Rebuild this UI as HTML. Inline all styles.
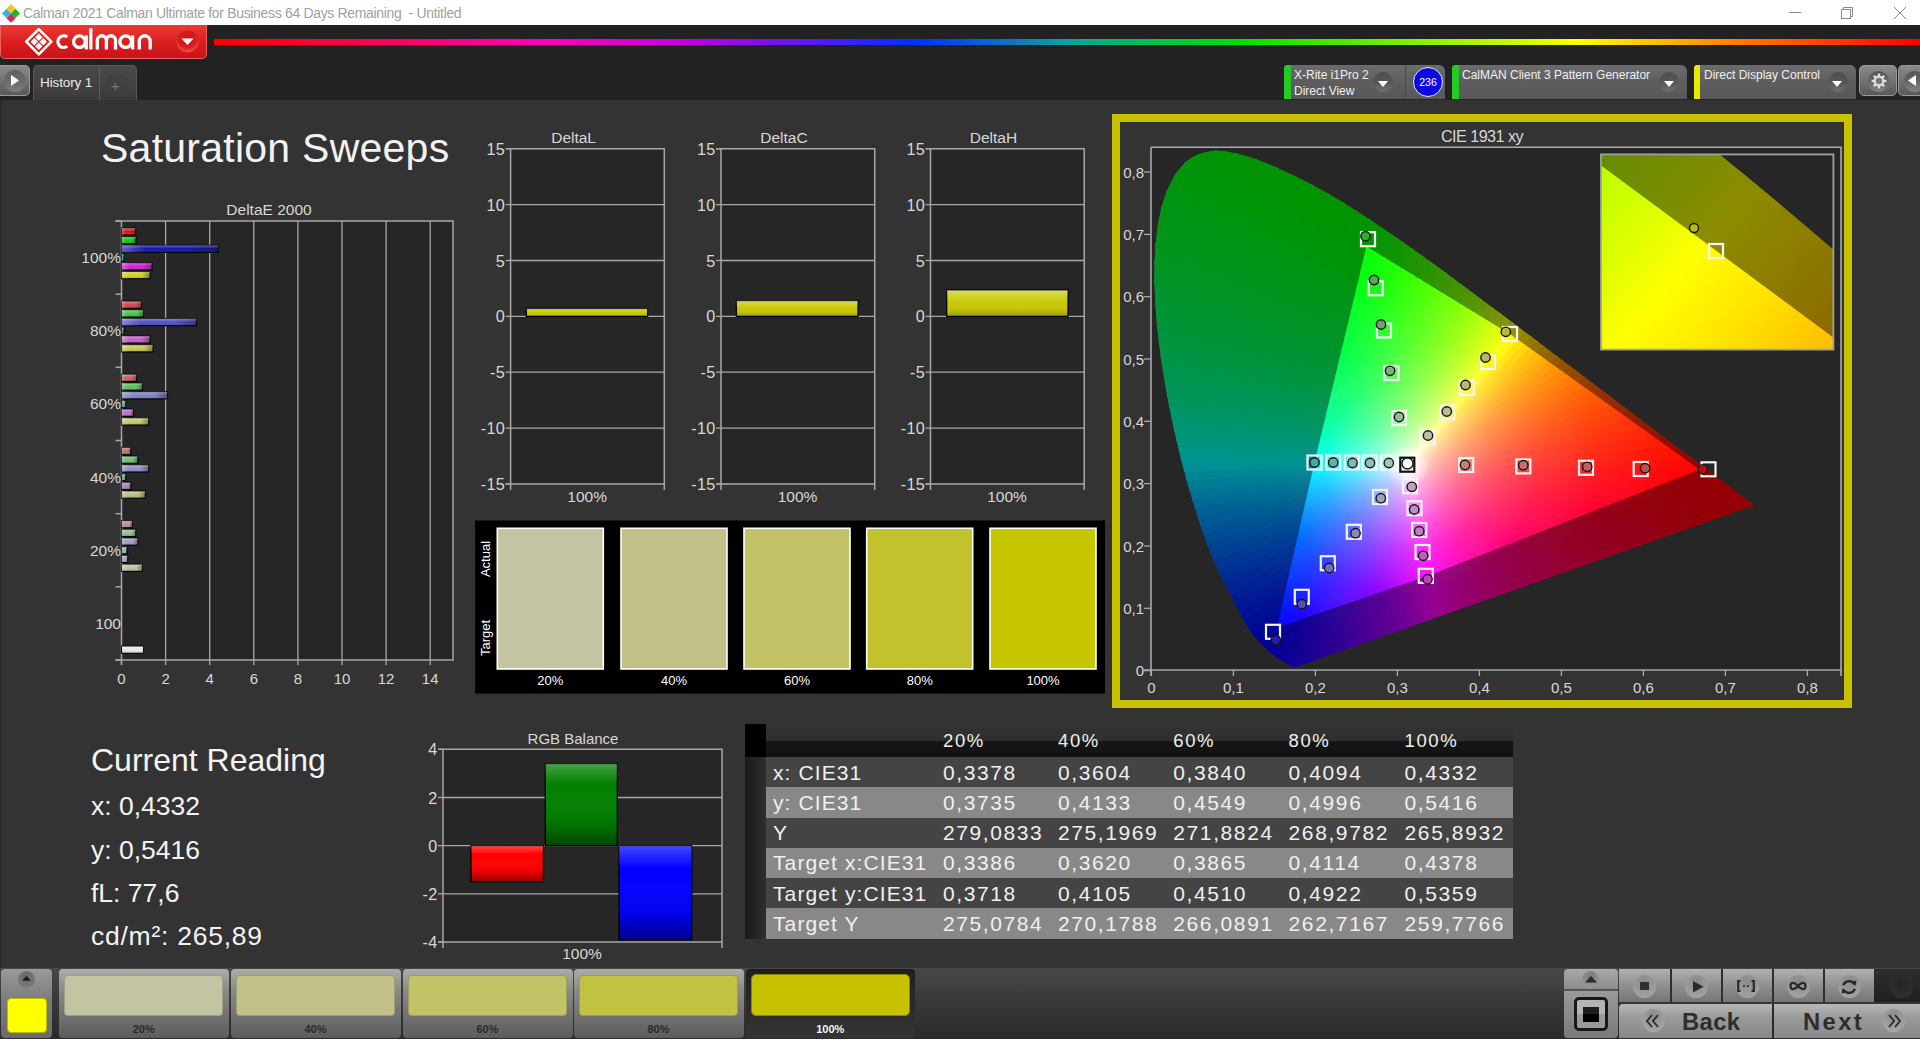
<!DOCTYPE html>
<html><head><meta charset="utf-8">
<style>
*{box-sizing:border-box}
html,body{margin:0;padding:0}
body{width:1920px;height:1039px;overflow:hidden;position:relative;background:#333333;font-family:"Liberation Sans",sans-serif;}
.a{position:absolute}
svg text{font-family:"Liberation Sans",sans-serif}
#titlebar{left:0;top:0;width:1920px;height:25px;background:#fff}
#titletxt{left:23px;top:5px;font-size:14px;line-height:17px;color:#a0a0a0;white-space:pre;letter-spacing:-0.33px}
#toolbar{left:0;top:25px;width:1920px;height:75px;background:#222222}
#bottombar{left:0;top:968px;width:1920px;height:71px;background:linear-gradient(#484848,#3a3a3a 40%,#2a2a2a)}
#main{left:0;top:100px;width:1920px;height:869px;background:#333333;border-left:1px solid #262626}
#logo{left:0;top:25px;width:207px;height:34px;border-radius:0 0 5px 5px;background:linear-gradient(#ec3a36,#d81a1c 60%,#c8141a);border:1px solid #f06060;border-top:none}
#rainbow{left:214px;top:39px;width:1706px;height:6px;background:linear-gradient(90deg,#ff0000 0%,#ff00c0 20%,#c000e0 28%,#0030ff 41%,#10a0a0 50%,#00e000 60%,#ffff00 80%,#ff8000 89%,#ff0000 100%)}
.tab{border-radius:5px 5px 0 0}
.dev{background:linear-gradient(#6c6c6c,#5e5e5e 50%,#585858);border-radius:6px 6px 0 0}
.dd{width:20px;height:20px;border-radius:50%;background:linear-gradient(#4e4e4e,#585858 55%,#707070)}
.dd:after{content:"";position:absolute;left:4.5px;top:8.5px;border-left:5.5px solid transparent;border-right:5.5px solid transparent;border-top:6.5px solid #fff}
.devt{font-size:12px;color:#f0f0f0;white-space:pre;line-height:14px}
.tt{font-size:21px;color:#f0f0f0;white-space:pre;line-height:24px;letter-spacing:1.6px}
.cr{font-size:26.5px;color:#f4f4f4;white-space:pre;line-height:30px}
</style></head>
<body>
<div id="titlebar" class="a"></div>
<svg class="a" style="left:0.5px;top:2.7px" width="20" height="20" viewBox="0 0 20 20">
<path d="M10 1 L14.6 5.6 L10 10.2 L5.4 5.6Z" fill="#f0c820"/>
<path d="M14.4 5.8 L19 10.4 L14.4 15 L9.8 10.4Z" fill="#22b422"/>
<path d="M10 10.6 L14.6 15.2 L10 19.8 L5.4 15.2Z" fill="#d82860"/>
<path d="M5.6 5.8 L10.2 10.4 L5.6 15 L1 10.4Z" fill="#30b4e8"/>
</svg>
<div id="titletxt" class="a">Calman 2021 Calman Ultimate for Business 64 Days Remaining  - Untitled</div>
<svg class="a" style="left:1780px;top:0" width="140" height="25">
<line x1="1789" y1="12.5" x2="1801" y2="12.5" stroke="#8a8a8a" stroke-width="1" transform="translate(-1780,0)"/>
<g transform="translate(-1780,0)" fill="none" stroke="#8a8a8a" stroke-width="1">
<rect x="1841.5" y="9.5" width="9" height="9"/><path d="M1843.5 9.5V7.5H1852.5V16.5H1850.5"/>
<path d="M1894 7L1906 19M1906 7L1894 19"/>
</g>
</svg>
<div id="toolbar" class="a"></div>
<div id="logo" class="a"></div>
<svg class="a" style="left:0;top:25px" width="207" height="34" viewBox="0 25 207 34">
<g transform="translate(38.8,41.7)">
<path d="M0 -12.6L12.6 0L0 12.6L-12.6 0Z" fill="none" stroke="#fff" stroke-width="2.6" stroke-linejoin="round"/>
<path d="M0 -8.2L3.7 -4.5L0 -0.8L-3.7 -4.5Z M0 0.8L3.7 4.5L0 8.2L-3.7 4.5Z M-4.5 -3.7L-0.8 0L-4.5 3.7L-8.2 0Z M4.5 -3.7L8.2 0L4.5 3.7L0.8 0Z" fill="#fff"/>
</g>
<g fill="none" stroke="#fff" stroke-width="3.3">
<path d="M67.2 37.0A5.8 5.8 0 1 0 67.2 46.3"/>
<circle cx="79.4" cy="41.65" r="5.8"/><path d="M86.3 35.4V49.4"/>
<path d="M90.8 28.2V49.4"/>
<path d="M97.3 49.4V40.3A4.55 4.55 0 0 1 106.4 40.3V49.4M106.4 40.3A4.55 4.55 0 0 1 115.5 40.3V49.4"/>
<circle cx="125.7" cy="41.65" r="5.8"/><path d="M132.6 35.4V49.4"/>
<path d="M139.3 49.4V41.2A5.45 5.45 0 0 1 150.2 41.2V49.4"/>
</g>
<circle cx="187.5" cy="41.5" r="11" fill="url(#ddg)"/>
<defs><radialGradient id="ddg" cx="0.5" cy="0.35" r="0.6"><stop offset="0" stop-color="#d01418"/><stop offset="0.7" stop-color="#d81c20"/><stop offset="1" stop-color="#e84a48"/></radialGradient></defs>
<path d="M181.5 38.5H193.5L187.5 45Z" fill="#fff"/>
</svg>
<div id="rainbow" class="a"></div>
<!-- tabs -->
<div class="a" style="left:0;top:65px;width:30px;height:31px;border-radius:0 5px 5px 0;background:linear-gradient(#8a8a8a,#5a5a5a);border:1px solid #9a9a9a;border-left:none"></div>
<div class="a" style="left:3.5px;top:69.5px;width:22px;height:22px;border-radius:50%;background:linear-gradient(#606060,#6c6c6c 55%,#7e7e7e)"></div>
<svg class="a" style="left:11px;top:75px" width="10" height="12"><path d="M0 0L8 5.5L0 11Z" fill="#fff"/></svg>
<div class="a tab" style="left:33px;top:65px;width:104px;height:35px;background:linear-gradient(#4a4a4a,#3a3a3a);border:1px solid #585858;border-bottom:none"></div>
<div class="a" style="left:99px;top:66px;width:1px;height:34px;background:#5c5c5c"></div>
<div class="a" style="left:40px;top:75px;font-size:13.6px;color:#e8e8e8;white-space:pre;letter-spacing:-0.15px">History 1</div>
<div class="a" style="left:105px;top:73px;width:23px;height:23px;border-radius:50%;background:radial-gradient(circle at 50% 35%,#444,#3c3c3c)"></div>
<div class="a" style="left:111px;top:77px;font-size:15px;color:#777">+</div>
<!-- devices -->
<div class="a dev" style="left:1284px;top:65px;width:161px;height:34px"></div>
<div class="a" style="left:1284px;top:65px;width:7px;height:34px;background:#22cc22;border-radius:3px 0 0 0"></div>
<div class="a devt" style="left:1294px;top:68px">X-Rite i1Pro 2</div>
<div class="a devt" style="left:1294px;top:84px">Direct View</div>
<div class="a dd" style="left:1373px;top:72px"></div>
<div class="a" style="left:1405px;top:66px;width:1px;height:33px;background:#4a4a4a"></div>
<div class="a" style="left:1413px;top:67px;width:30px;height:30px;border-radius:50%;background:#0a0ae0;border:1.5px solid #e8e8ff"></div>
<div class="a" style="left:1413px;top:76px;width:30px;text-align:center;font-size:10.6px;color:#fff">236</div>
<div class="a dev" style="left:1452px;top:65px;width:235px;height:34px"></div>
<div class="a" style="left:1452px;top:65px;width:7px;height:34px;background:#22cc22;border-radius:3px 0 0 0"></div>
<div class="a devt" style="left:1462px;top:68px">CalMAN Client 3 Pattern Generator</div>
<div class="a dd" style="left:1659px;top:72px"></div>
<div class="a dev" style="left:1694px;top:65px;width:162px;height:34px"></div>
<div class="a" style="left:1694px;top:65px;width:6px;height:34px;background:#e8e800;border-radius:3px 0 0 0"></div>
<div class="a devt" style="left:1704px;top:68px">Direct Display Control</div>
<div class="a dd" style="left:1827.7px;top:72px"></div>
<div class="a" style="left:1859px;top:65px;width:38px;height:31px;border-radius:5px;background:linear-gradient(#8a8a8a,#5a5a5a);border:1px solid #9a9a9a"></div>
<div class="a" style="left:1868px;top:70.5px;width:21px;height:21px;border-radius:50%;background:linear-gradient(#555,#6a6a6a 60%,#858585)"></div>
<svg class="a" style="left:1868.6px;top:70.8px" width="20" height="20" viewBox="-10 -10 20 20">
<g fill="#e0e0e0"><circle r="5.4"/>
<rect x="-1.2" y="-7.4" width="2.4" height="14.8"/><rect x="-1.2" y="-7.4" width="2.4" height="14.8" transform="rotate(45)"/><rect x="-1.2" y="-7.4" width="2.4" height="14.8" transform="rotate(90)"/><rect x="-1.2" y="-7.4" width="2.4" height="14.8" transform="rotate(135)"/></g>
<circle r="3.2" fill="#777"/>
</svg>
<div class="a" style="left:1898px;top:65px;width:30px;height:31px;border-radius:5px 0 0 5px;background:linear-gradient(#8a8a8a,#5a5a5a);border:1px solid #9a9a9a;border-right:none"></div>
<div class="a" style="left:1904px;top:70.5px;width:21px;height:21px;border-radius:50%;background:linear-gradient(#555,#6a6a6a 60%,#858585)"></div>
<svg class="a" style="left:1908px;top:75px" width="10" height="12"><path d="M8 0L0 5.5L8 11Z" fill="#fff"/></svg>

<div id="main" class="a"></div>
<!-- title -->
<div class="a" style="left:101px;top:124px;font-size:41px;color:#f2f2f2;white-space:pre;line-height:48px;letter-spacing:0.25px">Saturation Sweeps</div>

<svg class="a" style="left:0;top:0" width="1920" height="1039">
<rect x="121.5" y="221.0" width="331.5" height="439.0" fill="#262626"/>
<line x1="165.6" y1="221.0" x2="165.6" y2="660.0" stroke="#a8a8a8" stroke-width="1.3"/>
<line x1="209.7" y1="221.0" x2="209.7" y2="660.0" stroke="#a8a8a8" stroke-width="1.3"/>
<line x1="253.8" y1="221.0" x2="253.8" y2="660.0" stroke="#a8a8a8" stroke-width="1.3"/>
<line x1="297.9" y1="221.0" x2="297.9" y2="660.0" stroke="#a8a8a8" stroke-width="1.3"/>
<line x1="342.0" y1="221.0" x2="342.0" y2="660.0" stroke="#a8a8a8" stroke-width="1.3"/>
<line x1="386.1" y1="221.0" x2="386.1" y2="660.0" stroke="#a8a8a8" stroke-width="1.3"/>
<line x1="430.2" y1="221.0" x2="430.2" y2="660.0" stroke="#a8a8a8" stroke-width="1.3"/>
<path d="M115.5 221.0H453.0V660.0H115.5M121.5 221.0V665.0" fill="none" stroke="#a8a8a8" stroke-width="1.5"/>
<line x1="121.5" y1="660.0" x2="121.5" y2="665.0" stroke="#a8a8a8" stroke-width="1.3"/>
<text x="121.5" y="684.0" text-anchor="middle" font-size="15" fill="#d8d8d8">0</text>
<line x1="165.6" y1="660.0" x2="165.6" y2="665.0" stroke="#a8a8a8" stroke-width="1.3"/>
<text x="165.6" y="684.0" text-anchor="middle" font-size="15" fill="#d8d8d8">2</text>
<line x1="209.7" y1="660.0" x2="209.7" y2="665.0" stroke="#a8a8a8" stroke-width="1.3"/>
<text x="209.7" y="684.0" text-anchor="middle" font-size="15" fill="#d8d8d8">4</text>
<line x1="253.8" y1="660.0" x2="253.8" y2="665.0" stroke="#a8a8a8" stroke-width="1.3"/>
<text x="253.8" y="684.0" text-anchor="middle" font-size="15" fill="#d8d8d8">6</text>
<line x1="297.9" y1="660.0" x2="297.9" y2="665.0" stroke="#a8a8a8" stroke-width="1.3"/>
<text x="297.9" y="684.0" text-anchor="middle" font-size="15" fill="#d8d8d8">8</text>
<line x1="342.0" y1="660.0" x2="342.0" y2="665.0" stroke="#a8a8a8" stroke-width="1.3"/>
<text x="342.0" y="684.0" text-anchor="middle" font-size="15" fill="#d8d8d8">10</text>
<line x1="386.1" y1="660.0" x2="386.1" y2="665.0" stroke="#a8a8a8" stroke-width="1.3"/>
<text x="386.1" y="684.0" text-anchor="middle" font-size="15" fill="#d8d8d8">12</text>
<line x1="430.2" y1="660.0" x2="430.2" y2="665.0" stroke="#a8a8a8" stroke-width="1.3"/>
<text x="430.2" y="684.0" text-anchor="middle" font-size="15" fill="#d8d8d8">14</text>
<line x1="115.5" y1="221.0" x2="121.5" y2="221.0" stroke="#a8a8a8" stroke-width="1.5"/>
<line x1="115.5" y1="294.2" x2="121.5" y2="294.2" stroke="#a8a8a8" stroke-width="1.5"/>
<line x1="115.5" y1="367.3" x2="121.5" y2="367.3" stroke="#a8a8a8" stroke-width="1.5"/>
<line x1="115.5" y1="440.5" x2="121.5" y2="440.5" stroke="#a8a8a8" stroke-width="1.5"/>
<line x1="115.5" y1="513.7" x2="121.5" y2="513.7" stroke="#a8a8a8" stroke-width="1.5"/>
<line x1="115.5" y1="586.8" x2="121.5" y2="586.8" stroke="#a8a8a8" stroke-width="1.5"/>
<line x1="115.5" y1="660.0" x2="121.5" y2="660.0" stroke="#a8a8a8" stroke-width="1.5"/>
<text x="121.0" y="263.1" text-anchor="end" font-size="15.5" fill="#d8d8d8">100%</text>
<text x="121.0" y="336.2" text-anchor="end" font-size="15.5" fill="#d8d8d8">80%</text>
<text x="121.0" y="409.4" text-anchor="end" font-size="15.5" fill="#d8d8d8">60%</text>
<text x="121.0" y="482.6" text-anchor="end" font-size="15.5" fill="#d8d8d8">40%</text>
<text x="121.0" y="555.8" text-anchor="end" font-size="15.5" fill="#d8d8d8">20%</text>
<text x="121.0" y="628.9" text-anchor="end" font-size="15.5" fill="#d8d8d8">100</text>
<defs><linearGradient id="bsh" x1="0" y1="0" x2="0" y2="1"><stop offset="0" stop-color="#fff" stop-opacity="0.35"/><stop offset="0.5" stop-color="#fff" stop-opacity="0"/><stop offset="1" stop-color="#000" stop-opacity="0.25"/></linearGradient><linearGradient id="bsx" x1="0" y1="0" x2="1" y2="0"><stop offset="0" stop-color="#fff" stop-opacity="0.32"/><stop offset="0.25" stop-color="#fff" stop-opacity="0"/><stop offset="0.7" stop-color="#000" stop-opacity="0"/><stop offset="1" stop-color="#000" stop-opacity="0.38"/></linearGradient></defs>
<rect x="121.5" y="227.9" width="14.1" height="7.2" fill="#d81818" stroke="#000" stroke-width="1.1"/>
<rect x="121.5" y="227.9" width="14.1" height="7.2" fill="url(#bsx)"/>
<rect x="121.5" y="227.9" width="14.1" height="7.2" fill="url(#bsh)"/>
<rect x="121.5" y="236.6" width="14.5" height="7.2" fill="#18c818" stroke="#000" stroke-width="1.1"/>
<rect x="121.5" y="236.6" width="14.5" height="7.2" fill="url(#bsx)"/>
<rect x="121.5" y="236.6" width="14.5" height="7.2" fill="url(#bsh)"/>
<rect x="121.5" y="245.3" width="96.5" height="7.2" fill="#1010b0" stroke="#000" stroke-width="1.1"/>
<rect x="121.5" y="245.3" width="96.5" height="7.2" fill="url(#bsx)"/>
<rect x="121.5" y="245.3" width="96.5" height="7.2" fill="url(#bsh)"/>
<rect x="121.5" y="254.1" width="2.5" height="7.2" fill="#20b0b0" stroke="#000" stroke-width="1.1"/>
<rect x="121.5" y="254.1" width="2.5" height="7.2" fill="url(#bsx)"/>
<rect x="121.5" y="254.1" width="2.5" height="7.2" fill="url(#bsh)"/>
<rect x="121.5" y="262.8" width="30.5" height="7.2" fill="#d020d8" stroke="#000" stroke-width="1.1"/>
<rect x="121.5" y="262.8" width="30.5" height="7.2" fill="url(#bsx)"/>
<rect x="121.5" y="262.8" width="30.5" height="7.2" fill="url(#bsh)"/>
<rect x="121.5" y="271.5" width="28.5" height="7.2" fill="#d0d020" stroke="#000" stroke-width="1.1"/>
<rect x="121.5" y="271.5" width="28.5" height="7.2" fill="url(#bsx)"/>
<rect x="121.5" y="271.5" width="28.5" height="7.2" fill="url(#bsh)"/>
<rect x="121.5" y="301.1" width="20.0" height="7.2" fill="#d04848" stroke="#000" stroke-width="1.1"/>
<rect x="121.5" y="301.1" width="20.0" height="7.2" fill="url(#bsx)"/>
<rect x="121.5" y="301.1" width="20.0" height="7.2" fill="url(#bsh)"/>
<rect x="121.5" y="309.8" width="22.0" height="7.2" fill="#48c848" stroke="#000" stroke-width="1.1"/>
<rect x="121.5" y="309.8" width="22.0" height="7.2" fill="url(#bsx)"/>
<rect x="121.5" y="309.8" width="22.0" height="7.2" fill="url(#bsh)"/>
<rect x="121.5" y="318.5" width="74.9" height="7.2" fill="#5050c8" stroke="#000" stroke-width="1.1"/>
<rect x="121.5" y="318.5" width="74.9" height="7.2" fill="url(#bsx)"/>
<rect x="121.5" y="318.5" width="74.9" height="7.2" fill="url(#bsh)"/>
<rect x="121.5" y="327.2" width="2.5" height="7.2" fill="#40b0b0" stroke="#000" stroke-width="1.1"/>
<rect x="121.5" y="327.2" width="2.5" height="7.2" fill="url(#bsx)"/>
<rect x="121.5" y="327.2" width="2.5" height="7.2" fill="url(#bsh)"/>
<rect x="121.5" y="335.9" width="28.5" height="7.2" fill="#d058d8" stroke="#000" stroke-width="1.1"/>
<rect x="121.5" y="335.9" width="28.5" height="7.2" fill="url(#bsx)"/>
<rect x="121.5" y="335.9" width="28.5" height="7.2" fill="url(#bsh)"/>
<rect x="121.5" y="344.7" width="31.5" height="7.2" fill="#c8c850" stroke="#000" stroke-width="1.1"/>
<rect x="121.5" y="344.7" width="31.5" height="7.2" fill="url(#bsx)"/>
<rect x="121.5" y="344.7" width="31.5" height="7.2" fill="url(#bsh)"/>
<rect x="121.5" y="374.2" width="15.1" height="7.2" fill="#c86060" stroke="#000" stroke-width="1.1"/>
<rect x="121.5" y="374.2" width="15.1" height="7.2" fill="url(#bsx)"/>
<rect x="121.5" y="374.2" width="15.1" height="7.2" fill="url(#bsh)"/>
<rect x="121.5" y="383.0" width="20.9" height="7.2" fill="#60c060" stroke="#000" stroke-width="1.1"/>
<rect x="121.5" y="383.0" width="20.9" height="7.2" fill="url(#bsx)"/>
<rect x="121.5" y="383.0" width="20.9" height="7.2" fill="url(#bsh)"/>
<rect x="121.5" y="391.7" width="46.0" height="7.2" fill="#8080c8" stroke="#000" stroke-width="1.1"/>
<rect x="121.5" y="391.7" width="46.0" height="7.2" fill="url(#bsx)"/>
<rect x="121.5" y="391.7" width="46.0" height="7.2" fill="url(#bsh)"/>
<rect x="121.5" y="400.4" width="4.1" height="7.2" fill="#60b0b0" stroke="#000" stroke-width="1.1"/>
<rect x="121.5" y="400.4" width="4.1" height="7.2" fill="url(#bsx)"/>
<rect x="121.5" y="400.4" width="4.1" height="7.2" fill="url(#bsh)"/>
<rect x="121.5" y="409.1" width="11.9" height="7.2" fill="#c070d0" stroke="#000" stroke-width="1.1"/>
<rect x="121.5" y="409.1" width="11.9" height="7.2" fill="url(#bsx)"/>
<rect x="121.5" y="409.1" width="11.9" height="7.2" fill="url(#bsh)"/>
<rect x="121.5" y="417.8" width="27.2" height="7.2" fill="#c8c870" stroke="#000" stroke-width="1.1"/>
<rect x="121.5" y="417.8" width="27.2" height="7.2" fill="url(#bsx)"/>
<rect x="121.5" y="417.8" width="27.2" height="7.2" fill="url(#bsh)"/>
<rect x="121.5" y="447.4" width="9.3" height="7.2" fill="#c07070" stroke="#000" stroke-width="1.1"/>
<rect x="121.5" y="447.4" width="9.3" height="7.2" fill="url(#bsx)"/>
<rect x="121.5" y="447.4" width="9.3" height="7.2" fill="url(#bsh)"/>
<rect x="121.5" y="456.1" width="16.3" height="7.2" fill="#70c070" stroke="#000" stroke-width="1.1"/>
<rect x="121.5" y="456.1" width="16.3" height="7.2" fill="url(#bsx)"/>
<rect x="121.5" y="456.1" width="16.3" height="7.2" fill="url(#bsh)"/>
<rect x="121.5" y="464.8" width="27.2" height="7.2" fill="#9090c8" stroke="#000" stroke-width="1.1"/>
<rect x="121.5" y="464.8" width="27.2" height="7.2" fill="url(#bsx)"/>
<rect x="121.5" y="464.8" width="27.2" height="7.2" fill="url(#bsh)"/>
<rect x="121.5" y="473.6" width="4.1" height="7.2" fill="#70b0b0" stroke="#000" stroke-width="1.1"/>
<rect x="121.5" y="473.6" width="4.1" height="7.2" fill="url(#bsx)"/>
<rect x="121.5" y="473.6" width="4.1" height="7.2" fill="url(#bsh)"/>
<rect x="121.5" y="482.3" width="9.3" height="7.2" fill="#b080c8" stroke="#000" stroke-width="1.1"/>
<rect x="121.5" y="482.3" width="9.3" height="7.2" fill="url(#bsx)"/>
<rect x="121.5" y="482.3" width="9.3" height="7.2" fill="url(#bsh)"/>
<rect x="121.5" y="491.0" width="23.8" height="7.2" fill="#c0c080" stroke="#000" stroke-width="1.1"/>
<rect x="121.5" y="491.0" width="23.8" height="7.2" fill="url(#bsx)"/>
<rect x="121.5" y="491.0" width="23.8" height="7.2" fill="url(#bsh)"/>
<rect x="121.5" y="520.6" width="10.8" height="7.2" fill="#c09090" stroke="#000" stroke-width="1.1"/>
<rect x="121.5" y="520.6" width="10.8" height="7.2" fill="url(#bsx)"/>
<rect x="121.5" y="520.6" width="10.8" height="7.2" fill="url(#bsh)"/>
<rect x="121.5" y="529.3" width="14.2" height="7.2" fill="#90c098" stroke="#000" stroke-width="1.1"/>
<rect x="121.5" y="529.3" width="14.2" height="7.2" fill="url(#bsx)"/>
<rect x="121.5" y="529.3" width="14.2" height="7.2" fill="url(#bsh)"/>
<rect x="121.5" y="538.0" width="16.3" height="7.2" fill="#a0a0c8" stroke="#000" stroke-width="1.1"/>
<rect x="121.5" y="538.0" width="16.3" height="7.2" fill="url(#bsx)"/>
<rect x="121.5" y="538.0" width="16.3" height="7.2" fill="url(#bsh)"/>
<rect x="121.5" y="546.7" width="5.5" height="7.2" fill="#90b8b8" stroke="#000" stroke-width="1.1"/>
<rect x="121.5" y="546.7" width="5.5" height="7.2" fill="url(#bsx)"/>
<rect x="121.5" y="546.7" width="5.5" height="7.2" fill="url(#bsh)"/>
<rect x="121.5" y="555.4" width="6.2" height="7.2" fill="#b0a0c0" stroke="#000" stroke-width="1.1"/>
<rect x="121.5" y="555.4" width="6.2" height="7.2" fill="url(#bsx)"/>
<rect x="121.5" y="555.4" width="6.2" height="7.2" fill="url(#bsh)"/>
<rect x="121.5" y="564.2" width="20.9" height="7.2" fill="#c0c0a0" stroke="#000" stroke-width="1.1"/>
<rect x="121.5" y="564.2" width="20.9" height="7.2" fill="url(#bsx)"/>
<rect x="121.5" y="564.2" width="20.9" height="7.2" fill="url(#bsh)"/>
<rect x="121.5" y="646.1" width="22.0" height="7.2" fill="#e8e8e8" stroke="#000" stroke-width="1.1"/>
<rect x="121.5" y="646.1" width="22.0" height="7.2" fill="url(#bsh)"/>
<text x="269" y="215" text-anchor="middle" font-size="15.5" fill="#d8d8d8">DeltaE 2000</text>
<rect x="510.6" y="148.7" width="153.7" height="335.3" fill="#262626"/>
<line x1="510.6" y1="204.6" x2="664.3" y2="204.6" stroke="#a8a8a8" stroke-width="1.3"/>
<line x1="510.6" y1="260.5" x2="664.3" y2="260.5" stroke="#a8a8a8" stroke-width="1.3"/>
<line x1="510.6" y1="316.4" x2="664.3" y2="316.4" stroke="#a8a8a8" stroke-width="1.3"/>
<line x1="510.6" y1="372.2" x2="664.3" y2="372.2" stroke="#a8a8a8" stroke-width="1.3"/>
<line x1="510.6" y1="428.1" x2="664.3" y2="428.1" stroke="#a8a8a8" stroke-width="1.3"/>
<path d="M505.6 148.7H664.3V490.0M505.6 484.0H664.3M510.6 148.7V490.0" fill="none" stroke="#a8a8a8" stroke-width="1.5"/>
<line x1="505.6" y1="148.7" x2="510.6" y2="148.7" stroke="#a8a8a8" stroke-width="1.3"/>
<text x="505.1" y="154.7" text-anchor="end" font-size="16.2" letter-spacing="0.3" fill="#d8d8d8">15</text>
<line x1="505.6" y1="204.6" x2="510.6" y2="204.6" stroke="#a8a8a8" stroke-width="1.3"/>
<text x="505.1" y="210.6" text-anchor="end" font-size="16.2" letter-spacing="0.3" fill="#d8d8d8">10</text>
<line x1="505.6" y1="260.5" x2="510.6" y2="260.5" stroke="#a8a8a8" stroke-width="1.3"/>
<text x="505.1" y="266.5" text-anchor="end" font-size="16.2" letter-spacing="0.3" fill="#d8d8d8">5</text>
<line x1="505.6" y1="316.4" x2="510.6" y2="316.4" stroke="#a8a8a8" stroke-width="1.3"/>
<text x="505.1" y="322.4" text-anchor="end" font-size="16.2" letter-spacing="0.3" fill="#d8d8d8">0</text>
<line x1="505.6" y1="372.2" x2="510.6" y2="372.2" stroke="#a8a8a8" stroke-width="1.3"/>
<text x="505.1" y="378.2" text-anchor="end" font-size="16.2" letter-spacing="0.3" fill="#d8d8d8">-5</text>
<line x1="505.6" y1="428.1" x2="510.6" y2="428.1" stroke="#a8a8a8" stroke-width="1.3"/>
<text x="505.1" y="434.1" text-anchor="end" font-size="16.2" letter-spacing="0.3" fill="#d8d8d8">-10</text>
<line x1="505.6" y1="484.0" x2="510.6" y2="484.0" stroke="#a8a8a8" stroke-width="1.3"/>
<text x="505.1" y="490.0" text-anchor="end" font-size="16.2" letter-spacing="0.3" fill="#d8d8d8">-15</text>
<text x="573.6" y="143" text-anchor="middle" font-size="15.5" fill="#d8d8d8">DeltaL</text>
<text x="587.1" y="502" text-anchor="middle" font-size="15.5" fill="#d8d8d8">100%</text>
<rect x="526.4" y="308.5" width="121.2" height="7.9" fill="#c8c800" stroke="#000" stroke-width="1.3"/>
<rect x="526.4" y="308.5" width="121.2" height="7.9" fill="url(#bsh)"/>
<rect x="721.0" y="148.7" width="153.7" height="335.3" fill="#262626"/>
<line x1="721.0" y1="204.6" x2="874.7" y2="204.6" stroke="#a8a8a8" stroke-width="1.3"/>
<line x1="721.0" y1="260.5" x2="874.7" y2="260.5" stroke="#a8a8a8" stroke-width="1.3"/>
<line x1="721.0" y1="316.4" x2="874.7" y2="316.4" stroke="#a8a8a8" stroke-width="1.3"/>
<line x1="721.0" y1="372.2" x2="874.7" y2="372.2" stroke="#a8a8a8" stroke-width="1.3"/>
<line x1="721.0" y1="428.1" x2="874.7" y2="428.1" stroke="#a8a8a8" stroke-width="1.3"/>
<path d="M716.0 148.7H874.7V490.0M716.0 484.0H874.7M721.0 148.7V490.0" fill="none" stroke="#a8a8a8" stroke-width="1.5"/>
<line x1="716.0" y1="148.7" x2="721.0" y2="148.7" stroke="#a8a8a8" stroke-width="1.3"/>
<text x="715.5" y="154.7" text-anchor="end" font-size="16.2" letter-spacing="0.3" fill="#d8d8d8">15</text>
<line x1="716.0" y1="204.6" x2="721.0" y2="204.6" stroke="#a8a8a8" stroke-width="1.3"/>
<text x="715.5" y="210.6" text-anchor="end" font-size="16.2" letter-spacing="0.3" fill="#d8d8d8">10</text>
<line x1="716.0" y1="260.5" x2="721.0" y2="260.5" stroke="#a8a8a8" stroke-width="1.3"/>
<text x="715.5" y="266.5" text-anchor="end" font-size="16.2" letter-spacing="0.3" fill="#d8d8d8">5</text>
<line x1="716.0" y1="316.4" x2="721.0" y2="316.4" stroke="#a8a8a8" stroke-width="1.3"/>
<text x="715.5" y="322.4" text-anchor="end" font-size="16.2" letter-spacing="0.3" fill="#d8d8d8">0</text>
<line x1="716.0" y1="372.2" x2="721.0" y2="372.2" stroke="#a8a8a8" stroke-width="1.3"/>
<text x="715.5" y="378.2" text-anchor="end" font-size="16.2" letter-spacing="0.3" fill="#d8d8d8">-5</text>
<line x1="716.0" y1="428.1" x2="721.0" y2="428.1" stroke="#a8a8a8" stroke-width="1.3"/>
<text x="715.5" y="434.1" text-anchor="end" font-size="16.2" letter-spacing="0.3" fill="#d8d8d8">-10</text>
<line x1="716.0" y1="484.0" x2="721.0" y2="484.0" stroke="#a8a8a8" stroke-width="1.3"/>
<text x="715.5" y="490.0" text-anchor="end" font-size="16.2" letter-spacing="0.3" fill="#d8d8d8">-15</text>
<text x="784.0" y="143" text-anchor="middle" font-size="15.5" fill="#d8d8d8">DeltaC</text>
<text x="797.5" y="502" text-anchor="middle" font-size="15.5" fill="#d8d8d8">100%</text>
<rect x="736.4" y="300.6" width="121.6" height="15.8" fill="#c8c800" stroke="#000" stroke-width="1.3"/>
<rect x="736.4" y="300.6" width="121.6" height="15.8" fill="url(#bsh)"/>
<rect x="930.5" y="148.7" width="153.7" height="335.3" fill="#262626"/>
<line x1="930.5" y1="204.6" x2="1084.2" y2="204.6" stroke="#a8a8a8" stroke-width="1.3"/>
<line x1="930.5" y1="260.5" x2="1084.2" y2="260.5" stroke="#a8a8a8" stroke-width="1.3"/>
<line x1="930.5" y1="316.4" x2="1084.2" y2="316.4" stroke="#a8a8a8" stroke-width="1.3"/>
<line x1="930.5" y1="372.2" x2="1084.2" y2="372.2" stroke="#a8a8a8" stroke-width="1.3"/>
<line x1="930.5" y1="428.1" x2="1084.2" y2="428.1" stroke="#a8a8a8" stroke-width="1.3"/>
<path d="M925.5 148.7H1084.2V490.0M925.5 484.0H1084.2M930.5 148.7V490.0" fill="none" stroke="#a8a8a8" stroke-width="1.5"/>
<line x1="925.5" y1="148.7" x2="930.5" y2="148.7" stroke="#a8a8a8" stroke-width="1.3"/>
<text x="925.0" y="154.7" text-anchor="end" font-size="16.2" letter-spacing="0.3" fill="#d8d8d8">15</text>
<line x1="925.5" y1="204.6" x2="930.5" y2="204.6" stroke="#a8a8a8" stroke-width="1.3"/>
<text x="925.0" y="210.6" text-anchor="end" font-size="16.2" letter-spacing="0.3" fill="#d8d8d8">10</text>
<line x1="925.5" y1="260.5" x2="930.5" y2="260.5" stroke="#a8a8a8" stroke-width="1.3"/>
<text x="925.0" y="266.5" text-anchor="end" font-size="16.2" letter-spacing="0.3" fill="#d8d8d8">5</text>
<line x1="925.5" y1="316.4" x2="930.5" y2="316.4" stroke="#a8a8a8" stroke-width="1.3"/>
<text x="925.0" y="322.4" text-anchor="end" font-size="16.2" letter-spacing="0.3" fill="#d8d8d8">0</text>
<line x1="925.5" y1="372.2" x2="930.5" y2="372.2" stroke="#a8a8a8" stroke-width="1.3"/>
<text x="925.0" y="378.2" text-anchor="end" font-size="16.2" letter-spacing="0.3" fill="#d8d8d8">-5</text>
<line x1="925.5" y1="428.1" x2="930.5" y2="428.1" stroke="#a8a8a8" stroke-width="1.3"/>
<text x="925.0" y="434.1" text-anchor="end" font-size="16.2" letter-spacing="0.3" fill="#d8d8d8">-10</text>
<line x1="925.5" y1="484.0" x2="930.5" y2="484.0" stroke="#a8a8a8" stroke-width="1.3"/>
<text x="925.0" y="490.0" text-anchor="end" font-size="16.2" letter-spacing="0.3" fill="#d8d8d8">-15</text>
<text x="993.5" y="143" text-anchor="middle" font-size="15.5" fill="#d8d8d8">DeltaH</text>
<text x="1007.0" y="502" text-anchor="middle" font-size="15.5" fill="#d8d8d8">100%</text>
<rect x="946.7" y="290.0" width="121.3" height="26.4" fill="#c8c800" stroke="#000" stroke-width="1.3"/>
<rect x="946.7" y="290.0" width="121.3" height="26.4" fill="url(#bsh)"/>
<rect x="475" y="520.5" width="630" height="173" fill="#000"/>
<rect x="497.3" y="528.3" width="106" height="140.7" fill="#c4c4a2" stroke="#fff" stroke-width="1.6"/>
<text x="550.3" y="685" text-anchor="middle" font-size="13" fill="#fff">20%</text>
<rect x="621" y="528.3" width="106" height="140.7" fill="#c2c288" stroke="#fff" stroke-width="1.6"/>
<text x="674.0" y="685" text-anchor="middle" font-size="13" fill="#fff">40%</text>
<rect x="744" y="528.3" width="106" height="140.7" fill="#c2c266" stroke="#fff" stroke-width="1.6"/>
<text x="797.0" y="685" text-anchor="middle" font-size="13" fill="#fff">60%</text>
<rect x="866.7" y="528.3" width="106" height="140.7" fill="#c2c22e" stroke="#fff" stroke-width="1.6"/>
<text x="919.7" y="685" text-anchor="middle" font-size="13" fill="#fff">80%</text>
<rect x="990" y="528.3" width="106" height="140.7" fill="#c6c600" stroke="#fff" stroke-width="1.6"/>
<text x="1043.0" y="685" text-anchor="middle" font-size="13" fill="#fff">100%</text>
<text transform="translate(490,559) rotate(-90)" text-anchor="middle" font-size="13" fill="#fff">Actual</text>
<text transform="translate(490,638) rotate(-90)" text-anchor="middle" font-size="13" fill="#fff">Target</text>
<rect x="1151" y="147.2" width="690" height="522.8" fill="#262626"/>
<defs><radialGradient id="wglow"><stop offset="0" stop-color="#fff" stop-opacity="1"/><stop offset="0.45" stop-color="#fff" stop-opacity="0.55"/><stop offset="1" stop-color="#fff" stop-opacity="0"/></radialGradient><linearGradient id="w0" gradientUnits="userSpaceOnUse" x1="1407.8" y1="465.6" x2="2157.8" y2="465.6"><stop offset="0.0000" stop-color="#ffffff"/><stop offset="0.0040" stop-color="#fff5f5"/><stop offset="0.0093" stop-color="#ffe8e8"/><stop offset="0.0173" stop-color="#ffd7d6"/><stop offset="0.0293" stop-color="#ffc0bf"/><stop offset="0.0467" stop-color="#ffa5a3"/><stop offset="0.0733" stop-color="#ff8482"/><stop offset="0.1133" stop-color="#ff615f"/><stop offset="0.1733" stop-color="#ff3f3b"/><stop offset="0.2533" stop-color="#ff211d"/><stop offset="0.3600" stop-color="#ff0a05"/><stop offset="0.5067" stop-color="#ff0000"/><stop offset="0.6933" stop-color="#ff0000"/><stop offset="1.0000" stop-color="#ff0000"/></linearGradient><linearGradient id="w1" gradientUnits="userSpaceOnUse" x1="1407.8" y1="465.6" x2="2157.1" y2="498.3"><stop offset="0.0000" stop-color="#ffffff"/><stop offset="0.0040" stop-color="#fff4f5"/><stop offset="0.0093" stop-color="#ffe7e8"/><stop offset="0.0173" stop-color="#ffd5d6"/><stop offset="0.0293" stop-color="#ffbebf"/><stop offset="0.0467" stop-color="#ffa2a4"/><stop offset="0.0733" stop-color="#ff8184"/><stop offset="0.1133" stop-color="#ff5d61"/><stop offset="0.1733" stop-color="#ff393e"/><stop offset="0.2533" stop-color="#ff1b21"/><stop offset="0.3600" stop-color="#ff0309"/><stop offset="0.5067" stop-color="#ff0000"/><stop offset="0.6933" stop-color="#ff0000"/><stop offset="1.0000" stop-color="#ff0000"/></linearGradient><linearGradient id="w2" gradientUnits="userSpaceOnUse" x1="1407.8" y1="465.6" x2="2155.0" y2="530.9"><stop offset="0.0000" stop-color="#ffffff"/><stop offset="0.0040" stop-color="#fff4f5"/><stop offset="0.0093" stop-color="#ffe6e8"/><stop offset="0.0173" stop-color="#ffd4d7"/><stop offset="0.0293" stop-color="#ffbcc0"/><stop offset="0.0467" stop-color="#ff9fa5"/><stop offset="0.0733" stop-color="#ff7d85"/><stop offset="0.1133" stop-color="#ff5963"/><stop offset="0.1733" stop-color="#ff3441"/><stop offset="0.2533" stop-color="#ff1624"/><stop offset="0.3600" stop-color="#ff000d"/><stop offset="0.5067" stop-color="#ff0000"/><stop offset="0.6933" stop-color="#ff0000"/><stop offset="1.0000" stop-color="#ff0000"/></linearGradient><linearGradient id="w3" gradientUnits="userSpaceOnUse" x1="1407.8" y1="465.6" x2="2151.4" y2="563.5"><stop offset="0.0000" stop-color="#ffffff"/><stop offset="0.0040" stop-color="#fff4f5"/><stop offset="0.0093" stop-color="#ffe6e8"/><stop offset="0.0173" stop-color="#ffd3d7"/><stop offset="0.0293" stop-color="#ffbac1"/><stop offset="0.0467" stop-color="#ff9da7"/><stop offset="0.0733" stop-color="#ff7a87"/><stop offset="0.1133" stop-color="#ff5465"/><stop offset="0.1733" stop-color="#ff2f44"/><stop offset="0.2533" stop-color="#ff1028"/><stop offset="0.3600" stop-color="#ff0011"/><stop offset="0.5067" stop-color="#ff0000"/><stop offset="0.6933" stop-color="#ff0000"/><stop offset="1.0000" stop-color="#ff0000"/></linearGradient><linearGradient id="w4" gradientUnits="userSpaceOnUse" x1="1407.8" y1="465.6" x2="2146.4" y2="595.8"><stop offset="0.0000" stop-color="#ffffff"/><stop offset="0.0040" stop-color="#fff3f5"/><stop offset="0.0093" stop-color="#ffe5e9"/><stop offset="0.0173" stop-color="#ffd2d8"/><stop offset="0.0293" stop-color="#ffb9c2"/><stop offset="0.0467" stop-color="#ff9aa8"/><stop offset="0.0733" stop-color="#ff7789"/><stop offset="0.1133" stop-color="#ff5068"/><stop offset="0.1733" stop-color="#ff2a47"/><stop offset="0.2533" stop-color="#ff0b2b"/><stop offset="0.3600" stop-color="#ff0015"/><stop offset="0.5067" stop-color="#ff0003"/><stop offset="0.6933" stop-color="#ff0000"/><stop offset="1.0000" stop-color="#ff0000"/></linearGradient><linearGradient id="w5" gradientUnits="userSpaceOnUse" x1="1407.8" y1="465.6" x2="2140.0" y2="627.9"><stop offset="0.0000" stop-color="#ffffff"/><stop offset="0.0040" stop-color="#fff3f5"/><stop offset="0.0093" stop-color="#ffe5e9"/><stop offset="0.0173" stop-color="#ffd1d8"/><stop offset="0.0293" stop-color="#ffb7c3"/><stop offset="0.0467" stop-color="#ff98a9"/><stop offset="0.0733" stop-color="#ff748b"/><stop offset="0.1133" stop-color="#ff4d6a"/><stop offset="0.1733" stop-color="#ff264a"/><stop offset="0.2533" stop-color="#ff052f"/><stop offset="0.3600" stop-color="#ff0019"/><stop offset="0.5067" stop-color="#ff0007"/><stop offset="0.6933" stop-color="#ff0000"/><stop offset="1.0000" stop-color="#ff0000"/></linearGradient><linearGradient id="w6" gradientUnits="userSpaceOnUse" x1="1407.8" y1="465.6" x2="2132.3" y2="659.7"><stop offset="0.0000" stop-color="#ffffff"/><stop offset="0.0040" stop-color="#fff3f5"/><stop offset="0.0093" stop-color="#ffe4e9"/><stop offset="0.0173" stop-color="#ffd0d9"/><stop offset="0.0293" stop-color="#ffb5c4"/><stop offset="0.0467" stop-color="#ff96ab"/><stop offset="0.0733" stop-color="#ff718d"/><stop offset="0.1133" stop-color="#ff496d"/><stop offset="0.1733" stop-color="#ff214e"/><stop offset="0.2533" stop-color="#ff0033"/><stop offset="0.3600" stop-color="#ff001e"/><stop offset="0.5067" stop-color="#ff000c"/><stop offset="0.6933" stop-color="#ff0000"/><stop offset="1.0000" stop-color="#ff0000"/></linearGradient><linearGradient id="w7" gradientUnits="userSpaceOnUse" x1="1407.8" y1="465.6" x2="2123.1" y2="691.1"><stop offset="0.0000" stop-color="#ffffff"/><stop offset="0.0040" stop-color="#fff3f6"/><stop offset="0.0093" stop-color="#ffe4ea"/><stop offset="0.0173" stop-color="#ffcfda"/><stop offset="0.0293" stop-color="#ffb4c5"/><stop offset="0.0467" stop-color="#ff94ad"/><stop offset="0.0733" stop-color="#ff6e90"/><stop offset="0.1133" stop-color="#ff4570"/><stop offset="0.1733" stop-color="#ff1d51"/><stop offset="0.2533" stop-color="#ff0037"/><stop offset="0.3600" stop-color="#ff0022"/><stop offset="0.5067" stop-color="#ff0011"/><stop offset="0.6933" stop-color="#ff0004"/><stop offset="1.0000" stop-color="#ff0000"/></linearGradient><linearGradient id="w8" gradientUnits="userSpaceOnUse" x1="1407.8" y1="465.6" x2="2112.6" y2="722.1"><stop offset="0.0000" stop-color="#ffffff"/><stop offset="0.0040" stop-color="#fff3f6"/><stop offset="0.0093" stop-color="#ffe3ea"/><stop offset="0.0173" stop-color="#ffcedb"/><stop offset="0.0293" stop-color="#ffb3c7"/><stop offset="0.0467" stop-color="#ff92af"/><stop offset="0.0733" stop-color="#ff6c92"/><stop offset="0.1133" stop-color="#ff4273"/><stop offset="0.1733" stop-color="#ff1955"/><stop offset="0.2533" stop-color="#ff003b"/><stop offset="0.3600" stop-color="#ff0027"/><stop offset="0.5067" stop-color="#ff0015"/><stop offset="0.6933" stop-color="#ff0009"/><stop offset="1.0000" stop-color="#ff0000"/></linearGradient><linearGradient id="w9" gradientUnits="userSpaceOnUse" x1="1407.8" y1="465.6" x2="2100.7" y2="752.6"><stop offset="0.0000" stop-color="#ffffff"/><stop offset="0.0040" stop-color="#fff2f6"/><stop offset="0.0093" stop-color="#ffe3eb"/><stop offset="0.0173" stop-color="#ffcddc"/><stop offset="0.0293" stop-color="#ffb2c8"/><stop offset="0.0467" stop-color="#ff91b1"/><stop offset="0.0733" stop-color="#ff6995"/><stop offset="0.1133" stop-color="#ff3f77"/><stop offset="0.1733" stop-color="#ff1559"/><stop offset="0.2533" stop-color="#ff0040"/><stop offset="0.3600" stop-color="#ff002b"/><stop offset="0.5067" stop-color="#ff001a"/><stop offset="0.6933" stop-color="#ff000e"/><stop offset="1.0000" stop-color="#ff0000"/></linearGradient><linearGradient id="w10" gradientUnits="userSpaceOnUse" x1="1407.8" y1="465.6" x2="2087.5" y2="782.5"><stop offset="0.0000" stop-color="#ffffff"/><stop offset="0.0040" stop-color="#fff2f6"/><stop offset="0.0093" stop-color="#ffe2eb"/><stop offset="0.0173" stop-color="#ffcddd"/><stop offset="0.0293" stop-color="#ffb1ca"/><stop offset="0.0467" stop-color="#ff8fb3"/><stop offset="0.0733" stop-color="#ff6797"/><stop offset="0.1133" stop-color="#ff3c7a"/><stop offset="0.1733" stop-color="#ff115d"/><stop offset="0.2533" stop-color="#ff0044"/><stop offset="0.3600" stop-color="#ff0030"/><stop offset="0.5067" stop-color="#ff0020"/><stop offset="0.6933" stop-color="#ff0010"/><stop offset="1.0000" stop-color="#ff0000"/></linearGradient><linearGradient id="w11" gradientUnits="userSpaceOnUse" x1="1407.8" y1="465.6" x2="2073.1" y2="811.9"><stop offset="0.0000" stop-color="#ffffff"/><stop offset="0.0040" stop-color="#fff2f7"/><stop offset="0.0093" stop-color="#ffe2ec"/><stop offset="0.0173" stop-color="#ffccde"/><stop offset="0.0293" stop-color="#ffb0cb"/><stop offset="0.0467" stop-color="#ff8eb5"/><stop offset="0.0733" stop-color="#ff659a"/><stop offset="0.1133" stop-color="#ff397e"/><stop offset="0.1733" stop-color="#ff0d61"/><stop offset="0.2533" stop-color="#ff0049"/><stop offset="0.3600" stop-color="#ff0035"/><stop offset="0.5067" stop-color="#ff0025"/><stop offset="0.6933" stop-color="#ff0012"/><stop offset="1.0000" stop-color="#ff0000"/></linearGradient><linearGradient id="w12" gradientUnits="userSpaceOnUse" x1="1407.8" y1="465.6" x2="2057.3" y2="840.6"><stop offset="0.0000" stop-color="#ffffff"/><stop offset="0.0040" stop-color="#fff2f7"/><stop offset="0.0093" stop-color="#ffe2ed"/><stop offset="0.0173" stop-color="#ffccdf"/><stop offset="0.0293" stop-color="#ffafcd"/><stop offset="0.0467" stop-color="#ff8db7"/><stop offset="0.0733" stop-color="#ff639d"/><stop offset="0.1133" stop-color="#ff3781"/><stop offset="0.1733" stop-color="#ff0a65"/><stop offset="0.2533" stop-color="#ff004e"/><stop offset="0.3600" stop-color="#ff003a"/><stop offset="0.5067" stop-color="#ff002a"/><stop offset="0.6933" stop-color="#ff0014"/><stop offset="1.0000" stop-color="#ff0000"/></linearGradient><linearGradient id="w13" gradientUnits="userSpaceOnUse" x1="1407.8" y1="465.6" x2="2040.4" y2="868.5"><stop offset="0.0000" stop-color="#ffffff"/><stop offset="0.0040" stop-color="#fff2f7"/><stop offset="0.0093" stop-color="#ffe2ed"/><stop offset="0.0173" stop-color="#ffcbe0"/><stop offset="0.0293" stop-color="#ffaecf"/><stop offset="0.0467" stop-color="#ff8cba"/><stop offset="0.0733" stop-color="#ff62a0"/><stop offset="0.1133" stop-color="#ff3485"/><stop offset="0.1733" stop-color="#ff076a"/><stop offset="0.2533" stop-color="#ff0053"/><stop offset="0.3600" stop-color="#ff0040"/><stop offset="0.5067" stop-color="#ff0030"/><stop offset="0.6933" stop-color="#ff0016"/><stop offset="1.0000" stop-color="#ff0000"/></linearGradient><linearGradient id="w14" gradientUnits="userSpaceOnUse" x1="1407.8" y1="465.6" x2="2022.2" y2="895.7"><stop offset="0.0000" stop-color="#ffffff"/><stop offset="0.0040" stop-color="#fff2f7"/><stop offset="0.0093" stop-color="#ffe1ee"/><stop offset="0.0173" stop-color="#ffcbe1"/><stop offset="0.0293" stop-color="#ffaed0"/><stop offset="0.0467" stop-color="#ff8bbc"/><stop offset="0.0733" stop-color="#ff60a4"/><stop offset="0.1133" stop-color="#ff3289"/><stop offset="0.1733" stop-color="#ff036f"/><stop offset="0.2533" stop-color="#ff0058"/><stop offset="0.3600" stop-color="#ff0045"/><stop offset="0.5067" stop-color="#ff0033"/><stop offset="0.6933" stop-color="#ff0018"/><stop offset="1.0000" stop-color="#ff0000"/></linearGradient><linearGradient id="w15" gradientUnits="userSpaceOnUse" x1="1407.8" y1="465.6" x2="2002.8" y2="922.1"><stop offset="0.0000" stop-color="#ffffff"/><stop offset="0.0040" stop-color="#fff2f8"/><stop offset="0.0093" stop-color="#ffe1ef"/><stop offset="0.0173" stop-color="#ffcbe2"/><stop offset="0.0293" stop-color="#ffadd2"/><stop offset="0.0467" stop-color="#ff8abf"/><stop offset="0.0733" stop-color="#ff5fa7"/><stop offset="0.1133" stop-color="#ff308d"/><stop offset="0.1733" stop-color="#ff0073"/><stop offset="0.2533" stop-color="#ff005d"/><stop offset="0.3600" stop-color="#ff004b"/><stop offset="0.5067" stop-color="#ff0035"/><stop offset="0.6933" stop-color="#ff001a"/><stop offset="1.0000" stop-color="#ff0000"/></linearGradient><linearGradient id="w16" gradientUnits="userSpaceOnUse" x1="1407.8" y1="465.6" x2="1982.3" y2="947.7"><stop offset="0.0000" stop-color="#ffffff"/><stop offset="0.0040" stop-color="#fff2f8"/><stop offset="0.0093" stop-color="#ffe1f0"/><stop offset="0.0173" stop-color="#ffcbe4"/><stop offset="0.0293" stop-color="#ffadd4"/><stop offset="0.0467" stop-color="#ff89c2"/><stop offset="0.0733" stop-color="#ff5eab"/><stop offset="0.1133" stop-color="#ff2e92"/><stop offset="0.1733" stop-color="#ff0079"/><stop offset="0.2533" stop-color="#ff0063"/><stop offset="0.3600" stop-color="#ff0051"/><stop offset="0.5067" stop-color="#ff0039"/><stop offset="0.6933" stop-color="#ff001d"/><stop offset="1.0000" stop-color="#ff0002"/></linearGradient><linearGradient id="w17" gradientUnits="userSpaceOnUse" x1="1407.8" y1="465.6" x2="1960.8" y2="972.3"><stop offset="0.0000" stop-color="#ffffff"/><stop offset="0.0040" stop-color="#fff2f8"/><stop offset="0.0093" stop-color="#ffe1f0"/><stop offset="0.0173" stop-color="#ffcbe5"/><stop offset="0.0293" stop-color="#ffadd6"/><stop offset="0.0467" stop-color="#ff89c4"/><stop offset="0.0733" stop-color="#ff5daf"/><stop offset="0.1133" stop-color="#ff2c97"/><stop offset="0.1733" stop-color="#ff007e"/><stop offset="0.2533" stop-color="#ff0069"/><stop offset="0.3600" stop-color="#ff0058"/><stop offset="0.5067" stop-color="#ff003c"/><stop offset="0.6933" stop-color="#ff0020"/><stop offset="1.0000" stop-color="#ff0005"/></linearGradient><linearGradient id="w18" gradientUnits="userSpaceOnUse" x1="1407.8" y1="465.6" x2="1938.1" y2="995.9"><stop offset="0.0000" stop-color="#ffffff"/><stop offset="0.0040" stop-color="#fff2f9"/><stop offset="0.0093" stop-color="#ffe1f1"/><stop offset="0.0173" stop-color="#ffcbe7"/><stop offset="0.0293" stop-color="#ffadd9"/><stop offset="0.0467" stop-color="#ff89c8"/><stop offset="0.0733" stop-color="#ff5cb3"/><stop offset="0.1133" stop-color="#ff2b9b"/><stop offset="0.1733" stop-color="#ff0084"/><stop offset="0.2533" stop-color="#ff006f"/><stop offset="0.3600" stop-color="#ff005e"/><stop offset="0.5067" stop-color="#ff0040"/><stop offset="0.6933" stop-color="#ff0024"/><stop offset="1.0000" stop-color="#ff0008"/></linearGradient><linearGradient id="w19" gradientUnits="userSpaceOnUse" x1="1407.8" y1="465.6" x2="1914.5" y2="1018.5"><stop offset="0.0000" stop-color="#ffffff"/><stop offset="0.0040" stop-color="#fff2f9"/><stop offset="0.0093" stop-color="#ffe2f2"/><stop offset="0.0173" stop-color="#ffcbe8"/><stop offset="0.0293" stop-color="#ffaddb"/><stop offset="0.0467" stop-color="#ff88cb"/><stop offset="0.0733" stop-color="#ff5bb7"/><stop offset="0.1133" stop-color="#ff29a1"/><stop offset="0.1733" stop-color="#ff008a"/><stop offset="0.2533" stop-color="#ff0076"/><stop offset="0.3600" stop-color="#ff0065"/><stop offset="0.5067" stop-color="#ff0045"/><stop offset="0.6933" stop-color="#ff0028"/><stop offset="1.0000" stop-color="#ff000b"/></linearGradient><linearGradient id="w20" gradientUnits="userSpaceOnUse" x1="1407.8" y1="465.6" x2="1889.9" y2="1040.1"><stop offset="0.0000" stop-color="#ffffff"/><stop offset="0.0040" stop-color="#fff2fa"/><stop offset="0.0093" stop-color="#ffe2f3"/><stop offset="0.0173" stop-color="#ffcbea"/><stop offset="0.0293" stop-color="#ffaddd"/><stop offset="0.0467" stop-color="#ff88ce"/><stop offset="0.0733" stop-color="#ff5bbb"/><stop offset="0.1133" stop-color="#ff28a6"/><stop offset="0.1733" stop-color="#ff0090"/><stop offset="0.2533" stop-color="#ff007d"/><stop offset="0.3600" stop-color="#ff006c"/><stop offset="0.5067" stop-color="#ff0049"/><stop offset="0.6933" stop-color="#ff002c"/><stop offset="1.0000" stop-color="#ff000e"/></linearGradient><linearGradient id="w21" gradientUnits="userSpaceOnUse" x1="1407.8" y1="465.6" x2="1864.4" y2="1060.6"><stop offset="0.0000" stop-color="#ffffff"/><stop offset="0.0040" stop-color="#fff2fa"/><stop offset="0.0093" stop-color="#ffe2f4"/><stop offset="0.0173" stop-color="#ffcceb"/><stop offset="0.0293" stop-color="#ffaee0"/><stop offset="0.0467" stop-color="#ff89d1"/><stop offset="0.0733" stop-color="#ff5bc0"/><stop offset="0.1133" stop-color="#ff27ac"/><stop offset="0.1733" stop-color="#ff0097"/><stop offset="0.2533" stop-color="#ff0084"/><stop offset="0.3600" stop-color="#ff0072"/><stop offset="0.5067" stop-color="#ff004f"/><stop offset="0.6933" stop-color="#ff0031"/><stop offset="1.0000" stop-color="#ff0013"/></linearGradient><linearGradient id="w22" gradientUnits="userSpaceOnUse" x1="1407.8" y1="465.6" x2="1838.0" y2="1079.9"><stop offset="0.0000" stop-color="#ffffff"/><stop offset="0.0040" stop-color="#fff2fa"/><stop offset="0.0093" stop-color="#ffe2f5"/><stop offset="0.0173" stop-color="#ffcced"/><stop offset="0.0293" stop-color="#ffaee2"/><stop offset="0.0467" stop-color="#ff89d5"/><stop offset="0.0733" stop-color="#ff5bc4"/><stop offset="0.1133" stop-color="#ff26b1"/><stop offset="0.1733" stop-color="#ff009e"/><stop offset="0.2533" stop-color="#ff008c"/><stop offset="0.3600" stop-color="#ff0078"/><stop offset="0.5067" stop-color="#ff0055"/><stop offset="0.6933" stop-color="#ff0036"/><stop offset="1.0000" stop-color="#ff0017"/></linearGradient><linearGradient id="w23" gradientUnits="userSpaceOnUse" x1="1407.8" y1="465.6" x2="1810.8" y2="1098.1"><stop offset="0.0000" stop-color="#ffffff"/><stop offset="0.0040" stop-color="#fff2fb"/><stop offset="0.0093" stop-color="#ffe3f6"/><stop offset="0.0173" stop-color="#ffcdee"/><stop offset="0.0293" stop-color="#ffafe5"/><stop offset="0.0467" stop-color="#ff8ad8"/><stop offset="0.0733" stop-color="#ff5bc9"/><stop offset="0.1133" stop-color="#ff26b7"/><stop offset="0.1733" stop-color="#ff00a5"/><stop offset="0.2533" stop-color="#ff0094"/><stop offset="0.3600" stop-color="#ff007f"/><stop offset="0.5067" stop-color="#ff005b"/><stop offset="0.6933" stop-color="#ff003c"/><stop offset="1.0000" stop-color="#ff001c"/></linearGradient><linearGradient id="w24" gradientUnits="userSpaceOnUse" x1="1407.8" y1="465.6" x2="1782.8" y2="1115.1"><stop offset="0.0000" stop-color="#ffffff"/><stop offset="0.0040" stop-color="#fff3fb"/><stop offset="0.0093" stop-color="#ffe3f7"/><stop offset="0.0173" stop-color="#ffcdf0"/><stop offset="0.0293" stop-color="#ffb0e7"/><stop offset="0.0467" stop-color="#ff8adc"/><stop offset="0.0733" stop-color="#ff5cce"/><stop offset="0.1133" stop-color="#ff25be"/><stop offset="0.1733" stop-color="#ff00ad"/><stop offset="0.2533" stop-color="#ff009d"/><stop offset="0.3600" stop-color="#ff0086"/><stop offset="0.5067" stop-color="#ff0063"/><stop offset="0.6933" stop-color="#ff0043"/><stop offset="1.0000" stop-color="#ff0022"/></linearGradient><linearGradient id="w25" gradientUnits="userSpaceOnUse" x1="1407.8" y1="465.6" x2="1754.1" y2="1130.8"><stop offset="0.0000" stop-color="#ffffff"/><stop offset="0.0040" stop-color="#fff3fc"/><stop offset="0.0093" stop-color="#ffe3f8"/><stop offset="0.0173" stop-color="#ffcef2"/><stop offset="0.0293" stop-color="#ffb0ea"/><stop offset="0.0467" stop-color="#ff8be0"/><stop offset="0.0733" stop-color="#ff5cd3"/><stop offset="0.1133" stop-color="#ff25c5"/><stop offset="0.1733" stop-color="#ff00b5"/><stop offset="0.2533" stop-color="#ff00a6"/><stop offset="0.3600" stop-color="#ff008f"/><stop offset="0.5067" stop-color="#ff006b"/><stop offset="0.6933" stop-color="#ff004b"/><stop offset="1.0000" stop-color="#ff0029"/></linearGradient><linearGradient id="w26" gradientUnits="userSpaceOnUse" x1="1407.8" y1="465.6" x2="1724.8" y2="1145.3"><stop offset="0.0000" stop-color="#ffffff"/><stop offset="0.0040" stop-color="#fff3fc"/><stop offset="0.0093" stop-color="#ffe4f9"/><stop offset="0.0173" stop-color="#ffcff4"/><stop offset="0.0293" stop-color="#ffb2ed"/><stop offset="0.0467" stop-color="#ff8de4"/><stop offset="0.0733" stop-color="#ff5dd9"/><stop offset="0.1133" stop-color="#ff26cc"/><stop offset="0.1733" stop-color="#ff00bd"/><stop offset="0.2533" stop-color="#ff00b0"/><stop offset="0.3600" stop-color="#ff0098"/><stop offset="0.5067" stop-color="#ff0074"/><stop offset="0.6933" stop-color="#ff0054"/><stop offset="1.0000" stop-color="#ff0031"/></linearGradient><linearGradient id="w27" gradientUnits="userSpaceOnUse" x1="1407.8" y1="465.6" x2="1694.8" y2="1158.5"><stop offset="0.0000" stop-color="#ffffff"/><stop offset="0.0040" stop-color="#fff3fd"/><stop offset="0.0093" stop-color="#ffe4fa"/><stop offset="0.0173" stop-color="#ffd0f5"/><stop offset="0.0293" stop-color="#ffb3f0"/><stop offset="0.0467" stop-color="#ff8ee8"/><stop offset="0.0733" stop-color="#ff5edf"/><stop offset="0.1133" stop-color="#ff26d3"/><stop offset="0.1733" stop-color="#ff00c7"/><stop offset="0.2533" stop-color="#ff00bb"/><stop offset="0.3600" stop-color="#ff00a2"/><stop offset="0.5067" stop-color="#ff007e"/><stop offset="0.6933" stop-color="#ff005e"/><stop offset="1.0000" stop-color="#ff003a"/></linearGradient><linearGradient id="w28" gradientUnits="userSpaceOnUse" x1="1407.8" y1="465.6" x2="1664.3" y2="1170.3"><stop offset="0.0000" stop-color="#ffffff"/><stop offset="0.0040" stop-color="#fff4fd"/><stop offset="0.0093" stop-color="#ffe5fb"/><stop offset="0.0173" stop-color="#ffd0f7"/><stop offset="0.0293" stop-color="#ffb4f2"/><stop offset="0.0467" stop-color="#ff90ec"/><stop offset="0.0733" stop-color="#ff60e4"/><stop offset="0.1133" stop-color="#ff27db"/><stop offset="0.1733" stop-color="#ff00d0"/><stop offset="0.2533" stop-color="#ff00c6"/><stop offset="0.3600" stop-color="#ff00ad"/><stop offset="0.5067" stop-color="#ff008a"/><stop offset="0.6933" stop-color="#ff0069"/><stop offset="1.0000" stop-color="#ff0045"/></linearGradient><linearGradient id="w29" gradientUnits="userSpaceOnUse" x1="1407.8" y1="465.6" x2="1633.3" y2="1180.9"><stop offset="0.0000" stop-color="#ffffff"/><stop offset="0.0040" stop-color="#fff4fe"/><stop offset="0.0093" stop-color="#ffe6fc"/><stop offset="0.0173" stop-color="#ffd2f9"/><stop offset="0.0293" stop-color="#ffb6f5"/><stop offset="0.0467" stop-color="#ff91f1"/><stop offset="0.0733" stop-color="#ff62eb"/><stop offset="0.1133" stop-color="#ff28e3"/><stop offset="0.1733" stop-color="#ff00db"/><stop offset="0.2533" stop-color="#ff00d3"/><stop offset="0.3600" stop-color="#ff00ba"/><stop offset="0.5067" stop-color="#ff0098"/><stop offset="0.6933" stop-color="#ff0077"/><stop offset="1.0000" stop-color="#ff0051"/></linearGradient><linearGradient id="w30" gradientUnits="userSpaceOnUse" x1="1407.8" y1="465.6" x2="1601.9" y2="1190.0"><stop offset="0.0000" stop-color="#ffffff"/><stop offset="0.0040" stop-color="#fff4fe"/><stop offset="0.0093" stop-color="#ffe6fd"/><stop offset="0.0173" stop-color="#ffd3fb"/><stop offset="0.0293" stop-color="#ffb7f9"/><stop offset="0.0467" stop-color="#ff93f5"/><stop offset="0.0733" stop-color="#ff64f1"/><stop offset="0.1133" stop-color="#ff29ec"/><stop offset="0.1733" stop-color="#ff00e6"/><stop offset="0.2533" stop-color="#ff00e0"/><stop offset="0.3600" stop-color="#ff00c8"/><stop offset="0.5067" stop-color="#ff00a7"/><stop offset="0.6933" stop-color="#ff0087"/><stop offset="1.0000" stop-color="#ff0060"/></linearGradient><linearGradient id="w31" gradientUnits="userSpaceOnUse" x1="1407.8" y1="465.6" x2="1570.1" y2="1197.8"><stop offset="0.0000" stop-color="#ffffff"/><stop offset="0.0040" stop-color="#fff5ff"/><stop offset="0.0093" stop-color="#ffe7fe"/><stop offset="0.0173" stop-color="#ffd4fd"/><stop offset="0.0293" stop-color="#ffb9fc"/><stop offset="0.0467" stop-color="#ff96fa"/><stop offset="0.0733" stop-color="#ff66f8"/><stop offset="0.1133" stop-color="#ff2bf5"/><stop offset="0.1733" stop-color="#ff00f2"/><stop offset="0.2533" stop-color="#ff00ee"/><stop offset="0.3600" stop-color="#ff00d8"/><stop offset="0.5067" stop-color="#ff00b9"/><stop offset="0.6933" stop-color="#ff0099"/><stop offset="1.0000" stop-color="#ff0073"/></linearGradient><linearGradient id="w32" gradientUnits="userSpaceOnUse" x1="1407.8" y1="465.6" x2="1538.1" y2="1204.2"><stop offset="0.0000" stop-color="#ffffff"/><stop offset="0.0040" stop-color="#fff5ff"/><stop offset="0.0093" stop-color="#ffe8ff"/><stop offset="0.0173" stop-color="#ffd5ff"/><stop offset="0.0293" stop-color="#ffbbff"/><stop offset="0.0467" stop-color="#ff98ff"/><stop offset="0.0733" stop-color="#ff69ff"/><stop offset="0.1133" stop-color="#ff2dfe"/><stop offset="0.1733" stop-color="#ff00fe"/><stop offset="0.2533" stop-color="#ff00fe"/><stop offset="0.3600" stop-color="#ff00eb"/><stop offset="0.5067" stop-color="#ff00ce"/><stop offset="0.6933" stop-color="#ff00b0"/><stop offset="1.0000" stop-color="#ff008a"/></linearGradient><linearGradient id="w33" gradientUnits="userSpaceOnUse" x1="1407.8" y1="465.6" x2="1505.7" y2="1209.2"><stop offset="0.0000" stop-color="#ffffff"/><stop offset="0.0040" stop-color="#fff5ff"/><stop offset="0.0093" stop-color="#fee8ff"/><stop offset="0.0173" stop-color="#fdd5ff"/><stop offset="0.0293" stop-color="#fcbbff"/><stop offset="0.0467" stop-color="#fa98ff"/><stop offset="0.0733" stop-color="#f869ff"/><stop offset="0.1133" stop-color="#f62eff"/><stop offset="0.1733" stop-color="#f300ff"/><stop offset="0.2533" stop-color="#f000ff"/><stop offset="0.3600" stop-color="#ff00ff"/><stop offset="0.5067" stop-color="#ff00e6"/><stop offset="0.6933" stop-color="#ff00cb"/><stop offset="1.0000" stop-color="#ff00a8"/></linearGradient><linearGradient id="w34" gradientUnits="userSpaceOnUse" x1="1407.8" y1="465.6" x2="1473.2" y2="1212.7"><stop offset="0.0000" stop-color="#ffffff"/><stop offset="0.0040" stop-color="#fef5ff"/><stop offset="0.0093" stop-color="#fde8ff"/><stop offset="0.0173" stop-color="#fbd5ff"/><stop offset="0.0293" stop-color="#f9bbff"/><stop offset="0.0467" stop-color="#f698ff"/><stop offset="0.0733" stop-color="#f169ff"/><stop offset="0.1133" stop-color="#ec2fff"/><stop offset="0.1733" stop-color="#e600ff"/><stop offset="0.2533" stop-color="#e000ff"/><stop offset="0.3600" stop-color="#e900ff"/><stop offset="0.5067" stop-color="#fb00ff"/><stop offset="0.6933" stop-color="#ff00ed"/><stop offset="1.0000" stop-color="#ff00cf"/></linearGradient><linearGradient id="w35" gradientUnits="userSpaceOnUse" x1="1407.8" y1="465.6" x2="1440.5" y2="1214.9"><stop offset="0.0000" stop-color="#ffffff"/><stop offset="0.0040" stop-color="#fef5ff"/><stop offset="0.0093" stop-color="#fce8ff"/><stop offset="0.0173" stop-color="#f9d5ff"/><stop offset="0.0293" stop-color="#f6bbff"/><stop offset="0.0467" stop-color="#f198ff"/><stop offset="0.0733" stop-color="#eb6aff"/><stop offset="0.1133" stop-color="#e330ff"/><stop offset="0.1733" stop-color="#da00ff"/><stop offset="0.2533" stop-color="#d100ff"/><stop offset="0.3600" stop-color="#d400ff"/><stop offset="0.5067" stop-color="#dc00ff"/><stop offset="0.6933" stop-color="#e700ff"/><stop offset="1.0000" stop-color="#fa00ff"/></linearGradient><linearGradient id="w36" gradientUnits="userSpaceOnUse" x1="1407.8" y1="465.6" x2="1407.8" y2="1215.6"><stop offset="0.0000" stop-color="#ffffff"/><stop offset="0.0040" stop-color="#fdf5ff"/><stop offset="0.0093" stop-color="#fbe8ff"/><stop offset="0.0173" stop-color="#f7d5ff"/><stop offset="0.0293" stop-color="#f3bbff"/><stop offset="0.0467" stop-color="#ec98ff"/><stop offset="0.0733" stop-color="#e46bff"/><stop offset="0.1133" stop-color="#da32ff"/><stop offset="0.1733" stop-color="#ce00ff"/><stop offset="0.2533" stop-color="#c200ff"/><stop offset="0.3600" stop-color="#c000ff"/><stop offset="0.5067" stop-color="#c000ff"/><stop offset="0.6933" stop-color="#c000ff"/><stop offset="1.0000" stop-color="#c000ff"/></linearGradient><linearGradient id="w37" gradientUnits="userSpaceOnUse" x1="1407.8" y1="465.6" x2="1375.1" y2="1214.9"><stop offset="0.0000" stop-color="#ffffff"/><stop offset="0.0040" stop-color="#fdf5ff"/><stop offset="0.0093" stop-color="#fae8ff"/><stop offset="0.0173" stop-color="#f5d5ff"/><stop offset="0.0293" stop-color="#f0bbff"/><stop offset="0.0467" stop-color="#e899ff"/><stop offset="0.0733" stop-color="#dd6bff"/><stop offset="0.1133" stop-color="#d134ff"/><stop offset="0.1733" stop-color="#c200ff"/><stop offset="0.2533" stop-color="#b400ff"/><stop offset="0.3600" stop-color="#ad00ff"/><stop offset="0.5067" stop-color="#a500ff"/><stop offset="0.6933" stop-color="#9b00ff"/><stop offset="1.0000" stop-color="#8c00ff"/></linearGradient><linearGradient id="w38" gradientUnits="userSpaceOnUse" x1="1407.8" y1="465.6" x2="1342.4" y2="1212.7"><stop offset="0.0000" stop-color="#ffffff"/><stop offset="0.0040" stop-color="#fcf5ff"/><stop offset="0.0093" stop-color="#f9e8ff"/><stop offset="0.0173" stop-color="#f4d5ff"/><stop offset="0.0293" stop-color="#ecbbff"/><stop offset="0.0467" stop-color="#e399ff"/><stop offset="0.0733" stop-color="#d76dff"/><stop offset="0.1133" stop-color="#c836ff"/><stop offset="0.1733" stop-color="#b700ff"/><stop offset="0.2533" stop-color="#a600ff"/><stop offset="0.3600" stop-color="#9a00ff"/><stop offset="0.5067" stop-color="#8b00ff"/><stop offset="0.6933" stop-color="#7900ff"/><stop offset="1.0000" stop-color="#5d00ff"/></linearGradient><linearGradient id="w39" gradientUnits="userSpaceOnUse" x1="1407.8" y1="465.6" x2="1309.9" y2="1209.2"><stop offset="0.0000" stop-color="#ffffff"/><stop offset="0.0040" stop-color="#fcf5ff"/><stop offset="0.0093" stop-color="#f8e8ff"/><stop offset="0.0173" stop-color="#f2d5ff"/><stop offset="0.0293" stop-color="#eabcff"/><stop offset="0.0467" stop-color="#df9aff"/><stop offset="0.0733" stop-color="#d16eff"/><stop offset="0.1133" stop-color="#bf38ff"/><stop offset="0.1733" stop-color="#ac00ff"/><stop offset="0.2533" stop-color="#9900ff"/><stop offset="0.3600" stop-color="#8800ff"/><stop offset="0.5067" stop-color="#7300ff"/><stop offset="0.6933" stop-color="#5a00ff"/><stop offset="1.0000" stop-color="#3300ff"/></linearGradient><linearGradient id="w40" gradientUnits="userSpaceOnUse" x1="1407.8" y1="465.6" x2="1277.6" y2="1204.2"><stop offset="0.0000" stop-color="#ffffff"/><stop offset="0.0040" stop-color="#fbf5ff"/><stop offset="0.0093" stop-color="#f7e8ff"/><stop offset="0.0173" stop-color="#f0d6ff"/><stop offset="0.0293" stop-color="#e7bcff"/><stop offset="0.0467" stop-color="#db9bff"/><stop offset="0.0733" stop-color="#cb6fff"/><stop offset="0.1133" stop-color="#b73aff"/><stop offset="0.1733" stop-color="#a100ff"/><stop offset="0.2533" stop-color="#8c00ff"/><stop offset="0.3600" stop-color="#7700ff"/><stop offset="0.5067" stop-color="#5d00ff"/><stop offset="0.6933" stop-color="#3d00ff"/><stop offset="1.0000" stop-color="#0d00ff"/></linearGradient><linearGradient id="w41" gradientUnits="userSpaceOnUse" x1="1407.8" y1="465.6" x2="1245.5" y2="1197.8"><stop offset="0.0000" stop-color="#ffffff"/><stop offset="0.0040" stop-color="#fbf5ff"/><stop offset="0.0093" stop-color="#f6e8ff"/><stop offset="0.0173" stop-color="#eed6ff"/><stop offset="0.0293" stop-color="#e4bdff"/><stop offset="0.0467" stop-color="#d69cff"/><stop offset="0.0733" stop-color="#c571ff"/><stop offset="0.1133" stop-color="#af3dff"/><stop offset="0.1733" stop-color="#9702ff"/><stop offset="0.2533" stop-color="#7f00ff"/><stop offset="0.3600" stop-color="#6700ff"/><stop offset="0.5067" stop-color="#4700ff"/><stop offset="0.6933" stop-color="#2200ff"/><stop offset="1.0000" stop-color="#0000ff"/></linearGradient><linearGradient id="w42" gradientUnits="userSpaceOnUse" x1="1407.8" y1="465.6" x2="1213.7" y2="1190.0"><stop offset="0.0000" stop-color="#ffffff"/><stop offset="0.0040" stop-color="#faf5ff"/><stop offset="0.0093" stop-color="#f5e8ff"/><stop offset="0.0173" stop-color="#ecd7ff"/><stop offset="0.0293" stop-color="#e1beff"/><stop offset="0.0467" stop-color="#d29dff"/><stop offset="0.0733" stop-color="#bf73ff"/><stop offset="0.1133" stop-color="#a740ff"/><stop offset="0.1733" stop-color="#8c06ff"/><stop offset="0.2533" stop-color="#7300ff"/><stop offset="0.3600" stop-color="#5700ff"/><stop offset="0.5067" stop-color="#3300ff"/><stop offset="0.6933" stop-color="#0800ff"/><stop offset="1.0000" stop-color="#0000ff"/></linearGradient><linearGradient id="w43" gradientUnits="userSpaceOnUse" x1="1407.8" y1="465.6" x2="1182.3" y2="1180.9"><stop offset="0.0000" stop-color="#ffffff"/><stop offset="0.0040" stop-color="#faf5ff"/><stop offset="0.0093" stop-color="#f4e9ff"/><stop offset="0.0173" stop-color="#ebd7ff"/><stop offset="0.0293" stop-color="#debfff"/><stop offset="0.0467" stop-color="#ce9fff"/><stop offset="0.0733" stop-color="#b975ff"/><stop offset="0.1133" stop-color="#9f43ff"/><stop offset="0.1733" stop-color="#830aff"/><stop offset="0.2533" stop-color="#6700ff"/><stop offset="0.3600" stop-color="#4800ff"/><stop offset="0.5067" stop-color="#2000ff"/><stop offset="0.6933" stop-color="#0000ff"/><stop offset="1.0000" stop-color="#0000ff"/></linearGradient><linearGradient id="w44" gradientUnits="userSpaceOnUse" x1="1407.8" y1="465.6" x2="1151.3" y2="1170.3"><stop offset="0.0000" stop-color="#ffffff"/><stop offset="0.0040" stop-color="#faf5ff"/><stop offset="0.0093" stop-color="#f3e9ff"/><stop offset="0.0173" stop-color="#e9d8ff"/><stop offset="0.0293" stop-color="#dbbfff"/><stop offset="0.0467" stop-color="#caa0ff"/><stop offset="0.0733" stop-color="#b378ff"/><stop offset="0.1133" stop-color="#9846ff"/><stop offset="0.1733" stop-color="#790fff"/><stop offset="0.2533" stop-color="#5c00ff"/><stop offset="0.3600" stop-color="#3a00ff"/><stop offset="0.5067" stop-color="#0d00ff"/><stop offset="0.6933" stop-color="#0000ff"/><stop offset="1.0000" stop-color="#0007ff"/></linearGradient><linearGradient id="w45" gradientUnits="userSpaceOnUse" x1="1407.8" y1="465.6" x2="1120.8" y2="1158.5"><stop offset="0.0000" stop-color="#ffffff"/><stop offset="0.0040" stop-color="#f9f6ff"/><stop offset="0.0093" stop-color="#f2e9ff"/><stop offset="0.0173" stop-color="#e7d8ff"/><stop offset="0.0293" stop-color="#d9c1ff"/><stop offset="0.0467" stop-color="#c6a2ff"/><stop offset="0.0733" stop-color="#ae7aff"/><stop offset="0.1133" stop-color="#904aff"/><stop offset="0.1733" stop-color="#6f14ff"/><stop offset="0.2533" stop-color="#5000ff"/><stop offset="0.3600" stop-color="#2d00ff"/><stop offset="0.5067" stop-color="#0000ff"/><stop offset="0.6933" stop-color="#0000ff"/><stop offset="1.0000" stop-color="#000fff"/></linearGradient><linearGradient id="w46" gradientUnits="userSpaceOnUse" x1="1407.8" y1="465.6" x2="1090.9" y2="1145.3"><stop offset="0.0000" stop-color="#ffffff"/><stop offset="0.0040" stop-color="#f9f6ff"/><stop offset="0.0093" stop-color="#f1eaff"/><stop offset="0.0173" stop-color="#e6d9ff"/><stop offset="0.0293" stop-color="#d6c2ff"/><stop offset="0.0467" stop-color="#c2a4ff"/><stop offset="0.0733" stop-color="#a87dff"/><stop offset="0.1133" stop-color="#894eff"/><stop offset="0.1733" stop-color="#6619ff"/><stop offset="0.2533" stop-color="#4500ff"/><stop offset="0.3600" stop-color="#2000ff"/><stop offset="0.5067" stop-color="#0000ff"/><stop offset="0.6933" stop-color="#0000ff"/><stop offset="1.0000" stop-color="#0016ff"/></linearGradient><linearGradient id="w47" gradientUnits="userSpaceOnUse" x1="1407.8" y1="465.6" x2="1061.5" y2="1130.8"><stop offset="0.0000" stop-color="#ffffff"/><stop offset="0.0040" stop-color="#f8f6ff"/><stop offset="0.0093" stop-color="#f0eaff"/><stop offset="0.0173" stop-color="#e4daff"/><stop offset="0.0293" stop-color="#d4c3ff"/><stop offset="0.0467" stop-color="#bfa6ff"/><stop offset="0.0733" stop-color="#a380ff"/><stop offset="0.1133" stop-color="#8252ff"/><stop offset="0.1733" stop-color="#5d1eff"/><stop offset="0.2533" stop-color="#3a00ff"/><stop offset="0.3600" stop-color="#1300ff"/><stop offset="0.5067" stop-color="#0000ff"/><stop offset="0.6933" stop-color="#0003ff"/><stop offset="1.0000" stop-color="#001dff"/></linearGradient><linearGradient id="w48" gradientUnits="userSpaceOnUse" x1="1407.8" y1="465.6" x2="1032.8" y2="1115.1"><stop offset="0.0000" stop-color="#ffffff"/><stop offset="0.0040" stop-color="#f8f6ff"/><stop offset="0.0093" stop-color="#efebff"/><stop offset="0.0173" stop-color="#e3dbff"/><stop offset="0.0293" stop-color="#d1c4ff"/><stop offset="0.0467" stop-color="#bba8ff"/><stop offset="0.0733" stop-color="#9e83ff"/><stop offset="0.1133" stop-color="#7b56ff"/><stop offset="0.1733" stop-color="#5424ff"/><stop offset="0.2533" stop-color="#3000ff"/><stop offset="0.3600" stop-color="#0800ff"/><stop offset="0.5067" stop-color="#0000ff"/><stop offset="0.6933" stop-color="#0008ff"/><stop offset="1.0000" stop-color="#0023ff"/></linearGradient><linearGradient id="w49" gradientUnits="userSpaceOnUse" x1="1407.8" y1="465.6" x2="1004.8" y2="1098.1"><stop offset="0.0000" stop-color="#ffffff"/><stop offset="0.0040" stop-color="#f8f6ff"/><stop offset="0.0093" stop-color="#eeebff"/><stop offset="0.0173" stop-color="#e1dcff"/><stop offset="0.0293" stop-color="#cfc6ff"/><stop offset="0.0467" stop-color="#b8aaff"/><stop offset="0.0733" stop-color="#9986ff"/><stop offset="0.1133" stop-color="#755aff"/><stop offset="0.1733" stop-color="#4c29ff"/><stop offset="0.2533" stop-color="#2600ff"/><stop offset="0.3600" stop-color="#0000ff"/><stop offset="0.5067" stop-color="#0000ff"/><stop offset="0.6933" stop-color="#000dff"/><stop offset="1.0000" stop-color="#0029ff"/></linearGradient><linearGradient id="w50" gradientUnits="userSpaceOnUse" x1="1407.8" y1="465.6" x2="977.6" y2="1079.9"><stop offset="0.0000" stop-color="#ffffff"/><stop offset="0.0040" stop-color="#f7f7ff"/><stop offset="0.0093" stop-color="#eeecff"/><stop offset="0.0173" stop-color="#e0ddff"/><stop offset="0.0293" stop-color="#cdc7ff"/><stop offset="0.0467" stop-color="#b4acff"/><stop offset="0.0733" stop-color="#9589ff"/><stop offset="0.1133" stop-color="#6e5fff"/><stop offset="0.1733" stop-color="#432fff"/><stop offset="0.2533" stop-color="#1b03ff"/><stop offset="0.3600" stop-color="#0000ff"/><stop offset="0.5067" stop-color="#0000ff"/><stop offset="0.6933" stop-color="#0012ff"/><stop offset="1.0000" stop-color="#002eff"/></linearGradient><linearGradient id="w51" gradientUnits="userSpaceOnUse" x1="1407.8" y1="465.6" x2="951.2" y2="1060.6"><stop offset="0.0000" stop-color="#ffffff"/><stop offset="0.0040" stop-color="#f7f7ff"/><stop offset="0.0093" stop-color="#edecff"/><stop offset="0.0173" stop-color="#dfdeff"/><stop offset="0.0293" stop-color="#cbc9ff"/><stop offset="0.0467" stop-color="#b1afff"/><stop offset="0.0733" stop-color="#908dff"/><stop offset="0.1133" stop-color="#6863ff"/><stop offset="0.1733" stop-color="#3b35ff"/><stop offset="0.2533" stop-color="#110aff"/><stop offset="0.3600" stop-color="#0000ff"/><stop offset="0.5067" stop-color="#0000ff"/><stop offset="0.6933" stop-color="#0016ff"/><stop offset="1.0000" stop-color="#0033ff"/></linearGradient><linearGradient id="w52" gradientUnits="userSpaceOnUse" x1="1407.8" y1="465.6" x2="925.7" y2="1040.1"><stop offset="0.0000" stop-color="#ffffff"/><stop offset="0.0040" stop-color="#f7f7ff"/><stop offset="0.0093" stop-color="#ecedff"/><stop offset="0.0173" stop-color="#dddfff"/><stop offset="0.0293" stop-color="#c9cbff"/><stop offset="0.0467" stop-color="#aeb2ff"/><stop offset="0.0733" stop-color="#8b90ff"/><stop offset="0.1133" stop-color="#6268ff"/><stop offset="0.1733" stop-color="#333cff"/><stop offset="0.2533" stop-color="#0812ff"/><stop offset="0.3600" stop-color="#0000ff"/><stop offset="0.5067" stop-color="#0004ff"/><stop offset="0.6933" stop-color="#001aff"/><stop offset="1.0000" stop-color="#0037ff"/></linearGradient><linearGradient id="w53" gradientUnits="userSpaceOnUse" x1="1407.8" y1="465.6" x2="901.1" y2="1018.5"><stop offset="0.0000" stop-color="#ffffff"/><stop offset="0.0040" stop-color="#f6f7ff"/><stop offset="0.0093" stop-color="#eceeff"/><stop offset="0.0173" stop-color="#dce0ff"/><stop offset="0.0293" stop-color="#c7cdff"/><stop offset="0.0467" stop-color="#abb4ff"/><stop offset="0.0733" stop-color="#8794ff"/><stop offset="0.1133" stop-color="#5c6eff"/><stop offset="0.1733" stop-color="#2c42ff"/><stop offset="0.2533" stop-color="#001aff"/><stop offset="0.3600" stop-color="#0000ff"/><stop offset="0.5067" stop-color="#0007ff"/><stop offset="0.6933" stop-color="#001eff"/><stop offset="1.0000" stop-color="#003bff"/></linearGradient><linearGradient id="w54" gradientUnits="userSpaceOnUse" x1="1407.8" y1="465.6" x2="877.5" y2="995.9"><stop offset="0.0000" stop-color="#ffffff"/><stop offset="0.0040" stop-color="#f6f8ff"/><stop offset="0.0093" stop-color="#ebeeff"/><stop offset="0.0173" stop-color="#dbe1ff"/><stop offset="0.0293" stop-color="#c5cfff"/><stop offset="0.0467" stop-color="#a8b7ff"/><stop offset="0.0733" stop-color="#8398ff"/><stop offset="0.1133" stop-color="#5673ff"/><stop offset="0.1733" stop-color="#2449ff"/><stop offset="0.2533" stop-color="#0022ff"/><stop offset="0.3600" stop-color="#0000ff"/><stop offset="0.5067" stop-color="#000bff"/><stop offset="0.6933" stop-color="#0022ff"/><stop offset="1.0000" stop-color="#003fff"/></linearGradient><linearGradient id="w55" gradientUnits="userSpaceOnUse" x1="1407.8" y1="465.6" x2="854.9" y2="972.3"><stop offset="0.0000" stop-color="#ffffff"/><stop offset="0.0040" stop-color="#f6f8ff"/><stop offset="0.0093" stop-color="#eaefff"/><stop offset="0.0173" stop-color="#dae2ff"/><stop offset="0.0293" stop-color="#c3d1ff"/><stop offset="0.0467" stop-color="#a6baff"/><stop offset="0.0733" stop-color="#7f9cff"/><stop offset="0.1133" stop-color="#5179ff"/><stop offset="0.1733" stop-color="#1c50ff"/><stop offset="0.2533" stop-color="#002bff"/><stop offset="0.3600" stop-color="#0008ff"/><stop offset="0.5067" stop-color="#000dff"/><stop offset="0.6933" stop-color="#0025ff"/><stop offset="1.0000" stop-color="#0042ff"/></linearGradient><linearGradient id="w56" gradientUnits="userSpaceOnUse" x1="1407.8" y1="465.6" x2="833.3" y2="947.7"><stop offset="0.0000" stop-color="#ffffff"/><stop offset="0.0040" stop-color="#f6f8ff"/><stop offset="0.0093" stop-color="#eaf0ff"/><stop offset="0.0173" stop-color="#d9e4ff"/><stop offset="0.0293" stop-color="#c1d3ff"/><stop offset="0.0467" stop-color="#a3bdff"/><stop offset="0.0733" stop-color="#7ba1ff"/><stop offset="0.1133" stop-color="#4b7eff"/><stop offset="0.1733" stop-color="#1558ff"/><stop offset="0.2533" stop-color="#0033ff"/><stop offset="0.3600" stop-color="#0012ff"/><stop offset="0.5067" stop-color="#0010ff"/><stop offset="0.6933" stop-color="#0028ff"/><stop offset="1.0000" stop-color="#0046ff"/></linearGradient><linearGradient id="w57" gradientUnits="userSpaceOnUse" x1="1407.8" y1="465.6" x2="812.8" y2="922.1"><stop offset="0.0000" stop-color="#ffffff"/><stop offset="0.0040" stop-color="#f5f9ff"/><stop offset="0.0093" stop-color="#e9f1ff"/><stop offset="0.0173" stop-color="#d8e5ff"/><stop offset="0.0293" stop-color="#c0d5ff"/><stop offset="0.0467" stop-color="#a1c0ff"/><stop offset="0.0733" stop-color="#78a5ff"/><stop offset="0.1133" stop-color="#4684ff"/><stop offset="0.1733" stop-color="#0e5fff"/><stop offset="0.2533" stop-color="#003cff"/><stop offset="0.3600" stop-color="#001cff"/><stop offset="0.5067" stop-color="#0013ff"/><stop offset="0.6933" stop-color="#002bff"/><stop offset="1.0000" stop-color="#0048ff"/></linearGradient><linearGradient id="w58" gradientUnits="userSpaceOnUse" x1="1407.8" y1="465.6" x2="793.4" y2="895.7"><stop offset="0.0000" stop-color="#ffffff"/><stop offset="0.0040" stop-color="#f5f9ff"/><stop offset="0.0093" stop-color="#e9f1ff"/><stop offset="0.0173" stop-color="#d7e6ff"/><stop offset="0.0293" stop-color="#bed7ff"/><stop offset="0.0467" stop-color="#9ec4ff"/><stop offset="0.0733" stop-color="#74aaff"/><stop offset="0.1133" stop-color="#418bff"/><stop offset="0.1733" stop-color="#0767ff"/><stop offset="0.2533" stop-color="#0046ff"/><stop offset="0.3600" stop-color="#0027ff"/><stop offset="0.5067" stop-color="#0015ff"/><stop offset="0.6933" stop-color="#002dff"/><stop offset="1.0000" stop-color="#004bff"/></linearGradient><linearGradient id="w59" gradientUnits="userSpaceOnUse" x1="1407.8" y1="465.6" x2="775.3" y2="868.5"><stop offset="0.0000" stop-color="#ffffff"/><stop offset="0.0040" stop-color="#f5f9ff"/><stop offset="0.0093" stop-color="#e8f2ff"/><stop offset="0.0173" stop-color="#d6e8ff"/><stop offset="0.0293" stop-color="#bddaff"/><stop offset="0.0467" stop-color="#9cc7ff"/><stop offset="0.0733" stop-color="#71afff"/><stop offset="0.1133" stop-color="#3c91ff"/><stop offset="0.1733" stop-color="#006fff"/><stop offset="0.2533" stop-color="#004fff"/><stop offset="0.3600" stop-color="#0032ff"/><stop offset="0.5067" stop-color="#0017ff"/><stop offset="0.6933" stop-color="#0030ff"/><stop offset="1.0000" stop-color="#004dff"/></linearGradient><linearGradient id="w60" gradientUnits="userSpaceOnUse" x1="1407.8" y1="465.6" x2="758.3" y2="840.6"><stop offset="0.0000" stop-color="#ffffff"/><stop offset="0.0040" stop-color="#f5faff"/><stop offset="0.0093" stop-color="#e8f3ff"/><stop offset="0.0173" stop-color="#d5e9ff"/><stop offset="0.0293" stop-color="#bbdcff"/><stop offset="0.0467" stop-color="#9acbff"/><stop offset="0.0733" stop-color="#6eb4ff"/><stop offset="0.1133" stop-color="#3898ff"/><stop offset="0.1733" stop-color="#0078ff"/><stop offset="0.2533" stop-color="#0059ff"/><stop offset="0.3600" stop-color="#003dff"/><stop offset="0.5067" stop-color="#0024ff"/><stop offset="0.6933" stop-color="#0032ff"/><stop offset="1.0000" stop-color="#0050ff"/></linearGradient><linearGradient id="w61" gradientUnits="userSpaceOnUse" x1="1407.8" y1="465.6" x2="742.6" y2="811.9"><stop offset="0.0000" stop-color="#ffffff"/><stop offset="0.0040" stop-color="#f5faff"/><stop offset="0.0093" stop-color="#e7f4ff"/><stop offset="0.0173" stop-color="#d5ebff"/><stop offset="0.0293" stop-color="#badfff"/><stop offset="0.0467" stop-color="#98ceff"/><stop offset="0.0733" stop-color="#6bb9ff"/><stop offset="0.1133" stop-color="#339fff"/><stop offset="0.1733" stop-color="#0081ff"/><stop offset="0.2533" stop-color="#0064ff"/><stop offset="0.3600" stop-color="#0049ff"/><stop offset="0.5067" stop-color="#0031ff"/><stop offset="0.6933" stop-color="#0034ff"/><stop offset="1.0000" stop-color="#0052ff"/></linearGradient><linearGradient id="w62" gradientUnits="userSpaceOnUse" x1="1407.8" y1="465.6" x2="728.1" y2="782.5"><stop offset="0.0000" stop-color="#ffffff"/><stop offset="0.0040" stop-color="#f5fbff"/><stop offset="0.0093" stop-color="#e7f5ff"/><stop offset="0.0173" stop-color="#d4edff"/><stop offset="0.0293" stop-color="#b9e1ff"/><stop offset="0.0467" stop-color="#96d2ff"/><stop offset="0.0733" stop-color="#68beff"/><stop offset="0.1133" stop-color="#2fa6ff"/><stop offset="0.1733" stop-color="#008aff"/><stop offset="0.2533" stop-color="#006fff"/><stop offset="0.3600" stop-color="#0055ff"/><stop offset="0.5067" stop-color="#003eff"/><stop offset="0.6933" stop-color="#0035ff"/><stop offset="1.0000" stop-color="#0053ff"/></linearGradient><linearGradient id="w63" gradientUnits="userSpaceOnUse" x1="1407.8" y1="465.6" x2="714.9" y2="752.6"><stop offset="0.0000" stop-color="#ffffff"/><stop offset="0.0040" stop-color="#f4fbff"/><stop offset="0.0093" stop-color="#e7f6ff"/><stop offset="0.0173" stop-color="#d3eeff"/><stop offset="0.0293" stop-color="#b8e4ff"/><stop offset="0.0467" stop-color="#95d6ff"/><stop offset="0.0733" stop-color="#65c4ff"/><stop offset="0.1133" stop-color="#2badff"/><stop offset="0.1733" stop-color="#0093ff"/><stop offset="0.2533" stop-color="#007aff"/><stop offset="0.3600" stop-color="#0062ff"/><stop offset="0.5067" stop-color="#004cff"/><stop offset="0.6933" stop-color="#003aff"/><stop offset="1.0000" stop-color="#0055ff"/></linearGradient><linearGradient id="w64" gradientUnits="userSpaceOnUse" x1="1407.8" y1="465.6" x2="703.0" y2="722.1"><stop offset="0.0000" stop-color="#ffffff"/><stop offset="0.0040" stop-color="#f4fbff"/><stop offset="0.0093" stop-color="#e7f7ff"/><stop offset="0.0173" stop-color="#d3f0ff"/><stop offset="0.0293" stop-color="#b7e6ff"/><stop offset="0.0467" stop-color="#93daff"/><stop offset="0.0733" stop-color="#63c9ff"/><stop offset="0.1133" stop-color="#27b5ff"/><stop offset="0.1733" stop-color="#009dff"/><stop offset="0.2533" stop-color="#0085ff"/><stop offset="0.3600" stop-color="#006fff"/><stop offset="0.5067" stop-color="#005bff"/><stop offset="0.6933" stop-color="#004aff"/><stop offset="1.0000" stop-color="#0056ff"/></linearGradient><linearGradient id="w65" gradientUnits="userSpaceOnUse" x1="1407.8" y1="465.6" x2="692.5" y2="691.1"><stop offset="0.0000" stop-color="#ffffff"/><stop offset="0.0040" stop-color="#f4fcff"/><stop offset="0.0093" stop-color="#e6f8ff"/><stop offset="0.0173" stop-color="#d3f2ff"/><stop offset="0.0293" stop-color="#b7e9ff"/><stop offset="0.0467" stop-color="#92deff"/><stop offset="0.0733" stop-color="#61cfff"/><stop offset="0.1133" stop-color="#23bdff"/><stop offset="0.1733" stop-color="#00a7ff"/><stop offset="0.2533" stop-color="#0092ff"/><stop offset="0.3600" stop-color="#007dff"/><stop offset="0.5067" stop-color="#006bff"/><stop offset="0.6933" stop-color="#005bff"/><stop offset="1.0000" stop-color="#0058ff"/></linearGradient><linearGradient id="w66" gradientUnits="userSpaceOnUse" x1="1407.8" y1="465.6" x2="683.4" y2="659.7"><stop offset="0.0000" stop-color="#ffffff"/><stop offset="0.0040" stop-color="#f4fcff"/><stop offset="0.0093" stop-color="#e6f9ff"/><stop offset="0.0173" stop-color="#d2f3ff"/><stop offset="0.0293" stop-color="#b6ecff"/><stop offset="0.0467" stop-color="#91e2ff"/><stop offset="0.0733" stop-color="#5fd5ff"/><stop offset="0.1133" stop-color="#20c5ff"/><stop offset="0.1733" stop-color="#00b1ff"/><stop offset="0.2533" stop-color="#009eff"/><stop offset="0.3600" stop-color="#008cff"/><stop offset="0.5067" stop-color="#007bff"/><stop offset="0.6933" stop-color="#006dff"/><stop offset="1.0000" stop-color="#005eff"/></linearGradient><linearGradient id="w67" gradientUnits="userSpaceOnUse" x1="1407.8" y1="465.6" x2="675.6" y2="627.9"><stop offset="0.0000" stop-color="#ffffff"/><stop offset="0.0040" stop-color="#f4fdff"/><stop offset="0.0093" stop-color="#e6faff"/><stop offset="0.0173" stop-color="#d2f5ff"/><stop offset="0.0293" stop-color="#b6efff"/><stop offset="0.0467" stop-color="#90e6ff"/><stop offset="0.0733" stop-color="#5ddbff"/><stop offset="0.1133" stop-color="#1dcdff"/><stop offset="0.1733" stop-color="#00bcff"/><stop offset="0.2533" stop-color="#00abff"/><stop offset="0.3600" stop-color="#009bff"/><stop offset="0.5067" stop-color="#008cff"/><stop offset="0.6933" stop-color="#0080ff"/><stop offset="1.0000" stop-color="#0072ff"/></linearGradient><linearGradient id="w68" gradientUnits="userSpaceOnUse" x1="1407.8" y1="465.6" x2="669.2" y2="595.8"><stop offset="0.0000" stop-color="#ffffff"/><stop offset="0.0040" stop-color="#f4fdff"/><stop offset="0.0093" stop-color="#e6fbff"/><stop offset="0.0173" stop-color="#d2f7ff"/><stop offset="0.0293" stop-color="#b5f2ff"/><stop offset="0.0467" stop-color="#8febff"/><stop offset="0.0733" stop-color="#5ce1ff"/><stop offset="0.1133" stop-color="#1ad6ff"/><stop offset="0.1733" stop-color="#00c8ff"/><stop offset="0.2533" stop-color="#00b9ff"/><stop offset="0.3600" stop-color="#00acff"/><stop offset="0.5067" stop-color="#009fff"/><stop offset="0.6933" stop-color="#0094ff"/><stop offset="1.0000" stop-color="#0088ff"/></linearGradient><linearGradient id="w69" gradientUnits="userSpaceOnUse" x1="1407.8" y1="465.6" x2="664.2" y2="563.5"><stop offset="0.0000" stop-color="#ffffff"/><stop offset="0.0040" stop-color="#f4fdff"/><stop offset="0.0093" stop-color="#e6fcff"/><stop offset="0.0173" stop-color="#d2f9ff"/><stop offset="0.0293" stop-color="#b5f5ff"/><stop offset="0.0467" stop-color="#8fefff"/><stop offset="0.0733" stop-color="#5ae8ff"/><stop offset="0.1133" stop-color="#18dfff"/><stop offset="0.1733" stop-color="#00d3ff"/><stop offset="0.2533" stop-color="#00c8ff"/><stop offset="0.3600" stop-color="#00bdff"/><stop offset="0.5067" stop-color="#00b2ff"/><stop offset="0.6933" stop-color="#00a9ff"/><stop offset="1.0000" stop-color="#009fff"/></linearGradient><linearGradient id="w70" gradientUnits="userSpaceOnUse" x1="1407.8" y1="465.6" x2="660.7" y2="530.9"><stop offset="0.0000" stop-color="#ffffff"/><stop offset="0.0040" stop-color="#f4feff"/><stop offset="0.0093" stop-color="#e6fdff"/><stop offset="0.0173" stop-color="#d2faff"/><stop offset="0.0293" stop-color="#b5f8ff"/><stop offset="0.0467" stop-color="#8ef4ff"/><stop offset="0.0733" stop-color="#59eeff"/><stop offset="0.1133" stop-color="#15e8ff"/><stop offset="0.1733" stop-color="#00dfff"/><stop offset="0.2533" stop-color="#00d7ff"/><stop offset="0.3600" stop-color="#00cfff"/><stop offset="0.5067" stop-color="#00c7ff"/><stop offset="0.6933" stop-color="#00c0ff"/><stop offset="1.0000" stop-color="#00b9ff"/></linearGradient><linearGradient id="w71" gradientUnits="userSpaceOnUse" x1="1407.8" y1="465.6" x2="658.5" y2="498.3"><stop offset="0.0000" stop-color="#ffffff"/><stop offset="0.0040" stop-color="#f4feff"/><stop offset="0.0093" stop-color="#e6feff"/><stop offset="0.0173" stop-color="#d2fcff"/><stop offset="0.0293" stop-color="#b5fbff"/><stop offset="0.0467" stop-color="#8ef8ff"/><stop offset="0.0733" stop-color="#58f5ff"/><stop offset="0.1133" stop-color="#13f1ff"/><stop offset="0.1733" stop-color="#00ecff"/><stop offset="0.2533" stop-color="#00e7ff"/><stop offset="0.3600" stop-color="#00e2ff"/><stop offset="0.5067" stop-color="#00ddff"/><stop offset="0.6933" stop-color="#00d8ff"/><stop offset="1.0000" stop-color="#00d4ff"/></linearGradient><linearGradient id="w72" gradientUnits="userSpaceOnUse" x1="1407.8" y1="465.6" x2="657.8" y2="465.6"><stop offset="0.0000" stop-color="#ffffff"/><stop offset="0.0040" stop-color="#f4ffff"/><stop offset="0.0093" stop-color="#e6ffff"/><stop offset="0.0173" stop-color="#d2feff"/><stop offset="0.0293" stop-color="#b5feff"/><stop offset="0.0467" stop-color="#8efdff"/><stop offset="0.0733" stop-color="#58fcff"/><stop offset="0.1133" stop-color="#11fbff"/><stop offset="0.1733" stop-color="#00f9ff"/><stop offset="0.2533" stop-color="#00f8ff"/><stop offset="0.3600" stop-color="#00f6ff"/><stop offset="0.5067" stop-color="#00f4ff"/><stop offset="0.6933" stop-color="#00f3ff"/><stop offset="1.0000" stop-color="#00f1ff"/></linearGradient><linearGradient id="w73" gradientUnits="userSpaceOnUse" x1="1407.8" y1="465.6" x2="658.5" y2="432.9"><stop offset="0.0000" stop-color="#ffffff"/><stop offset="0.0040" stop-color="#f4ffff"/><stop offset="0.0093" stop-color="#e6fffe"/><stop offset="0.0173" stop-color="#d1fffe"/><stop offset="0.0293" stop-color="#b4fffd"/><stop offset="0.0467" stop-color="#8dfffc"/><stop offset="0.0733" stop-color="#56fffb"/><stop offset="0.1133" stop-color="#0ffff9"/><stop offset="0.1733" stop-color="#00fff7"/><stop offset="0.2533" stop-color="#00fff5"/><stop offset="0.3600" stop-color="#00fff3"/><stop offset="0.5067" stop-color="#00fff1"/><stop offset="0.6933" stop-color="#00ffef"/><stop offset="1.0000" stop-color="#00ffed"/></linearGradient><linearGradient id="w74" gradientUnits="userSpaceOnUse" x1="1407.8" y1="465.6" x2="660.7" y2="400.2"><stop offset="0.0000" stop-color="#ffffff"/><stop offset="0.0040" stop-color="#f4fffe"/><stop offset="0.0093" stop-color="#e5fffd"/><stop offset="0.0173" stop-color="#d0fffc"/><stop offset="0.0293" stop-color="#b2fffa"/><stop offset="0.0467" stop-color="#8bfff8"/><stop offset="0.0733" stop-color="#54fff4"/><stop offset="0.1133" stop-color="#0efff0"/><stop offset="0.1733" stop-color="#00ffeb"/><stop offset="0.2533" stop-color="#00ffe5"/><stop offset="0.3600" stop-color="#00ffe0"/><stop offset="0.5067" stop-color="#00ffdb"/><stop offset="0.6933" stop-color="#00ffd6"/><stop offset="1.0000" stop-color="#00ffd2"/></linearGradient><linearGradient id="w75" gradientUnits="userSpaceOnUse" x1="1407.8" y1="465.6" x2="664.2" y2="367.7"><stop offset="0.0000" stop-color="#ffffff"/><stop offset="0.0040" stop-color="#f4fffe"/><stop offset="0.0093" stop-color="#e5fffc"/><stop offset="0.0173" stop-color="#cffffa"/><stop offset="0.0293" stop-color="#b1fff7"/><stop offset="0.0467" stop-color="#89fff3"/><stop offset="0.0733" stop-color="#52ffee"/><stop offset="0.1133" stop-color="#0cffe7"/><stop offset="0.1733" stop-color="#00ffdf"/><stop offset="0.2533" stop-color="#00ffd6"/><stop offset="0.3600" stop-color="#00ffce"/><stop offset="0.5067" stop-color="#00ffc7"/><stop offset="0.6933" stop-color="#00ffc0"/><stop offset="1.0000" stop-color="#00ffba"/></linearGradient><linearGradient id="w76" gradientUnits="userSpaceOnUse" x1="1407.8" y1="465.6" x2="669.2" y2="335.3"><stop offset="0.0000" stop-color="#ffffff"/><stop offset="0.0040" stop-color="#f3fffd"/><stop offset="0.0093" stop-color="#e4fffb"/><stop offset="0.0173" stop-color="#cefff8"/><stop offset="0.0293" stop-color="#affff4"/><stop offset="0.0467" stop-color="#87ffef"/><stop offset="0.0733" stop-color="#50ffe7"/><stop offset="0.1133" stop-color="#0cffde"/><stop offset="0.1733" stop-color="#00ffd3"/><stop offset="0.2533" stop-color="#00ffc9"/><stop offset="0.3600" stop-color="#00ffbe"/><stop offset="0.5067" stop-color="#00ffb5"/><stop offset="0.6933" stop-color="#00ffad"/><stop offset="1.0000" stop-color="#00ffa5"/></linearGradient><linearGradient id="w77" gradientUnits="userSpaceOnUse" x1="1407.8" y1="465.6" x2="675.6" y2="303.2"><stop offset="0.0000" stop-color="#ffffff"/><stop offset="0.0040" stop-color="#f3fffd"/><stop offset="0.0093" stop-color="#e3fffa"/><stop offset="0.0173" stop-color="#cdfff7"/><stop offset="0.0293" stop-color="#aefff1"/><stop offset="0.0467" stop-color="#85ffeb"/><stop offset="0.0733" stop-color="#4fffe1"/><stop offset="0.1133" stop-color="#0bffd6"/><stop offset="0.1733" stop-color="#00ffc9"/><stop offset="0.2533" stop-color="#00ffbc"/><stop offset="0.3600" stop-color="#00ffb0"/><stop offset="0.5067" stop-color="#00ffa5"/><stop offset="0.6933" stop-color="#00ff9b"/><stop offset="1.0000" stop-color="#00ff92"/></linearGradient><linearGradient id="w78" gradientUnits="userSpaceOnUse" x1="1407.8" y1="465.6" x2="683.4" y2="271.5"><stop offset="0.0000" stop-color="#ffffff"/><stop offset="0.0040" stop-color="#f3fffd"/><stop offset="0.0093" stop-color="#e3fff9"/><stop offset="0.0173" stop-color="#ccfff5"/><stop offset="0.0293" stop-color="#adffef"/><stop offset="0.0467" stop-color="#84ffe6"/><stop offset="0.0733" stop-color="#4effdc"/><stop offset="0.1133" stop-color="#0bffce"/><stop offset="0.1733" stop-color="#00ffbf"/><stop offset="0.2533" stop-color="#00ffb0"/><stop offset="0.3600" stop-color="#00ffa2"/><stop offset="0.5067" stop-color="#00ff96"/><stop offset="0.6933" stop-color="#00ff8b"/><stop offset="1.0000" stop-color="#00ff81"/></linearGradient><linearGradient id="w79" gradientUnits="userSpaceOnUse" x1="1407.8" y1="465.6" x2="692.5" y2="240.0"><stop offset="0.0000" stop-color="#ffffff"/><stop offset="0.0040" stop-color="#f3fffc"/><stop offset="0.0093" stop-color="#e3fff8"/><stop offset="0.0173" stop-color="#ccfff3"/><stop offset="0.0293" stop-color="#acffec"/><stop offset="0.0467" stop-color="#83ffe2"/><stop offset="0.0733" stop-color="#4dffd6"/><stop offset="0.1133" stop-color="#0bffc7"/><stop offset="0.1733" stop-color="#00ffb5"/><stop offset="0.2533" stop-color="#00ffa5"/><stop offset="0.3600" stop-color="#00ff96"/><stop offset="0.5067" stop-color="#00ff88"/><stop offset="0.6933" stop-color="#00ff7d"/><stop offset="1.0000" stop-color="#00ff72"/></linearGradient><linearGradient id="w80" gradientUnits="userSpaceOnUse" x1="1407.8" y1="465.6" x2="703.0" y2="209.1"><stop offset="0.0000" stop-color="#ffffff"/><stop offset="0.0040" stop-color="#f2fffc"/><stop offset="0.0093" stop-color="#e2fff7"/><stop offset="0.0173" stop-color="#cbfff1"/><stop offset="0.0293" stop-color="#abffe9"/><stop offset="0.0467" stop-color="#82ffdf"/><stop offset="0.0733" stop-color="#4cffd0"/><stop offset="0.1133" stop-color="#0bffc0"/><stop offset="0.1733" stop-color="#00ffad"/><stop offset="0.2533" stop-color="#00ff9b"/><stop offset="0.3600" stop-color="#00ff8a"/><stop offset="0.5067" stop-color="#00ff7b"/><stop offset="0.6933" stop-color="#00ff6f"/><stop offset="1.0000" stop-color="#00ff64"/></linearGradient><linearGradient id="w81" gradientUnits="userSpaceOnUse" x1="1407.8" y1="465.6" x2="714.9" y2="178.6"><stop offset="0.0000" stop-color="#ffffff"/><stop offset="0.0040" stop-color="#f2fffb"/><stop offset="0.0093" stop-color="#e2fff7"/><stop offset="0.0173" stop-color="#cbfff0"/><stop offset="0.0293" stop-color="#abffe7"/><stop offset="0.0467" stop-color="#82ffdb"/><stop offset="0.0733" stop-color="#4cffcb"/><stop offset="0.1133" stop-color="#0cffb9"/><stop offset="0.1733" stop-color="#00ffa4"/><stop offset="0.2533" stop-color="#00ff91"/><stop offset="0.3600" stop-color="#00ff7f"/><stop offset="0.5067" stop-color="#00ff70"/><stop offset="0.6933" stop-color="#00ff63"/><stop offset="1.0000" stop-color="#00ff57"/></linearGradient><linearGradient id="w82" gradientUnits="userSpaceOnUse" x1="1407.8" y1="465.6" x2="728.1" y2="148.6"><stop offset="0.0000" stop-color="#ffffff"/><stop offset="0.0040" stop-color="#f2fffb"/><stop offset="0.0093" stop-color="#e2fff6"/><stop offset="0.0173" stop-color="#caffee"/><stop offset="0.0293" stop-color="#aaffe4"/><stop offset="0.0467" stop-color="#81ffd7"/><stop offset="0.0733" stop-color="#4cffc6"/><stop offset="0.1133" stop-color="#0dffb2"/><stop offset="0.1733" stop-color="#00ff9c"/><stop offset="0.2533" stop-color="#00ff88"/><stop offset="0.3600" stop-color="#00ff75"/><stop offset="0.5067" stop-color="#00ff65"/><stop offset="0.6933" stop-color="#00ff58"/><stop offset="1.0000" stop-color="#00ff4b"/></linearGradient><linearGradient id="w83" gradientUnits="userSpaceOnUse" x1="1407.8" y1="465.6" x2="742.6" y2="119.3"><stop offset="0.0000" stop-color="#ffffff"/><stop offset="0.0040" stop-color="#f2fffa"/><stop offset="0.0093" stop-color="#e1fff5"/><stop offset="0.0173" stop-color="#caffed"/><stop offset="0.0293" stop-color="#aaffe2"/><stop offset="0.0467" stop-color="#81ffd4"/><stop offset="0.0733" stop-color="#4cffc1"/><stop offset="0.1133" stop-color="#0fffac"/><stop offset="0.1733" stop-color="#00ff95"/><stop offset="0.2533" stop-color="#00ff7f"/><stop offset="0.3600" stop-color="#00ff6c"/><stop offset="0.5067" stop-color="#00ff5b"/><stop offset="0.6933" stop-color="#00ff4d"/><stop offset="1.0000" stop-color="#00ff40"/></linearGradient><linearGradient id="w84" gradientUnits="userSpaceOnUse" x1="1407.8" y1="465.6" x2="758.3" y2="90.6"><stop offset="0.0000" stop-color="#ffffff"/><stop offset="0.0040" stop-color="#f2fffa"/><stop offset="0.0093" stop-color="#e1fff4"/><stop offset="0.0173" stop-color="#caffeb"/><stop offset="0.0293" stop-color="#aaffdf"/><stop offset="0.0467" stop-color="#81ffd0"/><stop offset="0.0733" stop-color="#4dffbd"/><stop offset="0.1133" stop-color="#10ffa6"/><stop offset="0.1733" stop-color="#00ff8d"/><stop offset="0.2533" stop-color="#00ff77"/><stop offset="0.3600" stop-color="#00ff63"/><stop offset="0.5067" stop-color="#00ff51"/><stop offset="0.6933" stop-color="#00ff44"/><stop offset="1.0000" stop-color="#00ff36"/></linearGradient><linearGradient id="w85" gradientUnits="userSpaceOnUse" x1="1407.8" y1="465.6" x2="775.3" y2="62.6"><stop offset="0.0000" stop-color="#ffffff"/><stop offset="0.0040" stop-color="#f2fffa"/><stop offset="0.0093" stop-color="#e1fff3"/><stop offset="0.0173" stop-color="#c9ffea"/><stop offset="0.0293" stop-color="#a9ffdd"/><stop offset="0.0467" stop-color="#81ffcd"/><stop offset="0.0733" stop-color="#4effb8"/><stop offset="0.1133" stop-color="#12ffa0"/><stop offset="0.1733" stop-color="#00ff86"/><stop offset="0.2533" stop-color="#00ff6f"/><stop offset="0.3600" stop-color="#00ff5a"/><stop offset="0.5067" stop-color="#00ff49"/><stop offset="0.6933" stop-color="#00ff3a"/><stop offset="1.0000" stop-color="#00ff2d"/></linearGradient><linearGradient id="w86" gradientUnits="userSpaceOnUse" x1="1407.8" y1="465.6" x2="793.4" y2="35.4"><stop offset="0.0000" stop-color="#ffffff"/><stop offset="0.0040" stop-color="#f2fff9"/><stop offset="0.0093" stop-color="#e1fff2"/><stop offset="0.0173" stop-color="#c9ffe8"/><stop offset="0.0293" stop-color="#aaffdb"/><stop offset="0.0467" stop-color="#82ffca"/><stop offset="0.0733" stop-color="#4fffb4"/><stop offset="0.1133" stop-color="#14ff9b"/><stop offset="0.1733" stop-color="#00ff80"/><stop offset="0.2533" stop-color="#00ff68"/><stop offset="0.3600" stop-color="#00ff53"/><stop offset="0.5067" stop-color="#00ff40"/><stop offset="0.6933" stop-color="#00ff32"/><stop offset="1.0000" stop-color="#00ff24"/></linearGradient><linearGradient id="w87" gradientUnits="userSpaceOnUse" x1="1407.8" y1="465.6" x2="812.8" y2="9.0"><stop offset="0.0000" stop-color="#ffffff"/><stop offset="0.0040" stop-color="#f2fff9"/><stop offset="0.0093" stop-color="#e1fff1"/><stop offset="0.0173" stop-color="#c9ffe7"/><stop offset="0.0293" stop-color="#aaffd8"/><stop offset="0.0467" stop-color="#82ffc6"/><stop offset="0.0733" stop-color="#50ffb0"/><stop offset="0.1133" stop-color="#16ff96"/><stop offset="0.1733" stop-color="#00ff7a"/><stop offset="0.2533" stop-color="#00ff61"/><stop offset="0.3600" stop-color="#00ff4b"/><stop offset="0.5067" stop-color="#00ff38"/><stop offset="0.6933" stop-color="#00ff2a"/><stop offset="1.0000" stop-color="#00ff1c"/></linearGradient><linearGradient id="w88" gradientUnits="userSpaceOnUse" x1="1407.8" y1="465.6" x2="833.3" y2="-16.5"><stop offset="0.0000" stop-color="#ffffff"/><stop offset="0.0040" stop-color="#f2fff9"/><stop offset="0.0093" stop-color="#e1fff1"/><stop offset="0.0173" stop-color="#caffe5"/><stop offset="0.0293" stop-color="#aaffd6"/><stop offset="0.0467" stop-color="#83ffc4"/><stop offset="0.0733" stop-color="#51ffac"/><stop offset="0.1133" stop-color="#18ff91"/><stop offset="0.1733" stop-color="#00ff74"/><stop offset="0.2533" stop-color="#00ff5a"/><stop offset="0.3600" stop-color="#00ff44"/><stop offset="0.5067" stop-color="#00ff31"/><stop offset="0.6933" stop-color="#00ff22"/><stop offset="1.0000" stop-color="#00ff14"/></linearGradient><linearGradient id="w89" gradientUnits="userSpaceOnUse" x1="1407.8" y1="465.6" x2="854.9" y2="-41.1"><stop offset="0.0000" stop-color="#ffffff"/><stop offset="0.0040" stop-color="#f2fff8"/><stop offset="0.0093" stop-color="#e1fff0"/><stop offset="0.0173" stop-color="#caffe4"/><stop offset="0.0293" stop-color="#abffd4"/><stop offset="0.0467" stop-color="#84ffc1"/><stop offset="0.0733" stop-color="#53ffa8"/><stop offset="0.1133" stop-color="#1bff8c"/><stop offset="0.1733" stop-color="#00ff6e"/><stop offset="0.2533" stop-color="#00ff54"/><stop offset="0.3600" stop-color="#00ff3d"/><stop offset="0.5067" stop-color="#00ff2a"/><stop offset="0.6933" stop-color="#00ff1a"/><stop offset="1.0000" stop-color="#00ff0c"/></linearGradient><linearGradient id="w90" gradientUnits="userSpaceOnUse" x1="1407.8" y1="465.6" x2="877.5" y2="-64.8"><stop offset="0.0000" stop-color="#ffffff"/><stop offset="0.0040" stop-color="#f2fff8"/><stop offset="0.0093" stop-color="#e1ffef"/><stop offset="0.0173" stop-color="#caffe3"/><stop offset="0.0293" stop-color="#abffd2"/><stop offset="0.0467" stop-color="#85ffbe"/><stop offset="0.0733" stop-color="#55ffa4"/><stop offset="0.1133" stop-color="#1eff87"/><stop offset="0.1733" stop-color="#00ff69"/><stop offset="0.2533" stop-color="#00ff4e"/><stop offset="0.3600" stop-color="#00ff37"/><stop offset="0.5067" stop-color="#00ff23"/><stop offset="0.6933" stop-color="#00ff13"/><stop offset="1.0000" stop-color="#00ff05"/></linearGradient><linearGradient id="w91" gradientUnits="userSpaceOnUse" x1="1407.8" y1="465.6" x2="901.1" y2="-87.4"><stop offset="0.0000" stop-color="#ffffff"/><stop offset="0.0040" stop-color="#f2fff8"/><stop offset="0.0093" stop-color="#e1ffee"/><stop offset="0.0173" stop-color="#cbffe2"/><stop offset="0.0293" stop-color="#acffd1"/><stop offset="0.0467" stop-color="#86ffbb"/><stop offset="0.0733" stop-color="#57ffa1"/><stop offset="0.1133" stop-color="#21ff83"/><stop offset="0.1733" stop-color="#00ff64"/><stop offset="0.2533" stop-color="#00ff48"/><stop offset="0.3600" stop-color="#00ff30"/><stop offset="0.5067" stop-color="#00ff1c"/><stop offset="0.6933" stop-color="#00ff0d"/><stop offset="1.0000" stop-color="#00ff00"/></linearGradient><linearGradient id="w92" gradientUnits="userSpaceOnUse" x1="1407.8" y1="465.6" x2="925.7" y2="-109.0"><stop offset="0.0000" stop-color="#ffffff"/><stop offset="0.0040" stop-color="#f2fff7"/><stop offset="0.0093" stop-color="#e2ffee"/><stop offset="0.0173" stop-color="#cbffe1"/><stop offset="0.0293" stop-color="#adffcf"/><stop offset="0.0467" stop-color="#87ffb9"/><stop offset="0.0733" stop-color="#59ff9e"/><stop offset="0.1133" stop-color="#24ff7f"/><stop offset="0.1733" stop-color="#00ff5f"/><stop offset="0.2533" stop-color="#00ff43"/><stop offset="0.3600" stop-color="#00ff2a"/><stop offset="0.5067" stop-color="#00ff16"/><stop offset="0.6933" stop-color="#00ff06"/><stop offset="1.0000" stop-color="#00ff00"/></linearGradient><linearGradient id="w93" gradientUnits="userSpaceOnUse" x1="1407.8" y1="465.6" x2="951.2" y2="-129.4"><stop offset="0.0000" stop-color="#ffffff"/><stop offset="0.0040" stop-color="#f2fff7"/><stop offset="0.0093" stop-color="#e2ffed"/><stop offset="0.0173" stop-color="#ccffdf"/><stop offset="0.0293" stop-color="#aeffcd"/><stop offset="0.0467" stop-color="#89ffb7"/><stop offset="0.0733" stop-color="#5bff9b"/><stop offset="0.1133" stop-color="#28ff7b"/><stop offset="0.1733" stop-color="#00ff5a"/><stop offset="0.2533" stop-color="#00ff3d"/><stop offset="0.3600" stop-color="#00ff25"/><stop offset="0.5067" stop-color="#00ff10"/><stop offset="0.6933" stop-color="#00ff00"/><stop offset="1.0000" stop-color="#00ff00"/></linearGradient><linearGradient id="w94" gradientUnits="userSpaceOnUse" x1="1407.8" y1="465.6" x2="977.6" y2="-148.8"><stop offset="0.0000" stop-color="#ffffff"/><stop offset="0.0040" stop-color="#f2fff7"/><stop offset="0.0093" stop-color="#e2ffed"/><stop offset="0.0173" stop-color="#ccffde"/><stop offset="0.0293" stop-color="#afffcc"/><stop offset="0.0467" stop-color="#8bffb4"/><stop offset="0.0733" stop-color="#5eff98"/><stop offset="0.1133" stop-color="#2bff77"/><stop offset="0.1733" stop-color="#00ff56"/><stop offset="0.2533" stop-color="#00ff38"/><stop offset="0.3600" stop-color="#00ff1f"/><stop offset="0.5067" stop-color="#00ff0a"/><stop offset="0.6933" stop-color="#00ff00"/><stop offset="1.0000" stop-color="#00ff00"/></linearGradient><linearGradient id="w95" gradientUnits="userSpaceOnUse" x1="1407.8" y1="465.6" x2="1004.8" y2="-167.0"><stop offset="0.0000" stop-color="#ffffff"/><stop offset="0.0040" stop-color="#f2fff7"/><stop offset="0.0093" stop-color="#e3ffec"/><stop offset="0.0173" stop-color="#cdffde"/><stop offset="0.0293" stop-color="#b0ffca"/><stop offset="0.0467" stop-color="#8dffb2"/><stop offset="0.0733" stop-color="#61ff95"/><stop offset="0.1133" stop-color="#2fff74"/><stop offset="0.1733" stop-color="#00ff51"/><stop offset="0.2533" stop-color="#00ff33"/><stop offset="0.3600" stop-color="#00ff1a"/><stop offset="0.5067" stop-color="#00ff05"/><stop offset="0.6933" stop-color="#00ff00"/><stop offset="1.0000" stop-color="#00ff00"/></linearGradient><linearGradient id="w96" gradientUnits="userSpaceOnUse" x1="1407.8" y1="465.6" x2="1032.8" y2="-184.0"><stop offset="0.0000" stop-color="#ffffff"/><stop offset="0.0040" stop-color="#f3fff6"/><stop offset="0.0093" stop-color="#e3ffec"/><stop offset="0.0173" stop-color="#ceffdd"/><stop offset="0.0293" stop-color="#b2ffc9"/><stop offset="0.0467" stop-color="#8fffb0"/><stop offset="0.0733" stop-color="#64ff92"/><stop offset="0.1133" stop-color="#33ff70"/><stop offset="0.1733" stop-color="#01ff4d"/><stop offset="0.2533" stop-color="#00ff2f"/><stop offset="0.3600" stop-color="#00ff15"/><stop offset="0.5067" stop-color="#00ff00"/><stop offset="0.6933" stop-color="#00ff00"/><stop offset="1.0000" stop-color="#00ff00"/></linearGradient><linearGradient id="w97" gradientUnits="userSpaceOnUse" x1="1407.8" y1="465.6" x2="1061.5" y2="-199.7"><stop offset="0.0000" stop-color="#ffffff"/><stop offset="0.0040" stop-color="#f3fff6"/><stop offset="0.0093" stop-color="#e4ffeb"/><stop offset="0.0173" stop-color="#cfffdc"/><stop offset="0.0293" stop-color="#b3ffc7"/><stop offset="0.0467" stop-color="#91ffae"/><stop offset="0.0733" stop-color="#67ff90"/><stop offset="0.1133" stop-color="#38ff6d"/><stop offset="0.1733" stop-color="#07ff49"/><stop offset="0.2533" stop-color="#00ff2a"/><stop offset="0.3600" stop-color="#00ff10"/><stop offset="0.5067" stop-color="#00ff00"/><stop offset="0.6933" stop-color="#00ff00"/><stop offset="1.0000" stop-color="#00ff00"/></linearGradient><linearGradient id="w98" gradientUnits="userSpaceOnUse" x1="1407.8" y1="465.6" x2="1090.9" y2="-214.2"><stop offset="0.0000" stop-color="#ffffff"/><stop offset="0.0040" stop-color="#f3fff6"/><stop offset="0.0093" stop-color="#e4ffeb"/><stop offset="0.0173" stop-color="#d0ffdb"/><stop offset="0.0293" stop-color="#b5ffc6"/><stop offset="0.0467" stop-color="#93ffad"/><stop offset="0.0733" stop-color="#6aff8d"/><stop offset="0.1133" stop-color="#3cff6a"/><stop offset="0.1733" stop-color="#0cff46"/><stop offset="0.2533" stop-color="#00ff26"/><stop offset="0.3600" stop-color="#00ff0c"/><stop offset="0.5067" stop-color="#00ff00"/><stop offset="0.6933" stop-color="#00ff00"/><stop offset="1.0000" stop-color="#00ff00"/></linearGradient><linearGradient id="w99" gradientUnits="userSpaceOnUse" x1="1407.8" y1="465.6" x2="1120.8" y2="-227.3"><stop offset="0.0000" stop-color="#ffffff"/><stop offset="0.0040" stop-color="#f3fff6"/><stop offset="0.0093" stop-color="#e5ffea"/><stop offset="0.0173" stop-color="#d1ffda"/><stop offset="0.0293" stop-color="#b6ffc5"/><stop offset="0.0467" stop-color="#96ffab"/><stop offset="0.0733" stop-color="#6dff8b"/><stop offset="0.1133" stop-color="#41ff67"/><stop offset="0.1733" stop-color="#12ff42"/><stop offset="0.2533" stop-color="#00ff22"/><stop offset="0.3600" stop-color="#00ff07"/><stop offset="0.5067" stop-color="#00ff00"/><stop offset="0.6933" stop-color="#00ff00"/><stop offset="1.0000" stop-color="#00ff00"/></linearGradient><linearGradient id="w100" gradientUnits="userSpaceOnUse" x1="1407.8" y1="465.6" x2="1151.3" y2="-239.2"><stop offset="0.0000" stop-color="#ffffff"/><stop offset="0.0040" stop-color="#f4fff6"/><stop offset="0.0093" stop-color="#e6ffea"/><stop offset="0.0173" stop-color="#d2ffda"/><stop offset="0.0293" stop-color="#b8ffc4"/><stop offset="0.0467" stop-color="#98ffa9"/><stop offset="0.0733" stop-color="#71ff89"/><stop offset="0.1133" stop-color="#45ff64"/><stop offset="0.1733" stop-color="#18ff3f"/><stop offset="0.2533" stop-color="#00ff1e"/><stop offset="0.3600" stop-color="#00ff03"/><stop offset="0.5067" stop-color="#00ff00"/><stop offset="0.6933" stop-color="#00ff00"/><stop offset="1.0000" stop-color="#00ff00"/></linearGradient><linearGradient id="w101" gradientUnits="userSpaceOnUse" x1="1407.8" y1="465.6" x2="1182.3" y2="-249.7"><stop offset="0.0000" stop-color="#ffffff"/><stop offset="0.0040" stop-color="#f4fff5"/><stop offset="0.0093" stop-color="#e6ffe9"/><stop offset="0.0173" stop-color="#d3ffd9"/><stop offset="0.0293" stop-color="#baffc3"/><stop offset="0.0467" stop-color="#9bffa8"/><stop offset="0.0733" stop-color="#75ff87"/><stop offset="0.1133" stop-color="#4aff62"/><stop offset="0.1733" stop-color="#1fff3c"/><stop offset="0.2533" stop-color="#00ff1a"/><stop offset="0.3600" stop-color="#00ff00"/><stop offset="0.5067" stop-color="#00ff00"/><stop offset="0.6933" stop-color="#00ff00"/><stop offset="1.0000" stop-color="#00ff00"/></linearGradient><linearGradient id="w102" gradientUnits="userSpaceOnUse" x1="1407.8" y1="465.6" x2="1213.7" y2="-258.9"><stop offset="0.0000" stop-color="#ffffff"/><stop offset="0.0040" stop-color="#f4fff5"/><stop offset="0.0093" stop-color="#e7ffe9"/><stop offset="0.0173" stop-color="#d5ffd8"/><stop offset="0.0293" stop-color="#bcffc2"/><stop offset="0.0467" stop-color="#9effa7"/><stop offset="0.0733" stop-color="#79ff85"/><stop offset="0.1133" stop-color="#50ff60"/><stop offset="0.1733" stop-color="#25ff39"/><stop offset="0.2533" stop-color="#00ff17"/><stop offset="0.3600" stop-color="#00ff00"/><stop offset="0.5067" stop-color="#00ff00"/><stop offset="0.6933" stop-color="#00ff00"/><stop offset="1.0000" stop-color="#00ff00"/></linearGradient><linearGradient id="w103" gradientUnits="userSpaceOnUse" x1="1407.8" y1="465.6" x2="1245.5" y2="-266.7"><stop offset="0.0000" stop-color="#ffffff"/><stop offset="0.0040" stop-color="#f5fff5"/><stop offset="0.0093" stop-color="#e8ffe9"/><stop offset="0.0173" stop-color="#d6ffd8"/><stop offset="0.0293" stop-color="#beffc1"/><stop offset="0.0467" stop-color="#a1ffa6"/><stop offset="0.0733" stop-color="#7dff84"/><stop offset="0.1133" stop-color="#55ff5d"/><stop offset="0.1733" stop-color="#2cff36"/><stop offset="0.2533" stop-color="#08ff13"/><stop offset="0.3600" stop-color="#00ff00"/><stop offset="0.5067" stop-color="#00ff00"/><stop offset="0.6933" stop-color="#00ff00"/><stop offset="1.0000" stop-color="#00ff00"/></linearGradient><linearGradient id="w104" gradientUnits="userSpaceOnUse" x1="1407.8" y1="465.6" x2="1277.6" y2="-273.0"><stop offset="0.0000" stop-color="#ffffff"/><stop offset="0.0040" stop-color="#f5fff5"/><stop offset="0.0093" stop-color="#e9ffe9"/><stop offset="0.0173" stop-color="#d7ffd8"/><stop offset="0.0293" stop-color="#c1ffc1"/><stop offset="0.0467" stop-color="#a4ffa5"/><stop offset="0.0733" stop-color="#82ff82"/><stop offset="0.1133" stop-color="#5bff5b"/><stop offset="0.1733" stop-color="#33ff33"/><stop offset="0.2533" stop-color="#0fff10"/><stop offset="0.3600" stop-color="#00ff00"/><stop offset="0.5067" stop-color="#00ff00"/><stop offset="0.6933" stop-color="#00ff00"/><stop offset="1.0000" stop-color="#00ff00"/></linearGradient><linearGradient id="w105" gradientUnits="userSpaceOnUse" x1="1407.8" y1="465.6" x2="1309.9" y2="-278.0"><stop offset="0.0000" stop-color="#ffffff"/><stop offset="0.0040" stop-color="#f5fff5"/><stop offset="0.0093" stop-color="#eaffe9"/><stop offset="0.0173" stop-color="#d9ffd7"/><stop offset="0.0293" stop-color="#c3ffc0"/><stop offset="0.0467" stop-color="#a8ffa4"/><stop offset="0.0733" stop-color="#86ff81"/><stop offset="0.1133" stop-color="#61ff59"/><stop offset="0.1733" stop-color="#3aff31"/><stop offset="0.2533" stop-color="#18ff0d"/><stop offset="0.3600" stop-color="#00ff00"/><stop offset="0.5067" stop-color="#00ff00"/><stop offset="0.6933" stop-color="#00ff00"/><stop offset="1.0000" stop-color="#00ff00"/></linearGradient><linearGradient id="w106" gradientUnits="userSpaceOnUse" x1="1407.8" y1="465.6" x2="1342.4" y2="-281.6"><stop offset="0.0000" stop-color="#ffffff"/><stop offset="0.0040" stop-color="#f6fff5"/><stop offset="0.0093" stop-color="#eaffe8"/><stop offset="0.0173" stop-color="#dbffd7"/><stop offset="0.0293" stop-color="#c5ffc0"/><stop offset="0.0467" stop-color="#abffa3"/><stop offset="0.0733" stop-color="#8bff80"/><stop offset="0.1133" stop-color="#67ff58"/><stop offset="0.1733" stop-color="#41ff2e"/><stop offset="0.2533" stop-color="#20ff0a"/><stop offset="0.3600" stop-color="#04ff00"/><stop offset="0.5067" stop-color="#00ff00"/><stop offset="0.6933" stop-color="#00ff00"/><stop offset="1.0000" stop-color="#00ff00"/></linearGradient><linearGradient id="w107" gradientUnits="userSpaceOnUse" x1="1407.8" y1="465.6" x2="1375.1" y2="-283.7"><stop offset="0.0000" stop-color="#ffffff"/><stop offset="0.0040" stop-color="#f6fff5"/><stop offset="0.0093" stop-color="#ebffe8"/><stop offset="0.0173" stop-color="#dcffd7"/><stop offset="0.0293" stop-color="#c8ffbf"/><stop offset="0.0467" stop-color="#afffa2"/><stop offset="0.0733" stop-color="#90ff7f"/><stop offset="0.1133" stop-color="#6dff56"/><stop offset="0.1733" stop-color="#49ff2c"/><stop offset="0.2533" stop-color="#29ff07"/><stop offset="0.3600" stop-color="#0eff00"/><stop offset="0.5067" stop-color="#00ff00"/><stop offset="0.6933" stop-color="#00ff00"/><stop offset="1.0000" stop-color="#00ff00"/></linearGradient><linearGradient id="w108" gradientUnits="userSpaceOnUse" x1="1407.8" y1="465.6" x2="1407.8" y2="-284.4"><stop offset="0.0000" stop-color="#ffffff"/><stop offset="0.0040" stop-color="#f7fff5"/><stop offset="0.0093" stop-color="#ecffe8"/><stop offset="0.0173" stop-color="#deffd7"/><stop offset="0.0293" stop-color="#cbffbf"/><stop offset="0.0467" stop-color="#b3ffa2"/><stop offset="0.0733" stop-color="#95ff7e"/><stop offset="0.1133" stop-color="#74ff55"/><stop offset="0.1733" stop-color="#51ff2a"/><stop offset="0.2533" stop-color="#32ff04"/><stop offset="0.3600" stop-color="#18ff00"/><stop offset="0.5067" stop-color="#01ff00"/><stop offset="0.6933" stop-color="#00ff00"/><stop offset="1.0000" stop-color="#00ff00"/></linearGradient><linearGradient id="w109" gradientUnits="userSpaceOnUse" x1="1407.8" y1="465.6" x2="1440.5" y2="-283.7"><stop offset="0.0000" stop-color="#ffffff"/><stop offset="0.0040" stop-color="#f7fff5"/><stop offset="0.0093" stop-color="#edffe8"/><stop offset="0.0173" stop-color="#e0ffd7"/><stop offset="0.0293" stop-color="#cdffbf"/><stop offset="0.0467" stop-color="#b7ffa2"/><stop offset="0.0733" stop-color="#9bff7d"/><stop offset="0.1133" stop-color="#7bff54"/><stop offset="0.1733" stop-color="#59ff28"/><stop offset="0.2533" stop-color="#3bff02"/><stop offset="0.3600" stop-color="#22ff00"/><stop offset="0.5067" stop-color="#0cff00"/><stop offset="0.6933" stop-color="#00ff00"/><stop offset="1.0000" stop-color="#00ff00"/></linearGradient><linearGradient id="w110" gradientUnits="userSpaceOnUse" x1="1407.8" y1="465.6" x2="1473.2" y2="-281.6"><stop offset="0.0000" stop-color="#ffffff"/><stop offset="0.0040" stop-color="#f8fff5"/><stop offset="0.0093" stop-color="#eeffe8"/><stop offset="0.0173" stop-color="#e2ffd7"/><stop offset="0.0293" stop-color="#d0ffbf"/><stop offset="0.0467" stop-color="#bbffa1"/><stop offset="0.0733" stop-color="#a0ff7c"/><stop offset="0.1133" stop-color="#82ff52"/><stop offset="0.1733" stop-color="#61ff26"/><stop offset="0.2533" stop-color="#45ff00"/><stop offset="0.3600" stop-color="#2cff00"/><stop offset="0.5067" stop-color="#18ff00"/><stop offset="0.6933" stop-color="#07ff00"/><stop offset="1.0000" stop-color="#00ff00"/></linearGradient><linearGradient id="w111" gradientUnits="userSpaceOnUse" x1="1407.8" y1="465.6" x2="1505.7" y2="-278.0"><stop offset="0.0000" stop-color="#ffffff"/><stop offset="0.0040" stop-color="#f8fff5"/><stop offset="0.0093" stop-color="#f0ffe8"/><stop offset="0.0173" stop-color="#e4ffd7"/><stop offset="0.0293" stop-color="#d3ffbf"/><stop offset="0.0467" stop-color="#bfffa1"/><stop offset="0.0733" stop-color="#a6ff7c"/><stop offset="0.1133" stop-color="#89ff52"/><stop offset="0.1733" stop-color="#6aff25"/><stop offset="0.2533" stop-color="#4fff00"/><stop offset="0.3600" stop-color="#38ff00"/><stop offset="0.5067" stop-color="#23ff00"/><stop offset="0.6933" stop-color="#14ff00"/><stop offset="1.0000" stop-color="#05ff00"/></linearGradient><linearGradient id="w112" gradientUnits="userSpaceOnUse" x1="1407.8" y1="465.6" x2="1538.1" y2="-273.0"><stop offset="0.0000" stop-color="#ffffff"/><stop offset="0.0040" stop-color="#f9fff5"/><stop offset="0.0093" stop-color="#f1ffe8"/><stop offset="0.0173" stop-color="#e5ffd7"/><stop offset="0.0293" stop-color="#d6ffbf"/><stop offset="0.0467" stop-color="#c4ffa1"/><stop offset="0.0733" stop-color="#acff7c"/><stop offset="0.1133" stop-color="#91ff51"/><stop offset="0.1733" stop-color="#73ff23"/><stop offset="0.2533" stop-color="#5aff00"/><stop offset="0.3600" stop-color="#43ff00"/><stop offset="0.5067" stop-color="#30ff00"/><stop offset="0.6933" stop-color="#21ff00"/><stop offset="1.0000" stop-color="#12ff00"/></linearGradient><linearGradient id="w113" gradientUnits="userSpaceOnUse" x1="1407.8" y1="465.6" x2="1570.1" y2="-266.7"><stop offset="0.0000" stop-color="#ffffff"/><stop offset="0.0040" stop-color="#f9fff5"/><stop offset="0.0093" stop-color="#f2ffe9"/><stop offset="0.0173" stop-color="#e7ffd7"/><stop offset="0.0293" stop-color="#daffbf"/><stop offset="0.0467" stop-color="#c8ffa2"/><stop offset="0.0733" stop-color="#b2ff7c"/><stop offset="0.1133" stop-color="#98ff50"/><stop offset="0.1733" stop-color="#7dff22"/><stop offset="0.2533" stop-color="#65ff00"/><stop offset="0.3600" stop-color="#4fff00"/><stop offset="0.5067" stop-color="#3dff00"/><stop offset="0.6933" stop-color="#2eff00"/><stop offset="1.0000" stop-color="#21ff00"/></linearGradient><linearGradient id="w114" gradientUnits="userSpaceOnUse" x1="1407.8" y1="465.6" x2="1601.9" y2="-258.9"><stop offset="0.0000" stop-color="#ffffff"/><stop offset="0.0040" stop-color="#fafff5"/><stop offset="0.0093" stop-color="#f3ffe9"/><stop offset="0.0173" stop-color="#eaffd7"/><stop offset="0.0293" stop-color="#ddffc0"/><stop offset="0.0467" stop-color="#cdffa2"/><stop offset="0.0733" stop-color="#b8ff7c"/><stop offset="0.1133" stop-color="#a1ff50"/><stop offset="0.1733" stop-color="#87ff21"/><stop offset="0.2533" stop-color="#70ff00"/><stop offset="0.3600" stop-color="#5cff00"/><stop offset="0.5067" stop-color="#4aff00"/><stop offset="0.6933" stop-color="#3dff00"/><stop offset="1.0000" stop-color="#2fff00"/></linearGradient><linearGradient id="w115" gradientUnits="userSpaceOnUse" x1="1407.8" y1="465.6" x2="1633.3" y2="-249.7"><stop offset="0.0000" stop-color="#ffffff"/><stop offset="0.0040" stop-color="#fafff5"/><stop offset="0.0093" stop-color="#f4ffe9"/><stop offset="0.0173" stop-color="#ecffd8"/><stop offset="0.0293" stop-color="#e0ffc0"/><stop offset="0.0467" stop-color="#d2ffa2"/><stop offset="0.0733" stop-color="#bfff7c"/><stop offset="0.1133" stop-color="#a9ff50"/><stop offset="0.1733" stop-color="#91ff20"/><stop offset="0.2533" stop-color="#7cff00"/><stop offset="0.3600" stop-color="#69ff00"/><stop offset="0.5067" stop-color="#59ff00"/><stop offset="0.6933" stop-color="#4cff00"/><stop offset="1.0000" stop-color="#3fff00"/></linearGradient><linearGradient id="w116" gradientUnits="userSpaceOnUse" x1="1407.8" y1="465.6" x2="1664.3" y2="-239.2"><stop offset="0.0000" stop-color="#ffffff"/><stop offset="0.0040" stop-color="#fbfff5"/><stop offset="0.0093" stop-color="#f5ffe9"/><stop offset="0.0173" stop-color="#eeffd8"/><stop offset="0.0293" stop-color="#e4ffc1"/><stop offset="0.0467" stop-color="#d6ffa3"/><stop offset="0.0733" stop-color="#c6ff7d"/><stop offset="0.1133" stop-color="#b2ff50"/><stop offset="0.1733" stop-color="#9cff1f"/><stop offset="0.2533" stop-color="#89ff00"/><stop offset="0.3600" stop-color="#77ff00"/><stop offset="0.5067" stop-color="#68ff00"/><stop offset="0.6933" stop-color="#5cff00"/><stop offset="1.0000" stop-color="#50ff00"/></linearGradient><linearGradient id="w117" gradientUnits="userSpaceOnUse" x1="1407.8" y1="465.6" x2="1694.8" y2="-227.3"><stop offset="0.0000" stop-color="#ffffff"/><stop offset="0.0040" stop-color="#fbfff6"/><stop offset="0.0093" stop-color="#f7ffea"/><stop offset="0.0173" stop-color="#f0ffd9"/><stop offset="0.0293" stop-color="#e7ffc1"/><stop offset="0.0467" stop-color="#dcffa4"/><stop offset="0.0733" stop-color="#cdff7e"/><stop offset="0.1133" stop-color="#bbff50"/><stop offset="0.1733" stop-color="#a8ff1f"/><stop offset="0.2533" stop-color="#96ff00"/><stop offset="0.3600" stop-color="#86ff00"/><stop offset="0.5067" stop-color="#78ff00"/><stop offset="0.6933" stop-color="#6dff00"/><stop offset="1.0000" stop-color="#62ff00"/></linearGradient><linearGradient id="w118" gradientUnits="userSpaceOnUse" x1="1407.8" y1="465.6" x2="1724.8" y2="-214.2"><stop offset="0.0000" stop-color="#ffffff"/><stop offset="0.0040" stop-color="#fcfff6"/><stop offset="0.0093" stop-color="#f8ffea"/><stop offset="0.0173" stop-color="#f2ffd9"/><stop offset="0.0293" stop-color="#ebffc2"/><stop offset="0.0467" stop-color="#e1ffa5"/><stop offset="0.0733" stop-color="#d4ff7f"/><stop offset="0.1133" stop-color="#c5ff51"/><stop offset="0.1733" stop-color="#b4ff1f"/><stop offset="0.2533" stop-color="#a4ff00"/><stop offset="0.3600" stop-color="#96ff00"/><stop offset="0.5067" stop-color="#89ff00"/><stop offset="0.6933" stop-color="#7fff00"/><stop offset="1.0000" stop-color="#75ff00"/></linearGradient><linearGradient id="w119" gradientUnits="userSpaceOnUse" x1="1407.8" y1="465.6" x2="1754.1" y2="-199.7"><stop offset="0.0000" stop-color="#ffffff"/><stop offset="0.0040" stop-color="#fcfff6"/><stop offset="0.0093" stop-color="#f9ffea"/><stop offset="0.0173" stop-color="#f5ffda"/><stop offset="0.0293" stop-color="#eeffc3"/><stop offset="0.0467" stop-color="#e6ffa6"/><stop offset="0.0733" stop-color="#dbff80"/><stop offset="0.1133" stop-color="#ceff52"/><stop offset="0.1733" stop-color="#c0ff1f"/><stop offset="0.2533" stop-color="#b3ff00"/><stop offset="0.3600" stop-color="#a6ff00"/><stop offset="0.5067" stop-color="#9bff00"/><stop offset="0.6933" stop-color="#93ff00"/><stop offset="1.0000" stop-color="#8aff00"/></linearGradient><linearGradient id="w120" gradientUnits="userSpaceOnUse" x1="1407.8" y1="465.6" x2="1782.8" y2="-184.0"><stop offset="0.0000" stop-color="#ffffff"/><stop offset="0.0040" stop-color="#fdfff6"/><stop offset="0.0093" stop-color="#faffeb"/><stop offset="0.0173" stop-color="#f7ffdb"/><stop offset="0.0293" stop-color="#f2ffc4"/><stop offset="0.0467" stop-color="#ebffa7"/><stop offset="0.0733" stop-color="#e3ff81"/><stop offset="0.1133" stop-color="#d9ff53"/><stop offset="0.1733" stop-color="#cdff1f"/><stop offset="0.2533" stop-color="#c2ff00"/><stop offset="0.3600" stop-color="#b8ff00"/><stop offset="0.5067" stop-color="#afff00"/><stop offset="0.6933" stop-color="#a8ff00"/><stop offset="1.0000" stop-color="#a1ff00"/></linearGradient><linearGradient id="w121" gradientUnits="userSpaceOnUse" x1="1407.8" y1="465.6" x2="1810.8" y2="-167.0"><stop offset="0.0000" stop-color="#ffffff"/><stop offset="0.0040" stop-color="#fefff6"/><stop offset="0.0093" stop-color="#fcffeb"/><stop offset="0.0173" stop-color="#f9ffdb"/><stop offset="0.0293" stop-color="#f6ffc5"/><stop offset="0.0467" stop-color="#f1ffa9"/><stop offset="0.0733" stop-color="#ebff83"/><stop offset="0.1133" stop-color="#e3ff54"/><stop offset="0.1733" stop-color="#dbff1f"/><stop offset="0.2533" stop-color="#d3ff00"/><stop offset="0.3600" stop-color="#cbff00"/><stop offset="0.5067" stop-color="#c4ff00"/><stop offset="0.6933" stop-color="#bfff00"/><stop offset="1.0000" stop-color="#b9ff00"/></linearGradient><linearGradient id="w122" gradientUnits="userSpaceOnUse" x1="1407.8" y1="465.6" x2="1838.0" y2="-148.8"><stop offset="0.0000" stop-color="#ffffff"/><stop offset="0.0040" stop-color="#fefff7"/><stop offset="0.0093" stop-color="#fdffec"/><stop offset="0.0173" stop-color="#fcffdc"/><stop offset="0.0293" stop-color="#faffc6"/><stop offset="0.0467" stop-color="#f7ffaa"/><stop offset="0.0733" stop-color="#f3ff84"/><stop offset="0.1133" stop-color="#efff56"/><stop offset="0.1733" stop-color="#e9ff20"/><stop offset="0.2533" stop-color="#e4ff00"/><stop offset="0.3600" stop-color="#e0ff00"/><stop offset="0.5067" stop-color="#dbff00"/><stop offset="0.6933" stop-color="#d8ff00"/><stop offset="1.0000" stop-color="#d4ff00"/></linearGradient><linearGradient id="w123" gradientUnits="userSpaceOnUse" x1="1407.8" y1="465.6" x2="1864.4" y2="-129.4"><stop offset="0.0000" stop-color="#ffffff"/><stop offset="0.0040" stop-color="#fffff7"/><stop offset="0.0093" stop-color="#feffec"/><stop offset="0.0173" stop-color="#feffdd"/><stop offset="0.0293" stop-color="#fdffc8"/><stop offset="0.0467" stop-color="#fdffac"/><stop offset="0.0733" stop-color="#fcff86"/><stop offset="0.1133" stop-color="#faff58"/><stop offset="0.1733" stop-color="#f9ff21"/><stop offset="0.2533" stop-color="#f7ff00"/><stop offset="0.3600" stop-color="#f6ff00"/><stop offset="0.5067" stop-color="#f4ff00"/><stop offset="0.6933" stop-color="#f3ff00"/><stop offset="1.0000" stop-color="#f2ff00"/></linearGradient><linearGradient id="w124" gradientUnits="userSpaceOnUse" x1="1407.8" y1="465.6" x2="1889.9" y2="-109.0"><stop offset="0.0000" stop-color="#ffffff"/><stop offset="0.0040" stop-color="#fffff7"/><stop offset="0.0093" stop-color="#fffeec"/><stop offset="0.0173" stop-color="#fffedd"/><stop offset="0.0293" stop-color="#fffdc7"/><stop offset="0.0467" stop-color="#fffbab"/><stop offset="0.0733" stop-color="#fffa86"/><stop offset="0.1133" stop-color="#fff857"/><stop offset="0.1733" stop-color="#fff621"/><stop offset="0.2533" stop-color="#fff300"/><stop offset="0.3600" stop-color="#fff100"/><stop offset="0.5067" stop-color="#ffef00"/><stop offset="0.6933" stop-color="#ffee00"/><stop offset="1.0000" stop-color="#ffec00"/></linearGradient><linearGradient id="w125" gradientUnits="userSpaceOnUse" x1="1407.8" y1="465.6" x2="1914.5" y2="-87.4"><stop offset="0.0000" stop-color="#ffffff"/><stop offset="0.0040" stop-color="#fffef6"/><stop offset="0.0093" stop-color="#fffdeb"/><stop offset="0.0173" stop-color="#fffbdc"/><stop offset="0.0293" stop-color="#fff9c6"/><stop offset="0.0467" stop-color="#fff6aa"/><stop offset="0.0733" stop-color="#fff284"/><stop offset="0.1133" stop-color="#ffed56"/><stop offset="0.1733" stop-color="#ffe721"/><stop offset="0.2533" stop-color="#ffe100"/><stop offset="0.3600" stop-color="#ffdc00"/><stop offset="0.5067" stop-color="#ffd800"/><stop offset="0.6933" stop-color="#ffd400"/><stop offset="1.0000" stop-color="#ffd000"/></linearGradient><linearGradient id="w126" gradientUnits="userSpaceOnUse" x1="1407.8" y1="465.6" x2="1938.1" y2="-64.8"><stop offset="0.0000" stop-color="#ffffff"/><stop offset="0.0040" stop-color="#fffdf6"/><stop offset="0.0093" stop-color="#fffceb"/><stop offset="0.0173" stop-color="#fff9db"/><stop offset="0.0293" stop-color="#fff5c5"/><stop offset="0.0467" stop-color="#fff0a8"/><stop offset="0.0733" stop-color="#ffea82"/><stop offset="0.1133" stop-color="#ffe254"/><stop offset="0.1733" stop-color="#ffd920"/><stop offset="0.2533" stop-color="#ffd100"/><stop offset="0.3600" stop-color="#ffc900"/><stop offset="0.5067" stop-color="#ffc200"/><stop offset="0.6933" stop-color="#ffbc00"/><stop offset="1.0000" stop-color="#ffb700"/></linearGradient><linearGradient id="w127" gradientUnits="userSpaceOnUse" x1="1407.8" y1="465.6" x2="1960.8" y2="-41.1"><stop offset="0.0000" stop-color="#ffffff"/><stop offset="0.0040" stop-color="#fffdf6"/><stop offset="0.0093" stop-color="#fffaea"/><stop offset="0.0173" stop-color="#fff6da"/><stop offset="0.0293" stop-color="#fff1c3"/><stop offset="0.0467" stop-color="#ffeba6"/><stop offset="0.0733" stop-color="#ffe280"/><stop offset="0.1133" stop-color="#ffd853"/><stop offset="0.1733" stop-color="#ffcc21"/><stop offset="0.2533" stop-color="#ffc100"/><stop offset="0.3600" stop-color="#ffb700"/><stop offset="0.5067" stop-color="#ffaf00"/><stop offset="0.6933" stop-color="#ffa800"/><stop offset="1.0000" stop-color="#ffa100"/></linearGradient><linearGradient id="w128" gradientUnits="userSpaceOnUse" x1="1407.8" y1="465.6" x2="1982.3" y2="-16.5"><stop offset="0.0000" stop-color="#ffffff"/><stop offset="0.0040" stop-color="#fffcf6"/><stop offset="0.0093" stop-color="#fff9ea"/><stop offset="0.0173" stop-color="#fff4d9"/><stop offset="0.0293" stop-color="#ffeec2"/><stop offset="0.0467" stop-color="#ffe5a5"/><stop offset="0.0733" stop-color="#ffdb7f"/><stop offset="0.1133" stop-color="#ffce52"/><stop offset="0.1733" stop-color="#ffc021"/><stop offset="0.2533" stop-color="#ffb300"/><stop offset="0.3600" stop-color="#ffa700"/><stop offset="0.5067" stop-color="#ff9d00"/><stop offset="0.6933" stop-color="#ff9500"/><stop offset="1.0000" stop-color="#ff8d00"/></linearGradient><linearGradient id="w129" gradientUnits="userSpaceOnUse" x1="1407.8" y1="465.6" x2="2002.8" y2="9.0"><stop offset="0.0000" stop-color="#ffffff"/><stop offset="0.0040" stop-color="#fffcf5"/><stop offset="0.0093" stop-color="#fff8e9"/><stop offset="0.0173" stop-color="#fff2d8"/><stop offset="0.0293" stop-color="#ffeac1"/><stop offset="0.0467" stop-color="#ffe0a4"/><stop offset="0.0733" stop-color="#ffd37e"/><stop offset="0.1133" stop-color="#ffc552"/><stop offset="0.1733" stop-color="#ffb421"/><stop offset="0.2533" stop-color="#ffa500"/><stop offset="0.3600" stop-color="#ff9800"/><stop offset="0.5067" stop-color="#ff8d00"/><stop offset="0.6933" stop-color="#ff8400"/><stop offset="1.0000" stop-color="#ff7b00"/></linearGradient><linearGradient id="w130" gradientUnits="userSpaceOnUse" x1="1407.8" y1="465.6" x2="2022.2" y2="35.4"><stop offset="0.0000" stop-color="#ffffff"/><stop offset="0.0040" stop-color="#fffbf5"/><stop offset="0.0093" stop-color="#fff6e9"/><stop offset="0.0173" stop-color="#fff0d8"/><stop offset="0.0293" stop-color="#ffe7c0"/><stop offset="0.0467" stop-color="#ffdba3"/><stop offset="0.0733" stop-color="#ffcd7d"/><stop offset="0.1133" stop-color="#ffbc51"/><stop offset="0.1733" stop-color="#ffa922"/><stop offset="0.2533" stop-color="#ff9900"/><stop offset="0.3600" stop-color="#ff8a00"/><stop offset="0.5067" stop-color="#ff7e00"/><stop offset="0.6933" stop-color="#ff7400"/><stop offset="1.0000" stop-color="#ff6a00"/></linearGradient><linearGradient id="w131" gradientUnits="userSpaceOnUse" x1="1407.8" y1="465.6" x2="2040.4" y2="62.6"><stop offset="0.0000" stop-color="#ffffff"/><stop offset="0.0040" stop-color="#fffbf5"/><stop offset="0.0093" stop-color="#fff5e9"/><stop offset="0.0173" stop-color="#ffeed7"/><stop offset="0.0293" stop-color="#ffe3bf"/><stop offset="0.0467" stop-color="#ffd6a2"/><stop offset="0.0733" stop-color="#ffc67c"/><stop offset="0.1133" stop-color="#ffb351"/><stop offset="0.1733" stop-color="#ff9f23"/><stop offset="0.2533" stop-color="#ff8d00"/><stop offset="0.3600" stop-color="#ff7d00"/><stop offset="0.5067" stop-color="#ff7000"/><stop offset="0.6933" stop-color="#ff6500"/><stop offset="1.0000" stop-color="#ff5b00"/></linearGradient><linearGradient id="w132" gradientUnits="userSpaceOnUse" x1="1407.8" y1="465.6" x2="2057.3" y2="90.6"><stop offset="0.0000" stop-color="#ffffff"/><stop offset="0.0040" stop-color="#fffaf5"/><stop offset="0.0093" stop-color="#fff4e8"/><stop offset="0.0173" stop-color="#ffebd7"/><stop offset="0.0293" stop-color="#ffe0bf"/><stop offset="0.0467" stop-color="#ffd2a1"/><stop offset="0.0733" stop-color="#ffc07c"/><stop offset="0.1133" stop-color="#ffab51"/><stop offset="0.1733" stop-color="#ff9524"/><stop offset="0.2533" stop-color="#ff8200"/><stop offset="0.3600" stop-color="#ff7100"/><stop offset="0.5067" stop-color="#ff6300"/><stop offset="0.6933" stop-color="#ff5800"/><stop offset="1.0000" stop-color="#ff4d00"/></linearGradient><linearGradient id="w133" gradientUnits="userSpaceOnUse" x1="1407.8" y1="465.6" x2="2073.1" y2="119.3"><stop offset="0.0000" stop-color="#ffffff"/><stop offset="0.0040" stop-color="#fffaf5"/><stop offset="0.0093" stop-color="#fff3e8"/><stop offset="0.0173" stop-color="#ffe9d6"/><stop offset="0.0293" stop-color="#ffddbe"/><stop offset="0.0467" stop-color="#ffcda0"/><stop offset="0.0733" stop-color="#ffba7b"/><stop offset="0.1133" stop-color="#ffa351"/><stop offset="0.1733" stop-color="#ff8c25"/><stop offset="0.2533" stop-color="#ff7800"/><stop offset="0.3600" stop-color="#ff6600"/><stop offset="0.5067" stop-color="#ff5700"/><stop offset="0.6933" stop-color="#ff4b00"/><stop offset="1.0000" stop-color="#ff4100"/></linearGradient><linearGradient id="w134" gradientUnits="userSpaceOnUse" x1="1407.8" y1="465.6" x2="2087.5" y2="148.6"><stop offset="0.0000" stop-color="#ffffff"/><stop offset="0.0040" stop-color="#fff9f5"/><stop offset="0.0093" stop-color="#fff2e8"/><stop offset="0.0173" stop-color="#ffe7d6"/><stop offset="0.0293" stop-color="#ffdabe"/><stop offset="0.0467" stop-color="#ffc9a0"/><stop offset="0.0733" stop-color="#ffb47b"/><stop offset="0.1133" stop-color="#ff9c52"/><stop offset="0.1733" stop-color="#ff8327"/><stop offset="0.2533" stop-color="#ff6e01"/><stop offset="0.3600" stop-color="#ff5b00"/><stop offset="0.5067" stop-color="#ff4c00"/><stop offset="0.6933" stop-color="#ff4000"/><stop offset="1.0000" stop-color="#ff3400"/></linearGradient><linearGradient id="w135" gradientUnits="userSpaceOnUse" x1="1407.8" y1="465.6" x2="2100.7" y2="178.6"><stop offset="0.0000" stop-color="#ffffff"/><stop offset="0.0040" stop-color="#fff9f5"/><stop offset="0.0093" stop-color="#fff1e7"/><stop offset="0.0173" stop-color="#ffe5d5"/><stop offset="0.0293" stop-color="#ffd7bd"/><stop offset="0.0467" stop-color="#ffc4a0"/><stop offset="0.0733" stop-color="#ffae7b"/><stop offset="0.1133" stop-color="#ff9552"/><stop offset="0.1733" stop-color="#ff7b28"/><stop offset="0.2533" stop-color="#ff6403"/><stop offset="0.3600" stop-color="#ff5100"/><stop offset="0.5067" stop-color="#ff4100"/><stop offset="0.6933" stop-color="#ff3500"/><stop offset="1.0000" stop-color="#ff2900"/></linearGradient><linearGradient id="w136" gradientUnits="userSpaceOnUse" x1="1407.8" y1="465.6" x2="2112.6" y2="209.1"><stop offset="0.0000" stop-color="#ffffff"/><stop offset="0.0040" stop-color="#fff8f4"/><stop offset="0.0093" stop-color="#ffefe7"/><stop offset="0.0173" stop-color="#ffe4d5"/><stop offset="0.0293" stop-color="#ffd4bd"/><stop offset="0.0467" stop-color="#ffc0a0"/><stop offset="0.0733" stop-color="#ffa97b"/><stop offset="0.1133" stop-color="#ff8e53"/><stop offset="0.1733" stop-color="#ff732a"/><stop offset="0.2533" stop-color="#ff5c06"/><stop offset="0.3600" stop-color="#ff4800"/><stop offset="0.5067" stop-color="#ff3700"/><stop offset="0.6933" stop-color="#ff2a00"/><stop offset="1.0000" stop-color="#ff1f00"/></linearGradient><linearGradient id="w137" gradientUnits="userSpaceOnUse" x1="1407.8" y1="465.6" x2="2123.1" y2="240.0"><stop offset="0.0000" stop-color="#ffffff"/><stop offset="0.0040" stop-color="#fff8f4"/><stop offset="0.0093" stop-color="#ffeee7"/><stop offset="0.0173" stop-color="#ffe2d5"/><stop offset="0.0293" stop-color="#ffd1bd"/><stop offset="0.0467" stop-color="#ffbca0"/><stop offset="0.0733" stop-color="#ffa37c"/><stop offset="0.1133" stop-color="#ff8854"/><stop offset="0.1733" stop-color="#ff6b2b"/><stop offset="0.2533" stop-color="#ff5309"/><stop offset="0.3600" stop-color="#ff3f00"/><stop offset="0.5067" stop-color="#ff2e00"/><stop offset="0.6933" stop-color="#ff2100"/><stop offset="1.0000" stop-color="#ff1400"/></linearGradient><linearGradient id="w138" gradientUnits="userSpaceOnUse" x1="1407.8" y1="465.6" x2="2132.3" y2="271.5"><stop offset="0.0000" stop-color="#ffffff"/><stop offset="0.0040" stop-color="#fff7f4"/><stop offset="0.0093" stop-color="#ffede7"/><stop offset="0.0173" stop-color="#ffe0d5"/><stop offset="0.0293" stop-color="#ffcebd"/><stop offset="0.0467" stop-color="#ffb9a0"/><stop offset="0.0733" stop-color="#ff9e7c"/><stop offset="0.1133" stop-color="#ff8255"/><stop offset="0.1733" stop-color="#ff642d"/><stop offset="0.2533" stop-color="#ff4b0b"/><stop offset="0.3600" stop-color="#ff3600"/><stop offset="0.5067" stop-color="#ff2500"/><stop offset="0.6933" stop-color="#ff1700"/><stop offset="1.0000" stop-color="#ff0b00"/></linearGradient><linearGradient id="w139" gradientUnits="userSpaceOnUse" x1="1407.8" y1="465.6" x2="2140.0" y2="303.2"><stop offset="0.0000" stop-color="#ffffff"/><stop offset="0.0040" stop-color="#fff7f4"/><stop offset="0.0093" stop-color="#ffece7"/><stop offset="0.0173" stop-color="#ffded5"/><stop offset="0.0293" stop-color="#ffccbd"/><stop offset="0.0467" stop-color="#ffb5a0"/><stop offset="0.0733" stop-color="#ff9a7d"/><stop offset="0.1133" stop-color="#ff7c56"/><stop offset="0.1733" stop-color="#ff5d2f"/><stop offset="0.2533" stop-color="#ff430e"/><stop offset="0.3600" stop-color="#ff2e00"/><stop offset="0.5067" stop-color="#ff1c00"/><stop offset="0.6933" stop-color="#ff0e00"/><stop offset="1.0000" stop-color="#ff0200"/></linearGradient><linearGradient id="w140" gradientUnits="userSpaceOnUse" x1="1407.8" y1="465.6" x2="2146.4" y2="335.3"><stop offset="0.0000" stop-color="#ffffff"/><stop offset="0.0040" stop-color="#fff6f4"/><stop offset="0.0093" stop-color="#ffebe7"/><stop offset="0.0173" stop-color="#ffddd5"/><stop offset="0.0293" stop-color="#ffc9bd"/><stop offset="0.0467" stop-color="#ffb1a0"/><stop offset="0.0733" stop-color="#ff957e"/><stop offset="0.1133" stop-color="#ff7658"/><stop offset="0.1733" stop-color="#ff5731"/><stop offset="0.2533" stop-color="#ff3c11"/><stop offset="0.3600" stop-color="#ff2600"/><stop offset="0.5067" stop-color="#ff1400"/><stop offset="0.6933" stop-color="#ff0600"/><stop offset="1.0000" stop-color="#ff0000"/></linearGradient><linearGradient id="w141" gradientUnits="userSpaceOnUse" x1="1407.8" y1="465.6" x2="2151.4" y2="367.7"><stop offset="0.0000" stop-color="#ffffff"/><stop offset="0.0040" stop-color="#fff6f4"/><stop offset="0.0093" stop-color="#ffeae7"/><stop offset="0.0173" stop-color="#ffdbd5"/><stop offset="0.0293" stop-color="#ffc7bd"/><stop offset="0.0467" stop-color="#ffaea1"/><stop offset="0.0733" stop-color="#ff917f"/><stop offset="0.1133" stop-color="#ff7059"/><stop offset="0.1733" stop-color="#ff5034"/><stop offset="0.2533" stop-color="#ff3514"/><stop offset="0.3600" stop-color="#ff1e00"/><stop offset="0.5067" stop-color="#ff0c00"/><stop offset="0.6933" stop-color="#ff0000"/><stop offset="1.0000" stop-color="#ff0000"/></linearGradient><linearGradient id="w142" gradientUnits="userSpaceOnUse" x1="1407.8" y1="465.6" x2="2155.0" y2="400.2"><stop offset="0.0000" stop-color="#ffffff"/><stop offset="0.0040" stop-color="#fff5f4"/><stop offset="0.0093" stop-color="#ffeae7"/><stop offset="0.0173" stop-color="#ffd9d5"/><stop offset="0.0293" stop-color="#ffc4be"/><stop offset="0.0467" stop-color="#ffaba2"/><stop offset="0.0733" stop-color="#ff8c80"/><stop offset="0.1133" stop-color="#ff6b5b"/><stop offset="0.1733" stop-color="#ff4a36"/><stop offset="0.2533" stop-color="#ff2e17"/><stop offset="0.3600" stop-color="#ff1700"/><stop offset="0.5067" stop-color="#ff0400"/><stop offset="0.6933" stop-color="#ff0000"/><stop offset="1.0000" stop-color="#ff0000"/></linearGradient><linearGradient id="w143" gradientUnits="userSpaceOnUse" x1="1407.8" y1="465.6" x2="2157.1" y2="432.9"><stop offset="0.0000" stop-color="#ffffff"/><stop offset="0.0040" stop-color="#fff5f4"/><stop offset="0.0093" stop-color="#ffe9e7"/><stop offset="0.0173" stop-color="#ffd8d6"/><stop offset="0.0293" stop-color="#ffc2be"/><stop offset="0.0467" stop-color="#ffa8a2"/><stop offset="0.0733" stop-color="#ff8881"/><stop offset="0.1133" stop-color="#ff665d"/><stop offset="0.1733" stop-color="#ff4439"/><stop offset="0.2533" stop-color="#ff281a"/><stop offset="0.3600" stop-color="#ff1001"/><stop offset="0.5067" stop-color="#ff0000"/><stop offset="0.6933" stop-color="#ff0000"/><stop offset="1.0000" stop-color="#ff0000"/></linearGradient><g id="wedges" shape-rendering="crispEdges"><path d="M1407.8 465.6L2308 443L2308 488Z" fill="url(#w0)"/><path d="M1407.8 465.6L2308 482L2306 528Z" fill="url(#w1)"/><path d="M1407.8 465.6L2306 521L2302 567Z" fill="url(#w2)"/><path d="M1407.8 465.6L2303 560L2297 606Z" fill="url(#w3)"/><path d="M1407.8 465.6L2298 599L2290 644Z" fill="url(#w4)"/><path d="M1407.8 465.6L2291 638L2281 683Z" fill="url(#w5)"/><path d="M1407.8 465.6L2283 676L2271 720Z" fill="url(#w6)"/><path d="M1407.8 465.6L2273 714L2259 758Z" fill="url(#w7)"/><path d="M1407.8 465.6L2261 752L2245 795Z" fill="url(#w8)"/><path d="M1407.8 465.6L2248 789L2230 831Z" fill="url(#w9)"/><path d="M1407.8 465.6L2233 825L2214 866Z" fill="url(#w10)"/><path d="M1407.8 465.6L2216 861L2195 901Z" fill="url(#w11)"/><path d="M1407.8 465.6L2198 896L2176 935Z" fill="url(#w12)"/><path d="M1407.8 465.6L2179 930L2154 968Z" fill="url(#w13)"/><path d="M1407.8 465.6L2158 963L2132 1000Z" fill="url(#w14)"/><path d="M1407.8 465.6L2135 995L2108 1031Z" fill="url(#w15)"/><path d="M1407.8 465.6L2112 1026L2082 1061Z" fill="url(#w16)"/><path d="M1407.8 465.6L2087 1057L2056 1090Z" fill="url(#w17)"/><path d="M1407.8 465.6L2060 1086L2028 1118Z" fill="url(#w18)"/><path d="M1407.8 465.6L2032 1114L1999 1144Z" fill="url(#w19)"/><path d="M1407.8 465.6L2004 1140L1969 1169Z" fill="url(#w20)"/><path d="M1407.8 465.6L1974 1165L1937 1193Z" fill="url(#w21)"/><path d="M1407.8 465.6L1943 1190L1905 1216Z" fill="url(#w22)"/><path d="M1407.8 465.6L1910 1212L1872 1237Z" fill="url(#w23)"/><path d="M1407.8 465.6L1877 1233L1838 1256Z" fill="url(#w24)"/><path d="M1407.8 465.6L1843 1253L1803 1274Z" fill="url(#w25)"/><path d="M1407.8 465.6L1809 1271L1767 1291Z" fill="url(#w26)"/><path d="M1407.8 465.6L1773 1288L1731 1306Z" fill="url(#w27)"/><path d="M1407.8 465.6L1737 1303L1694 1319Z" fill="url(#w28)"/><path d="M1407.8 465.6L1700 1317L1657 1330Z" fill="url(#w29)"/><path d="M1407.8 465.6L1663 1329L1619 1341Z" fill="url(#w30)"/><path d="M1407.8 465.6L1625 1339L1580 1349Z" fill="url(#w31)"/><path d="M1407.8 465.6L1586 1348L1542 1356Z" fill="url(#w32)"/><path d="M1407.8 465.6L1548 1355L1503 1361Z" fill="url(#w33)"/><path d="M1407.8 465.6L1509 1360L1464 1364Z" fill="url(#w34)"/><path d="M1407.8 465.6L1470 1363L1424 1365Z" fill="url(#w35)"/><path d="M1407.8 465.6L1431 1365L1385 1365Z" fill="url(#w36)"/><path d="M1407.8 465.6L1391 1365L1346 1363Z" fill="url(#w37)"/><path d="M1407.8 465.6L1352 1364L1307 1360Z" fill="url(#w38)"/><path d="M1407.8 465.6L1313 1361L1268 1355Z" fill="url(#w39)"/><path d="M1407.8 465.6L1274 1356L1229 1348Z" fill="url(#w40)"/><path d="M1407.8 465.6L1235 1349L1191 1339Z" fill="url(#w41)"/><path d="M1407.8 465.6L1197 1341L1153 1329Z" fill="url(#w42)"/><path d="M1407.8 465.6L1159 1330L1116 1317Z" fill="url(#w43)"/><path d="M1407.8 465.6L1121 1319L1079 1303Z" fill="url(#w44)"/><path d="M1407.8 465.6L1085 1306L1042 1288Z" fill="url(#w45)"/><path d="M1407.8 465.6L1048 1291L1007 1271Z" fill="url(#w46)"/><path d="M1407.8 465.6L1013 1274L972 1253Z" fill="url(#w47)"/><path d="M1407.8 465.6L978 1256L938 1233Z" fill="url(#w48)"/><path d="M1407.8 465.6L944 1237L905 1212Z" fill="url(#w49)"/><path d="M1407.8 465.6L910 1216L873 1190Z" fill="url(#w50)"/><path d="M1407.8 465.6L878 1193L842 1165Z" fill="url(#w51)"/><path d="M1407.8 465.6L847 1169L812 1140Z" fill="url(#w52)"/><path d="M1407.8 465.6L817 1144L783 1114Z" fill="url(#w53)"/><path d="M1407.8 465.6L788 1118L756 1086Z" fill="url(#w54)"/><path d="M1407.8 465.6L760 1090L729 1057Z" fill="url(#w55)"/><path d="M1407.8 465.6L733 1061L704 1026Z" fill="url(#w56)"/><path d="M1407.8 465.6L708 1031L680 995Z" fill="url(#w57)"/><path d="M1407.8 465.6L684 1000L658 963Z" fill="url(#w58)"/><path d="M1407.8 465.6L661 968L637 930Z" fill="url(#w59)"/><path d="M1407.8 465.6L640 935L617 896Z" fill="url(#w60)"/><path d="M1407.8 465.6L620 901L599 861Z" fill="url(#w61)"/><path d="M1407.8 465.6L602 866L583 825Z" fill="url(#w62)"/><path d="M1407.8 465.6L585 831L568 789Z" fill="url(#w63)"/><path d="M1407.8 465.6L570 795L555 752Z" fill="url(#w64)"/><path d="M1407.8 465.6L557 758L543 714Z" fill="url(#w65)"/><path d="M1407.8 465.6L545 720L533 676Z" fill="url(#w66)"/><path d="M1407.8 465.6L534 683L524 638Z" fill="url(#w67)"/><path d="M1407.8 465.6L526 644L518 599Z" fill="url(#w68)"/><path d="M1407.8 465.6L519 606L513 560Z" fill="url(#w69)"/><path d="M1407.8 465.6L514 567L510 521Z" fill="url(#w70)"/><path d="M1407.8 465.6L510 528L508 482Z" fill="url(#w71)"/><path d="M1407.8 465.6L508 488L508 443Z" fill="url(#w72)"/><path d="M1407.8 465.6L508 449L510 404Z" fill="url(#w73)"/><path d="M1407.8 465.6L510 410L514 364Z" fill="url(#w74)"/><path d="M1407.8 465.6L513 371L519 326Z" fill="url(#w75)"/><path d="M1407.8 465.6L518 332L526 287Z" fill="url(#w76)"/><path d="M1407.8 465.6L524 293L534 249Z" fill="url(#w77)"/><path d="M1407.8 465.6L533 255L545 211Z" fill="url(#w78)"/><path d="M1407.8 465.6L543 217L557 173Z" fill="url(#w79)"/><path d="M1407.8 465.6L555 179L570 136Z" fill="url(#w80)"/><path d="M1407.8 465.6L568 142L585 100Z" fill="url(#w81)"/><path d="M1407.8 465.6L583 106L602 65Z" fill="url(#w82)"/><path d="M1407.8 465.6L599 70L620 30Z" fill="url(#w83)"/><path d="M1407.8 465.6L617 35L640 -4Z" fill="url(#w84)"/><path d="M1407.8 465.6L637 1L661 -37Z" fill="url(#w85)"/><path d="M1407.8 465.6L658 -32L684 -69Z" fill="url(#w86)"/><path d="M1407.8 465.6L680 -64L708 -100Z" fill="url(#w87)"/><path d="M1407.8 465.6L704 -95L733 -130Z" fill="url(#w88)"/><path d="M1407.8 465.6L729 -125L760 -159Z" fill="url(#w89)"/><path d="M1407.8 465.6L756 -155L788 -187Z" fill="url(#w90)"/><path d="M1407.8 465.6L783 -182L817 -213Z" fill="url(#w91)"/><path d="M1407.8 465.6L812 -209L847 -238Z" fill="url(#w92)"/><path d="M1407.8 465.6L842 -234L878 -262Z" fill="url(#w93)"/><path d="M1407.8 465.6L873 -258L910 -284Z" fill="url(#w94)"/><path d="M1407.8 465.6L905 -281L944 -305Z" fill="url(#w95)"/><path d="M1407.8 465.6L938 -302L978 -325Z" fill="url(#w96)"/><path d="M1407.8 465.6L972 -322L1013 -343Z" fill="url(#w97)"/><path d="M1407.8 465.6L1007 -340L1048 -359Z" fill="url(#w98)"/><path d="M1407.8 465.6L1042 -357L1085 -374Z" fill="url(#w99)"/><path d="M1407.8 465.6L1079 -372L1121 -388Z" fill="url(#w100)"/><path d="M1407.8 465.6L1116 -386L1159 -399Z" fill="url(#w101)"/><path d="M1407.8 465.6L1153 -398L1197 -409Z" fill="url(#w102)"/><path d="M1407.8 465.6L1191 -408L1235 -418Z" fill="url(#w103)"/><path d="M1407.8 465.6L1229 -417L1274 -424Z" fill="url(#w104)"/><path d="M1407.8 465.6L1268 -423L1313 -429Z" fill="url(#w105)"/><path d="M1407.8 465.6L1307 -429L1352 -433Z" fill="url(#w106)"/><path d="M1407.8 465.6L1346 -432L1391 -434Z" fill="url(#w107)"/><path d="M1407.8 465.6L1385 -434L1431 -434Z" fill="url(#w108)"/><path d="M1407.8 465.6L1424 -434L1470 -432Z" fill="url(#w109)"/><path d="M1407.8 465.6L1464 -433L1509 -429Z" fill="url(#w110)"/><path d="M1407.8 465.6L1503 -429L1548 -423Z" fill="url(#w111)"/><path d="M1407.8 465.6L1542 -424L1586 -417Z" fill="url(#w112)"/><path d="M1407.8 465.6L1580 -418L1625 -408Z" fill="url(#w113)"/><path d="M1407.8 465.6L1619 -409L1663 -398Z" fill="url(#w114)"/><path d="M1407.8 465.6L1657 -399L1700 -386Z" fill="url(#w115)"/><path d="M1407.8 465.6L1694 -388L1737 -372Z" fill="url(#w116)"/><path d="M1407.8 465.6L1731 -374L1773 -357Z" fill="url(#w117)"/><path d="M1407.8 465.6L1767 -359L1809 -340Z" fill="url(#w118)"/><path d="M1407.8 465.6L1803 -343L1843 -322Z" fill="url(#w119)"/><path d="M1407.8 465.6L1838 -325L1877 -302Z" fill="url(#w120)"/><path d="M1407.8 465.6L1872 -305L1910 -281Z" fill="url(#w121)"/><path d="M1407.8 465.6L1905 -284L1943 -258Z" fill="url(#w122)"/><path d="M1407.8 465.6L1937 -262L1974 -234Z" fill="url(#w123)"/><path d="M1407.8 465.6L1969 -238L2004 -209Z" fill="url(#w124)"/><path d="M1407.8 465.6L1999 -213L2032 -182Z" fill="url(#w125)"/><path d="M1407.8 465.6L2028 -187L2060 -155Z" fill="url(#w126)"/><path d="M1407.8 465.6L2056 -159L2087 -125Z" fill="url(#w127)"/><path d="M1407.8 465.6L2082 -130L2112 -95Z" fill="url(#w128)"/><path d="M1407.8 465.6L2108 -100L2135 -64Z" fill="url(#w129)"/><path d="M1407.8 465.6L2132 -69L2158 -32Z" fill="url(#w130)"/><path d="M1407.8 465.6L2154 -37L2179 1Z" fill="url(#w131)"/><path d="M1407.8 465.6L2176 -4L2198 35Z" fill="url(#w132)"/><path d="M1407.8 465.6L2195 30L2216 70Z" fill="url(#w133)"/><path d="M1407.8 465.6L2214 65L2233 106Z" fill="url(#w134)"/><path d="M1407.8 465.6L2230 100L2248 142Z" fill="url(#w135)"/><path d="M1407.8 465.6L2245 136L2261 179Z" fill="url(#w136)"/><path d="M1407.8 465.6L2259 173L2273 217Z" fill="url(#w137)"/><path d="M1407.8 465.6L2271 211L2283 255Z" fill="url(#w138)"/><path d="M1407.8 465.6L2281 249L2291 293Z" fill="url(#w139)"/><path d="M1407.8 465.6L2290 287L2298 332Z" fill="url(#w140)"/><path d="M1407.8 465.6L2297 326L2303 371Z" fill="url(#w141)"/><path d="M1407.8 465.6L2302 364L2306 410Z" fill="url(#w142)"/><path d="M1407.8 465.6L2306 404L2308 449Z" fill="url(#w143)"/></g><clipPath id="cloc"><path d="M1294.2 667.5C1292.2 666.4 1286.2 663.4 1282.6 661.3C1279.0 659.1 1275.8 656.7 1272.8 654.4C1269.8 652.1 1267.4 650.3 1264.6 647.5C1261.7 644.7 1258.8 641.8 1255.5 637.6C1252.3 633.3 1249.1 629.2 1244.9 622.0C1240.6 614.8 1233.2 600.3 1230.1 594.6C1227.0 588.9 1230.0 596.1 1226.3 587.9C1222.5 579.7 1214.0 562.4 1207.7 545.5C1201.5 528.7 1194.8 508.8 1188.6 486.8C1182.5 464.7 1175.8 438.7 1170.7 413.4C1165.6 388.1 1160.8 360.2 1158.1 335.1C1155.4 309.9 1153.8 284.5 1154.6 262.5C1155.4 240.5 1158.0 219.4 1162.8 203.1C1167.6 186.7 1175.0 173.2 1183.3 164.6C1191.6 155.9 1202.0 152.5 1212.3 151.0C1222.6 149.5 1234.1 152.8 1245.0 155.7C1256.0 158.6 1267.5 163.7 1278.3 168.4C1289.0 173.0 1299.3 178.1 1309.6 183.5C1319.8 188.9 1329.7 194.6 1339.7 200.5C1349.6 206.5 1359.5 212.8 1369.4 219.2C1379.2 225.7 1388.9 232.4 1398.7 239.2C1408.5 246.0 1418.2 252.9 1428.0 260.0C1437.8 267.0 1447.6 274.2 1457.3 281.4C1467.1 288.6 1476.8 295.9 1486.5 303.2C1496.2 310.4 1506.0 317.7 1515.6 324.9C1525.1 332.1 1534.7 339.3 1544.0 346.4C1553.4 353.5 1562.6 360.5 1571.7 367.4C1580.7 374.2 1589.6 380.9 1598.1 387.4C1606.7 393.9 1615.1 400.2 1623.1 406.2C1631.0 412.3 1638.7 418.1 1645.8 423.5C1652.9 428.9 1659.3 433.8 1665.5 438.5C1671.7 443.1 1677.6 447.6 1682.9 451.6C1688.2 455.6 1691.4 458.0 1697.4 462.5C1703.3 466.9 1712.7 474.1 1718.4 478.5C1724.2 482.8 1728.1 485.8 1731.9 488.6C1735.6 491.5 1738.5 493.7 1741.0 495.5C1743.5 497.4 1745.2 498.7 1746.7 499.8C1748.2 501.0 1749.0 501.6 1750.0 502.3C1751.0 503.1 1752.1 504.0 1752.8 504.5C1753.4 504.9 1753.7 505.1 1753.9 505.3Z"/></clipPath><clipPath id="ctri"><path d="M1366.5 246.5L1510.5 334.4L1699.5 469.5L1426 576.5L1277 627.5L1314.5 462.5Z"/></clipPath><clipPath id="cplot"><rect x="1151" y="147.2" width="690" height="522.8"/></clipPath></defs>
<g clip-path="url(#cplot)">
<g clip-path="url(#cloc)"><use href="#wedges"/><rect x="1151" y="147.2" width="690" height="522.8" fill="#000" opacity="0.42"/></g>
<g clip-path="url(#ctri)"><use href="#wedges"/><circle cx="1407.8" cy="465.6" r="22" fill="url(#wglow)"/></g>
</g>
<path d="M1151 147.2H1841V676M1144 670H1841M1151 147.2V676" fill="none" stroke="#a8a8a8" stroke-width="1.6"/>
<line x1="1151.4" y1="670" x2="1151.4" y2="676" stroke="#a8a8a8" stroke-width="1.3"/>
<text x="1151.4" y="693" text-anchor="middle" font-size="15" fill="#d8d8d8">0</text>
<line x1="1144" y1="670.6" x2="1151" y2="670.6" stroke="#a8a8a8" stroke-width="1.3"/>
<text x="1144" y="676.1" text-anchor="end" font-size="15" fill="#d8d8d8">0</text>
<line x1="1233.4" y1="670" x2="1233.4" y2="676" stroke="#a8a8a8" stroke-width="1.3"/>
<text x="1233.4" y="693" text-anchor="middle" font-size="15" fill="#d8d8d8">0,1</text>
<line x1="1144" y1="608.3" x2="1151" y2="608.3" stroke="#a8a8a8" stroke-width="1.3"/>
<text x="1144" y="613.8" text-anchor="end" font-size="15" fill="#d8d8d8">0,1</text>
<line x1="1315.4" y1="670" x2="1315.4" y2="676" stroke="#a8a8a8" stroke-width="1.3"/>
<text x="1315.4" y="693" text-anchor="middle" font-size="15" fill="#d8d8d8">0,2</text>
<line x1="1144" y1="546.0" x2="1151" y2="546.0" stroke="#a8a8a8" stroke-width="1.3"/>
<text x="1144" y="551.5" text-anchor="end" font-size="15" fill="#d8d8d8">0,2</text>
<line x1="1397.4" y1="670" x2="1397.4" y2="676" stroke="#a8a8a8" stroke-width="1.3"/>
<text x="1397.4" y="693" text-anchor="middle" font-size="15" fill="#d8d8d8">0,3</text>
<line x1="1144" y1="483.6" x2="1151" y2="483.6" stroke="#a8a8a8" stroke-width="1.3"/>
<text x="1144" y="489.1" text-anchor="end" font-size="15" fill="#d8d8d8">0,3</text>
<line x1="1479.4" y1="670" x2="1479.4" y2="676" stroke="#a8a8a8" stroke-width="1.3"/>
<text x="1479.4" y="693" text-anchor="middle" font-size="15" fill="#d8d8d8">0,4</text>
<line x1="1144" y1="421.3" x2="1151" y2="421.3" stroke="#a8a8a8" stroke-width="1.3"/>
<text x="1144" y="426.8" text-anchor="end" font-size="15" fill="#d8d8d8">0,4</text>
<line x1="1561.4" y1="670" x2="1561.4" y2="676" stroke="#a8a8a8" stroke-width="1.3"/>
<text x="1561.4" y="693" text-anchor="middle" font-size="15" fill="#d8d8d8">0,5</text>
<line x1="1144" y1="359.0" x2="1151" y2="359.0" stroke="#a8a8a8" stroke-width="1.3"/>
<text x="1144" y="364.5" text-anchor="end" font-size="15" fill="#d8d8d8">0,5</text>
<line x1="1643.4" y1="670" x2="1643.4" y2="676" stroke="#a8a8a8" stroke-width="1.3"/>
<text x="1643.4" y="693" text-anchor="middle" font-size="15" fill="#d8d8d8">0,6</text>
<line x1="1144" y1="296.7" x2="1151" y2="296.7" stroke="#a8a8a8" stroke-width="1.3"/>
<text x="1144" y="302.2" text-anchor="end" font-size="15" fill="#d8d8d8">0,6</text>
<line x1="1725.4" y1="670" x2="1725.4" y2="676" stroke="#a8a8a8" stroke-width="1.3"/>
<text x="1725.4" y="693" text-anchor="middle" font-size="15" fill="#d8d8d8">0,7</text>
<line x1="1144" y1="234.4" x2="1151" y2="234.4" stroke="#a8a8a8" stroke-width="1.3"/>
<text x="1144" y="239.9" text-anchor="end" font-size="15" fill="#d8d8d8">0,7</text>
<line x1="1807.4" y1="670" x2="1807.4" y2="676" stroke="#a8a8a8" stroke-width="1.3"/>
<text x="1807.4" y="693" text-anchor="middle" font-size="15" fill="#d8d8d8">0,8</text>
<line x1="1144" y1="172.0" x2="1151" y2="172.0" stroke="#a8a8a8" stroke-width="1.3"/>
<text x="1144" y="177.5" text-anchor="end" font-size="15" fill="#d8d8d8">0,8</text>
<text x="1482" y="141.8" text-anchor="middle" font-size="16.2" letter-spacing="-0.55" fill="#d8d8d8">CIE 1931 xy</text>
<rect x="1116" y="118" width="732" height="586" fill="none" stroke="#c8c000" stroke-width="8"/>
<rect x="1361.0" y="232.2" width="14" height="14" fill="none" stroke="#f4f4f4" stroke-width="2.2"/>
<circle cx="1365.5" cy="236.2" r="4.7" fill="#28b028" stroke="#141414" stroke-width="1.4"/>
<rect x="1368.8" y="281.2" width="14" height="14" fill="none" stroke="#f4f4f4" stroke-width="2.2"/>
<circle cx="1374.0" cy="280.0" r="4.7" fill="#58a858" stroke="#141414" stroke-width="1.4"/>
<rect x="1377.0" y="323.5" width="14" height="14" fill="none" stroke="#f4f4f4" stroke-width="2.2"/>
<circle cx="1381.0" cy="324.5" r="4.7" fill="#6aa86a" stroke="#141414" stroke-width="1.4"/>
<rect x="1384.5" y="366.0" width="14" height="14" fill="none" stroke="#f4f4f4" stroke-width="2.2"/>
<circle cx="1390.0" cy="370.8" r="4.7" fill="#80b080" stroke="#141414" stroke-width="1.4"/>
<rect x="1392.0" y="411.0" width="14" height="14" fill="none" stroke="#f4f4f4" stroke-width="2.2"/>
<circle cx="1399.0" cy="417.0" r="4.7" fill="#98b898" stroke="#141414" stroke-width="1.4"/>
<rect x="1503.0" y="327.0" width="14" height="14" fill="none" stroke="#f4f4f4" stroke-width="2.2"/>
<circle cx="1505.8" cy="331.8" r="4.7" fill="#b8b840" stroke="#141414" stroke-width="1.4"/>
<rect x="1481.0" y="355.0" width="14" height="14" fill="none" stroke="#f4f4f4" stroke-width="2.2"/>
<circle cx="1485.5" cy="357.5" r="4.7" fill="#b8b860" stroke="#141414" stroke-width="1.4"/>
<rect x="1459.8" y="381.0" width="14" height="14" fill="none" stroke="#f4f4f4" stroke-width="2.2"/>
<circle cx="1465.5" cy="385.0" r="4.7" fill="#b8b878" stroke="#141414" stroke-width="1.4"/>
<rect x="1440.5" y="405.5" width="14" height="14" fill="none" stroke="#f4f4f4" stroke-width="2.2"/>
<circle cx="1446.8" cy="411.5" r="4.7" fill="#bcbc90" stroke="#141414" stroke-width="1.4"/>
<rect x="1420.5" y="430.5" width="14" height="14" fill="none" stroke="#f4f4f4" stroke-width="2.2"/>
<circle cx="1428.0" cy="435.5" r="4.7" fill="#c0c0a8" stroke="#141414" stroke-width="1.4"/>
<rect x="1307.5" y="455.5" width="14" height="14" fill="none" stroke="#f4f4f4" stroke-width="2.2"/>
<circle cx="1314.5" cy="462.5" r="4.7" fill="#40a8a8" stroke="#141414" stroke-width="1.4"/>
<rect x="1326.2" y="455.5" width="14" height="14" fill="none" stroke="#f4f4f4" stroke-width="2.2"/>
<circle cx="1333.2" cy="462.5" r="4.7" fill="#68b0b0" stroke="#141414" stroke-width="1.4"/>
<rect x="1344.8" y="455.5" width="14" height="14" fill="none" stroke="#f4f4f4" stroke-width="2.2"/>
<circle cx="1352.5" cy="463.0" r="4.7" fill="#80b8b8" stroke="#141414" stroke-width="1.4"/>
<rect x="1362.5" y="455.5" width="14" height="14" fill="none" stroke="#f4f4f4" stroke-width="2.2"/>
<circle cx="1370.0" cy="463.0" r="4.7" fill="#98bcbc" stroke="#141414" stroke-width="1.4"/>
<rect x="1381.2" y="455.5" width="14" height="14" fill="none" stroke="#f4f4f4" stroke-width="2.2"/>
<circle cx="1388.8" cy="463.0" r="4.7" fill="#a8c0c0" stroke="#141414" stroke-width="1.4"/>
<rect x="1373.0" y="490.0" width="14" height="14" fill="none" stroke="#f4f4f4" stroke-width="2.2"/>
<circle cx="1380.8" cy="498.2" r="4.7" fill="#a0a0c0" stroke="#141414" stroke-width="1.4"/>
<rect x="1346.8" y="524.8" width="14" height="14" fill="none" stroke="#f4f4f4" stroke-width="2.2"/>
<circle cx="1355.5" cy="533.2" r="4.7" fill="#8888c0" stroke="#141414" stroke-width="1.4"/>
<rect x="1320.8" y="556.2" width="14" height="14" fill="none" stroke="#f4f4f4" stroke-width="2.2"/>
<circle cx="1329.2" cy="568.0" r="4.7" fill="#7070c0" stroke="#141414" stroke-width="1.4"/>
<rect x="1294.8" y="589.8" width="14" height="14" fill="none" stroke="#f4f4f4" stroke-width="2.2"/>
<circle cx="1301.8" cy="604.2" r="4.7" fill="#5050b8" stroke="#141414" stroke-width="1.4"/>
<rect x="1266.0" y="624.8" width="14" height="14" fill="none" stroke="#f4f4f4" stroke-width="2.2"/>
<circle cx="1275.8" cy="640.0" r="4.7" fill="#2020b0" stroke="#141414" stroke-width="1.4"/>
<rect x="1403.0" y="479.2" width="14" height="14" fill="none" stroke="#f4f4f4" stroke-width="2.2"/>
<circle cx="1411.8" cy="486.8" r="4.7" fill="#c0a0c0" stroke="#141414" stroke-width="1.4"/>
<rect x="1407.5" y="501.2" width="14" height="14" fill="none" stroke="#f4f4f4" stroke-width="2.2"/>
<circle cx="1414.2" cy="509.5" r="4.7" fill="#c090c0" stroke="#141414" stroke-width="1.4"/>
<rect x="1412.2" y="523.0" width="14" height="14" fill="none" stroke="#f4f4f4" stroke-width="2.2"/>
<circle cx="1419.2" cy="531.2" r="4.7" fill="#c080c0" stroke="#141414" stroke-width="1.4"/>
<rect x="1415.5" y="545.0" width="14" height="14" fill="none" stroke="#f4f4f4" stroke-width="2.2"/>
<circle cx="1423.2" cy="555.8" r="4.7" fill="#c060c0" stroke="#141414" stroke-width="1.4"/>
<rect x="1418.8" y="568.8" width="14" height="14" fill="none" stroke="#f4f4f4" stroke-width="2.2"/>
<circle cx="1427.5" cy="579.2" r="4.7" fill="#c040c0" stroke="#141414" stroke-width="1.4"/>
<rect x="1459.2" y="458.0" width="14" height="14" fill="none" stroke="#f4f4f4" stroke-width="2.2"/>
<circle cx="1465.0" cy="465.0" r="4.7" fill="#c08080" stroke="#141414" stroke-width="1.4"/>
<rect x="1516.3" y="459.4" width="14" height="14" fill="none" stroke="#f4f4f4" stroke-width="2.2"/>
<circle cx="1523.3" cy="465.2" r="4.7" fill="#c07070" stroke="#141414" stroke-width="1.4"/>
<rect x="1579.0" y="460.8" width="14" height="14" fill="none" stroke="#f4f4f4" stroke-width="2.2"/>
<circle cx="1587.2" cy="466.8" r="4.7" fill="#c06060" stroke="#141414" stroke-width="1.4"/>
<rect x="1633.7" y="462.0" width="14" height="14" fill="none" stroke="#f4f4f4" stroke-width="2.2"/>
<circle cx="1645.1" cy="468.2" r="4.7" fill="#c05050" stroke="#141414" stroke-width="1.4"/>
<rect x="1701.5" y="462.3" width="14" height="14" fill="none" stroke="#f4f4f4" stroke-width="2.2"/>
<circle cx="1702.7" cy="469.3" r="4.7" fill="#b01010" stroke="#141414" stroke-width="1.4"/>
<rect x="1400.3" y="457.7" width="14" height="14" fill="none" stroke="#101010" stroke-width="2.2"/>
<circle cx="1407.5" cy="463.5" r="5.5" fill="#ffffff" stroke="#141414" stroke-width="1.4"/>
<defs><clipPath id="cins"><rect x="1601" y="154.4" width="232.4000000000001" height="195.20000000000002"/></clipPath><linearGradient id="ins1" gradientUnits="userSpaceOnUse" x1="1601" y1="154" x2="1833" y2="349"><stop offset="0" stop-color="#b8ff00"/><stop offset="0.22" stop-color="#d8ff00"/><stop offset="0.45" stop-color="#ffff00"/><stop offset="0.7" stop-color="#ffe400"/><stop offset="1" stop-color="#ffbc00"/></linearGradient></defs>
<g clip-path="url(#cins)"><rect x="1601" y="154.4" width="232.4000000000001" height="195.20000000000002" fill="url(#ins1)"/><path d="M1590 157.5L1601.4 165.7L1833.3 337.5L1845 346L1845 140L1590 140Z" fill="#000" opacity="0.45"/><path d="M1705 140L1719.4 154.3Q1775 199 1833.3 249.6L1845 259L1845 140Z" fill="#262626"/></g>
<rect x="1601" y="154.4" width="232.4000000000001" height="195.20000000000002" fill="none" stroke="#a0a0a0" stroke-width="1.8"/>
<rect x="1709.0" y="244.0" width="14" height="14" fill="none" stroke="#f4f4f4" stroke-width="2.2"/>
<circle cx="1694.0" cy="228.0" r="4.5" fill="#b8c000" stroke="#141414" stroke-width="1.4"/>
</svg>

<!-- current reading -->
<div class="a cr" style="left:91px;top:742px;font-size:32px;line-height:36px">Current Reading</div>
<div class="a cr" style="left:91px;top:791px">x: 0,4332</div>
<div class="a cr" style="left:91px;top:835px">y: 0,5416</div>
<div class="a cr" style="left:91px;top:877.5px">fL: 77,6</div>
<div class="a cr" style="left:91px;top:920.5px;letter-spacing:0.75px">cd/m²: 265,89</div>

<svg class="a" style="left:0;top:0" width="1920" height="1039"><rect x="443" y="749.3" width="279" height="192.7" fill="#262626"/><line x1="443" y1="797.5" x2="722" y2="797.5" stroke="#a8a8a8" stroke-width="1.3"/><line x1="443" y1="845.6" x2="722" y2="845.6" stroke="#a8a8a8" stroke-width="1.3"/><line x1="443" y1="893.8" x2="722" y2="893.8" stroke="#a8a8a8" stroke-width="1.3"/><path d="M438 749.3H722V948M438 942H722M443 749.3V948" fill="none" stroke="#a8a8a8" stroke-width="1.5"/><line x1="438" y1="749.3" x2="443" y2="749.3" stroke="#a8a8a8" stroke-width="1.3"/><text x="437.5" y="755.3" text-anchor="end" font-size="16.2" letter-spacing="0.3" fill="#d8d8d8">4</text><line x1="438" y1="797.5" x2="443" y2="797.5" stroke="#a8a8a8" stroke-width="1.3"/><text x="437.5" y="803.5" text-anchor="end" font-size="16.2" letter-spacing="0.3" fill="#d8d8d8">2</text><line x1="438" y1="845.6" x2="443" y2="845.6" stroke="#a8a8a8" stroke-width="1.3"/><text x="437.5" y="851.6" text-anchor="end" font-size="16.2" letter-spacing="0.3" fill="#d8d8d8">0</text><line x1="438" y1="893.8" x2="443" y2="893.8" stroke="#a8a8a8" stroke-width="1.3"/><text x="437.5" y="899.8" text-anchor="end" font-size="16.2" letter-spacing="0.3" fill="#d8d8d8">-2</text><line x1="438" y1="942.0" x2="443" y2="942.0" stroke="#a8a8a8" stroke-width="1.3"/><text x="437.5" y="948.0" text-anchor="end" font-size="16.2" letter-spacing="0.3" fill="#d8d8d8">-4</text><text x="573" y="744" text-anchor="middle" font-size="15" fill="#d8d8d8">RGB Balance</text><text x="582" y="958.5" text-anchor="middle" font-size="15.5" fill="#d8d8d8">100%</text><defs><linearGradient id="rbg" x1="0" y1="0" x2="0" y2="1"><stop offset="0" stop-color="#fff" stop-opacity="0.28"/><stop offset="0.25" stop-color="#fff" stop-opacity="0"/><stop offset="0.75" stop-color="#000" stop-opacity="0.1"/><stop offset="1" stop-color="#000" stop-opacity="0.45"/></linearGradient></defs><rect x="471" y="845.6" width="72.4" height="36.2" fill="#ff0000" stroke="#000" stroke-width="1.3"/><rect x="471" y="845.6" width="72.4" height="36.2" fill="url(#rbg)"/><rect x="545.3" y="763.6" width="72.0" height="82.0" fill="#008000" stroke="#000" stroke-width="1.3"/><rect x="545.3" y="763.6" width="72.0" height="82.0" fill="url(#rbg)"/><rect x="619" y="845.6" width="72.7" height="94.1" fill="#0000ff" stroke="#000" stroke-width="1.3"/><rect x="619" y="845.6" width="72.7" height="94.1" fill="url(#rbg)"/></svg>
<div class="a" style="left:745px;top:724px;width:20.5px;height:214.5px;background:linear-gradient(90deg,#1a1a1a,#2e2e2e)"></div>
<div class="a" style="left:745px;top:724px;width:20.5px;height:33px;background:#000"></div>
<div class="a" style="left:765.5px;top:724px;width:747.5px;height:33px;background:linear-gradient(#333333 0%,#2e2e2e 50%,#161616 51%,#121212 100%)"></div>
<div class="a tt" style="left:943px;top:729px;font-size:18.5px">20%</div>
<div class="a tt" style="left:1058px;top:729px;font-size:18.5px">40%</div>
<div class="a tt" style="left:1173.3px;top:729px;font-size:18.5px">60%</div>
<div class="a tt" style="left:1288.6px;top:729px;font-size:18.5px">80%</div>
<div class="a tt" style="left:1404.6px;top:729px;font-size:18.5px">100%</div>
<div class="a" style="left:765.5px;top:757.00px;width:747.5px;height:30.55px;background:#444444"></div>
<div class="a tt" style="left:773px;top:760.50px;letter-spacing:1.1px">x: CIE31</div>
<div class="a tt" style="left:943px;top:760.50px">0,3378</div>
<div class="a tt" style="left:1058px;top:760.50px">0,3604</div>
<div class="a tt" style="left:1173.3px;top:760.50px">0,3840</div>
<div class="a tt" style="left:1288.6px;top:760.50px">0,4094</div>
<div class="a tt" style="left:1404.6px;top:760.50px">0,4332</div>
<div class="a" style="left:765.5px;top:787.25px;width:747.5px;height:30.55px;background:#888888"></div>
<div class="a tt" style="left:773px;top:790.75px;letter-spacing:1.1px">y: CIE31</div>
<div class="a tt" style="left:943px;top:790.75px">0,3735</div>
<div class="a tt" style="left:1058px;top:790.75px">0,4133</div>
<div class="a tt" style="left:1173.3px;top:790.75px">0,4549</div>
<div class="a tt" style="left:1288.6px;top:790.75px">0,4996</div>
<div class="a tt" style="left:1404.6px;top:790.75px">0,5416</div>
<div class="a" style="left:765.5px;top:817.50px;width:747.5px;height:30.55px;background:#444444"></div>
<div class="a tt" style="left:773px;top:821.00px;letter-spacing:1.1px">Y</div>
<div class="a tt" style="left:943px;top:821.00px">279,0833</div>
<div class="a tt" style="left:1058px;top:821.00px">275,1969</div>
<div class="a tt" style="left:1173.3px;top:821.00px">271,8824</div>
<div class="a tt" style="left:1288.6px;top:821.00px">268,9782</div>
<div class="a tt" style="left:1404.6px;top:821.00px">265,8932</div>
<div class="a" style="left:765.5px;top:847.75px;width:747.5px;height:30.55px;background:#888888"></div>
<div class="a tt" style="left:773px;top:851.25px;letter-spacing:1.1px">Target x:CIE31</div>
<div class="a tt" style="left:943px;top:851.25px">0,3386</div>
<div class="a tt" style="left:1058px;top:851.25px">0,3620</div>
<div class="a tt" style="left:1173.3px;top:851.25px">0,3865</div>
<div class="a tt" style="left:1288.6px;top:851.25px">0,4114</div>
<div class="a tt" style="left:1404.6px;top:851.25px">0,4378</div>
<div class="a" style="left:765.5px;top:878.00px;width:747.5px;height:30.55px;background:#444444"></div>
<div class="a tt" style="left:773px;top:881.50px;letter-spacing:1.1px">Target y:CIE31</div>
<div class="a tt" style="left:943px;top:881.50px">0,3718</div>
<div class="a tt" style="left:1058px;top:881.50px">0,4105</div>
<div class="a tt" style="left:1173.3px;top:881.50px">0,4510</div>
<div class="a tt" style="left:1288.6px;top:881.50px">0,4922</div>
<div class="a tt" style="left:1404.6px;top:881.50px">0,5359</div>
<div class="a" style="left:765.5px;top:908.25px;width:747.5px;height:30.55px;background:#888888"></div>
<div class="a tt" style="left:773px;top:911.75px;letter-spacing:1.1px">Target Y</div>
<div class="a tt" style="left:943px;top:911.75px">275,0784</div>
<div class="a tt" style="left:1058px;top:911.75px">270,1788</div>
<div class="a tt" style="left:1173.3px;top:911.75px">266,0891</div>
<div class="a tt" style="left:1288.6px;top:911.75px">262,7167</div>
<div class="a tt" style="left:1404.6px;top:911.75px">259,7766</div>
<div id="bottombar" class="a"></div>
<div class="a" style="left:1px;top:969px;width:51px;height:69px;border-radius:4px;background:linear-gradient(#9a9a9a,#7c7c7c 45%,#6a6a6a)"></div>
<div class="a" style="left:17.5px;top:970.5px;width:17px;height:17px;border-radius:50%;background:radial-gradient(circle at 50% 30%,#6a6a6a,#7a7a7a 80%)"></div>
<svg class="a" style="left:21.5px;top:976px" width="9" height="5"><path d="M0 4.8L4.5 0L9 4.8Z" fill="#1a1a1a"/></svg>
<div class="a" style="left:7px;top:998px;width:40px;height:35px;border-radius:4px;background:#ffff00;border:1.5px solid #b8b800"></div>
<div class="a" style="left:58.75px;top:969px;width:170px;height:69px;border-radius:4px;background:linear-gradient(#acaca8,#8a8a88 30%,#707070 70%,#5c5c5c)"></div>
<div class="a" style="left:64.25px;top:975px;width:158.5px;height:40.5px;border-radius:4px;background:#c2c4a2;border:1px solid rgba(0,0,0,0.18)"></div>
<div class="a" style="left:58.75px;top:1023px;width:170px;text-align:center;font-size:11px;font-weight:bold;color:#2a2a2a">20%</div>
<div class="a" style="left:230.5px;top:969px;width:170px;height:69px;border-radius:4px;background:linear-gradient(#acaca8,#8a8a88 30%,#707070 70%,#5c5c5c)"></div>
<div class="a" style="left:236.0px;top:975px;width:158.5px;height:40.5px;border-radius:4px;background:#c2c288;border:1px solid rgba(0,0,0,0.18)"></div>
<div class="a" style="left:230.5px;top:1023px;width:170px;text-align:center;font-size:11px;font-weight:bold;color:#2a2a2a">40%</div>
<div class="a" style="left:402.5px;top:969px;width:170px;height:69px;border-radius:4px;background:linear-gradient(#acaca8,#8a8a88 30%,#707070 70%,#5c5c5c)"></div>
<div class="a" style="left:408.0px;top:975px;width:158.5px;height:40.5px;border-radius:4px;background:#c2c266;border:1px solid rgba(0,0,0,0.18)"></div>
<div class="a" style="left:402.5px;top:1023px;width:170px;text-align:center;font-size:11px;font-weight:bold;color:#2a2a2a">60%</div>
<div class="a" style="left:573.5px;top:969px;width:170px;height:69px;border-radius:4px;background:linear-gradient(#acaca8,#8a8a88 30%,#707070 70%,#5c5c5c)"></div>
<div class="a" style="left:579.0px;top:975px;width:158.5px;height:40.5px;border-radius:4px;background:#c2c242;border:1px solid rgba(0,0,0,0.18)"></div>
<div class="a" style="left:573.5px;top:1023px;width:170px;text-align:center;font-size:11px;font-weight:bold;color:#2a2a2a">80%</div>
<div class="a" style="left:745.5px;top:969px;width:169.5px;height:69px;border-radius:4px;background:linear-gradient(#1e1e1e,#2a2a2a 50%,#343434)"></div>
<div class="a" style="left:751px;top:974px;width:159px;height:42px;border-radius:5px;background:#c6c200;border:1px solid #8a8800"></div>
<div class="a" style="left:745.5px;top:1023px;width:169.5px;text-align:center;font-size:11px;font-weight:bold;color:#f4f4f4">100%</div>
<div class="a" style="left:1563.5px;top:969px;width:54px;height:20px;border-radius:4px 4px 0 0;background:linear-gradient(#a8a8a8,#8c8c8c)"></div>
<div class="a" style="left:1563.5px;top:989px;width:54px;height:2px;background:#555"></div>
<div class="a" style="left:1563.5px;top:991px;width:54px;height:46.5px;border-radius:0 0 4px 4px;background:linear-gradient(#9a9a9a,#7a7a7a)"></div>
<div class="a" style="left:1582px;top:970.5px;width:17px;height:17px;border-radius:50%;background:radial-gradient(circle at 50% 30%,#7a7a7a,#9a9a9a 85%)"></div>
<svg class="a" style="left:1585px;top:976px" width="12" height="7"><path d="M0 6.5L6 0L12 6.5Z" fill="#2a2a2a"/></svg>
<div class="a" style="left:1573.5px;top:997px;width:34px;height:34px;border-radius:5px;border:3px solid #181818;background:linear-gradient(#b4b4b4 50%,#9a9a9a 50%)"></div>
<div class="a" style="left:1583px;top:1006.5px;width:15.5px;height:15.5px;background:linear-gradient(#1e1e1e 50%,#000 50%)"></div>
<div class="a" style="left:1619px;top:969px;width:255px;height:33px;background:#303030"></div>
<div class="a" style="left:1619px;top:969px;width:51px;height:33px;background:linear-gradient(#b0b0b0,#909090 50%,#767676)"></div>
<div class="a" style="left:1633.0px;top:974.5px;width:23px;height:23px;border-radius:50%;background:radial-gradient(circle at 50% 25%,#8a8a8a,#a0a0a0 75%,#a8a8a8)"></div>
<div class="a" style="left:1672px;top:969px;width:49px;height:33px;background:linear-gradient(#b0b0b0,#909090 50%,#767676)"></div>
<div class="a" style="left:1685.0px;top:974.5px;width:23px;height:23px;border-radius:50%;background:radial-gradient(circle at 50% 25%,#8a8a8a,#a0a0a0 75%,#a8a8a8)"></div>
<div class="a" style="left:1723px;top:969px;width:49px;height:33px;background:linear-gradient(#b0b0b0,#909090 50%,#767676)"></div>
<div class="a" style="left:1736.0px;top:974.5px;width:23px;height:23px;border-radius:50%;background:radial-gradient(circle at 50% 25%,#8a8a8a,#a0a0a0 75%,#a8a8a8)"></div>
<div class="a" style="left:1773.5px;top:969px;width:49.5px;height:33px;background:linear-gradient(#b0b0b0,#909090 50%,#767676)"></div>
<div class="a" style="left:1786.8px;top:974.5px;width:23px;height:23px;border-radius:50%;background:radial-gradient(circle at 50% 25%,#8a8a8a,#a0a0a0 75%,#a8a8a8)"></div>
<div class="a" style="left:1824.5px;top:969px;width:49.5px;height:33px;background:linear-gradient(#b0b0b0,#909090 50%,#767676)"></div>
<div class="a" style="left:1837.8px;top:974.5px;width:23px;height:23px;border-radius:50%;background:radial-gradient(circle at 50% 25%,#8a8a8a,#a0a0a0 75%,#a8a8a8)"></div>
<div class="a" style="left:1640px;top:981.7px;width:9px;height:8.5px;background:#2e2e2e"></div>
<svg class="a" style="left:1693px;top:981px" width="11" height="12"><path d="M0 0L10.5 5.8L0 11.5Z" fill="#2a2a2a"/></svg>
<svg class="a" style="left:1737px;top:980px" width="18" height="12"><path d="M3.5 1H1.2V11H3.5M14.5 1H16.8V11H14.5" fill="none" stroke="#2a2a2a" stroke-width="2.2"/><circle cx="7" cy="6" r="1.1" fill="#2a2a2a"/><circle cx="11" cy="6" r="1.1" fill="#2a2a2a"/></svg>
<svg class="a" style="left:1788px;top:980px" width="20" height="12"><path d="M10 6C7 2 2.5 1.5 2.5 6S7 10 10 6S17.5 1.5 17.5 6S13 10 10 6Z" fill="none" stroke="#2a2a2a" stroke-width="2.3"/></svg>
<svg class="a" style="left:1839px;top:977px" width="20" height="20"><path d="M15.5 7.5A6.2 6.2 0 0 0 4.2 8.2M4.5 12.5A6.2 6.2 0 0 0 15.8 11.8" fill="none" stroke="#2a2a2a" stroke-width="2.4"/><path d="M12.5 4.5L17.5 3.5L16.5 9Z M7.5 15.5L2.5 16.5L3.5 11Z" fill="#2a2a2a"/></svg>
<div class="a" style="left:1874px;top:969px;width:46px;height:33px;background:linear-gradient(#2e2e2e,#202020)"></div>
<div class="a" style="left:1889.5px;top:975px;width:23px;height:23px;border-radius:50%;background:radial-gradient(circle at 50% 40%,#242424,#303030 80%)"></div>
<div class="a" style="left:1619px;top:1003.5px;width:301px;height:35.5px;background:#2a2a2a"></div>
<div class="a" style="left:1619px;top:1004px;width:153px;height:34px;border-radius:4px 0 0 0;background:linear-gradient(#b8b8b8,#9a9a9a 40%,#888888)"></div>
<div class="a" style="left:1773.5px;top:1004px;width:146.5px;height:34px;background:linear-gradient(#b8b8b8,#9a9a9a 40%,#888888)"></div>
<div class="a" style="left:1641.8px;top:1009.3px;width:23px;height:23px;border-radius:50%;background:radial-gradient(circle at 50% 25%,#8c8c8c,#a4a4a4 75%,#acacac)"></div>
<div class="a" style="left:1882.2px;top:1009.3px;width:23px;height:23px;border-radius:50%;background:radial-gradient(circle at 50% 25%,#8c8c8c,#a4a4a4 75%,#acacac)"></div>
<svg class="a" style="left:1645px;top:1014px" width="16" height="14"><path d="M7 1L2 7L7 13M13 1L8 7L13 13" fill="none" stroke="#2a2a2a" stroke-width="1.8"/></svg>
<svg class="a" style="left:1886px;top:1014px" width="16" height="14"><path d="M3 1L8 7L3 13M9 1L14 7L9 13" fill="none" stroke="#2a2a2a" stroke-width="1.8"/></svg>
<div class="a" style="left:1682px;top:1008px;font-size:23.8px;line-height:28px;font-weight:bold;color:#2e2e2e;white-space:pre;letter-spacing:0.4px">Back</div>
<div class="a" style="left:1803px;top:1008px;font-size:23.8px;line-height:28px;font-weight:bold;color:#2e2e2e;white-space:pre;letter-spacing:2.4px">Next</div>
</body></html>
